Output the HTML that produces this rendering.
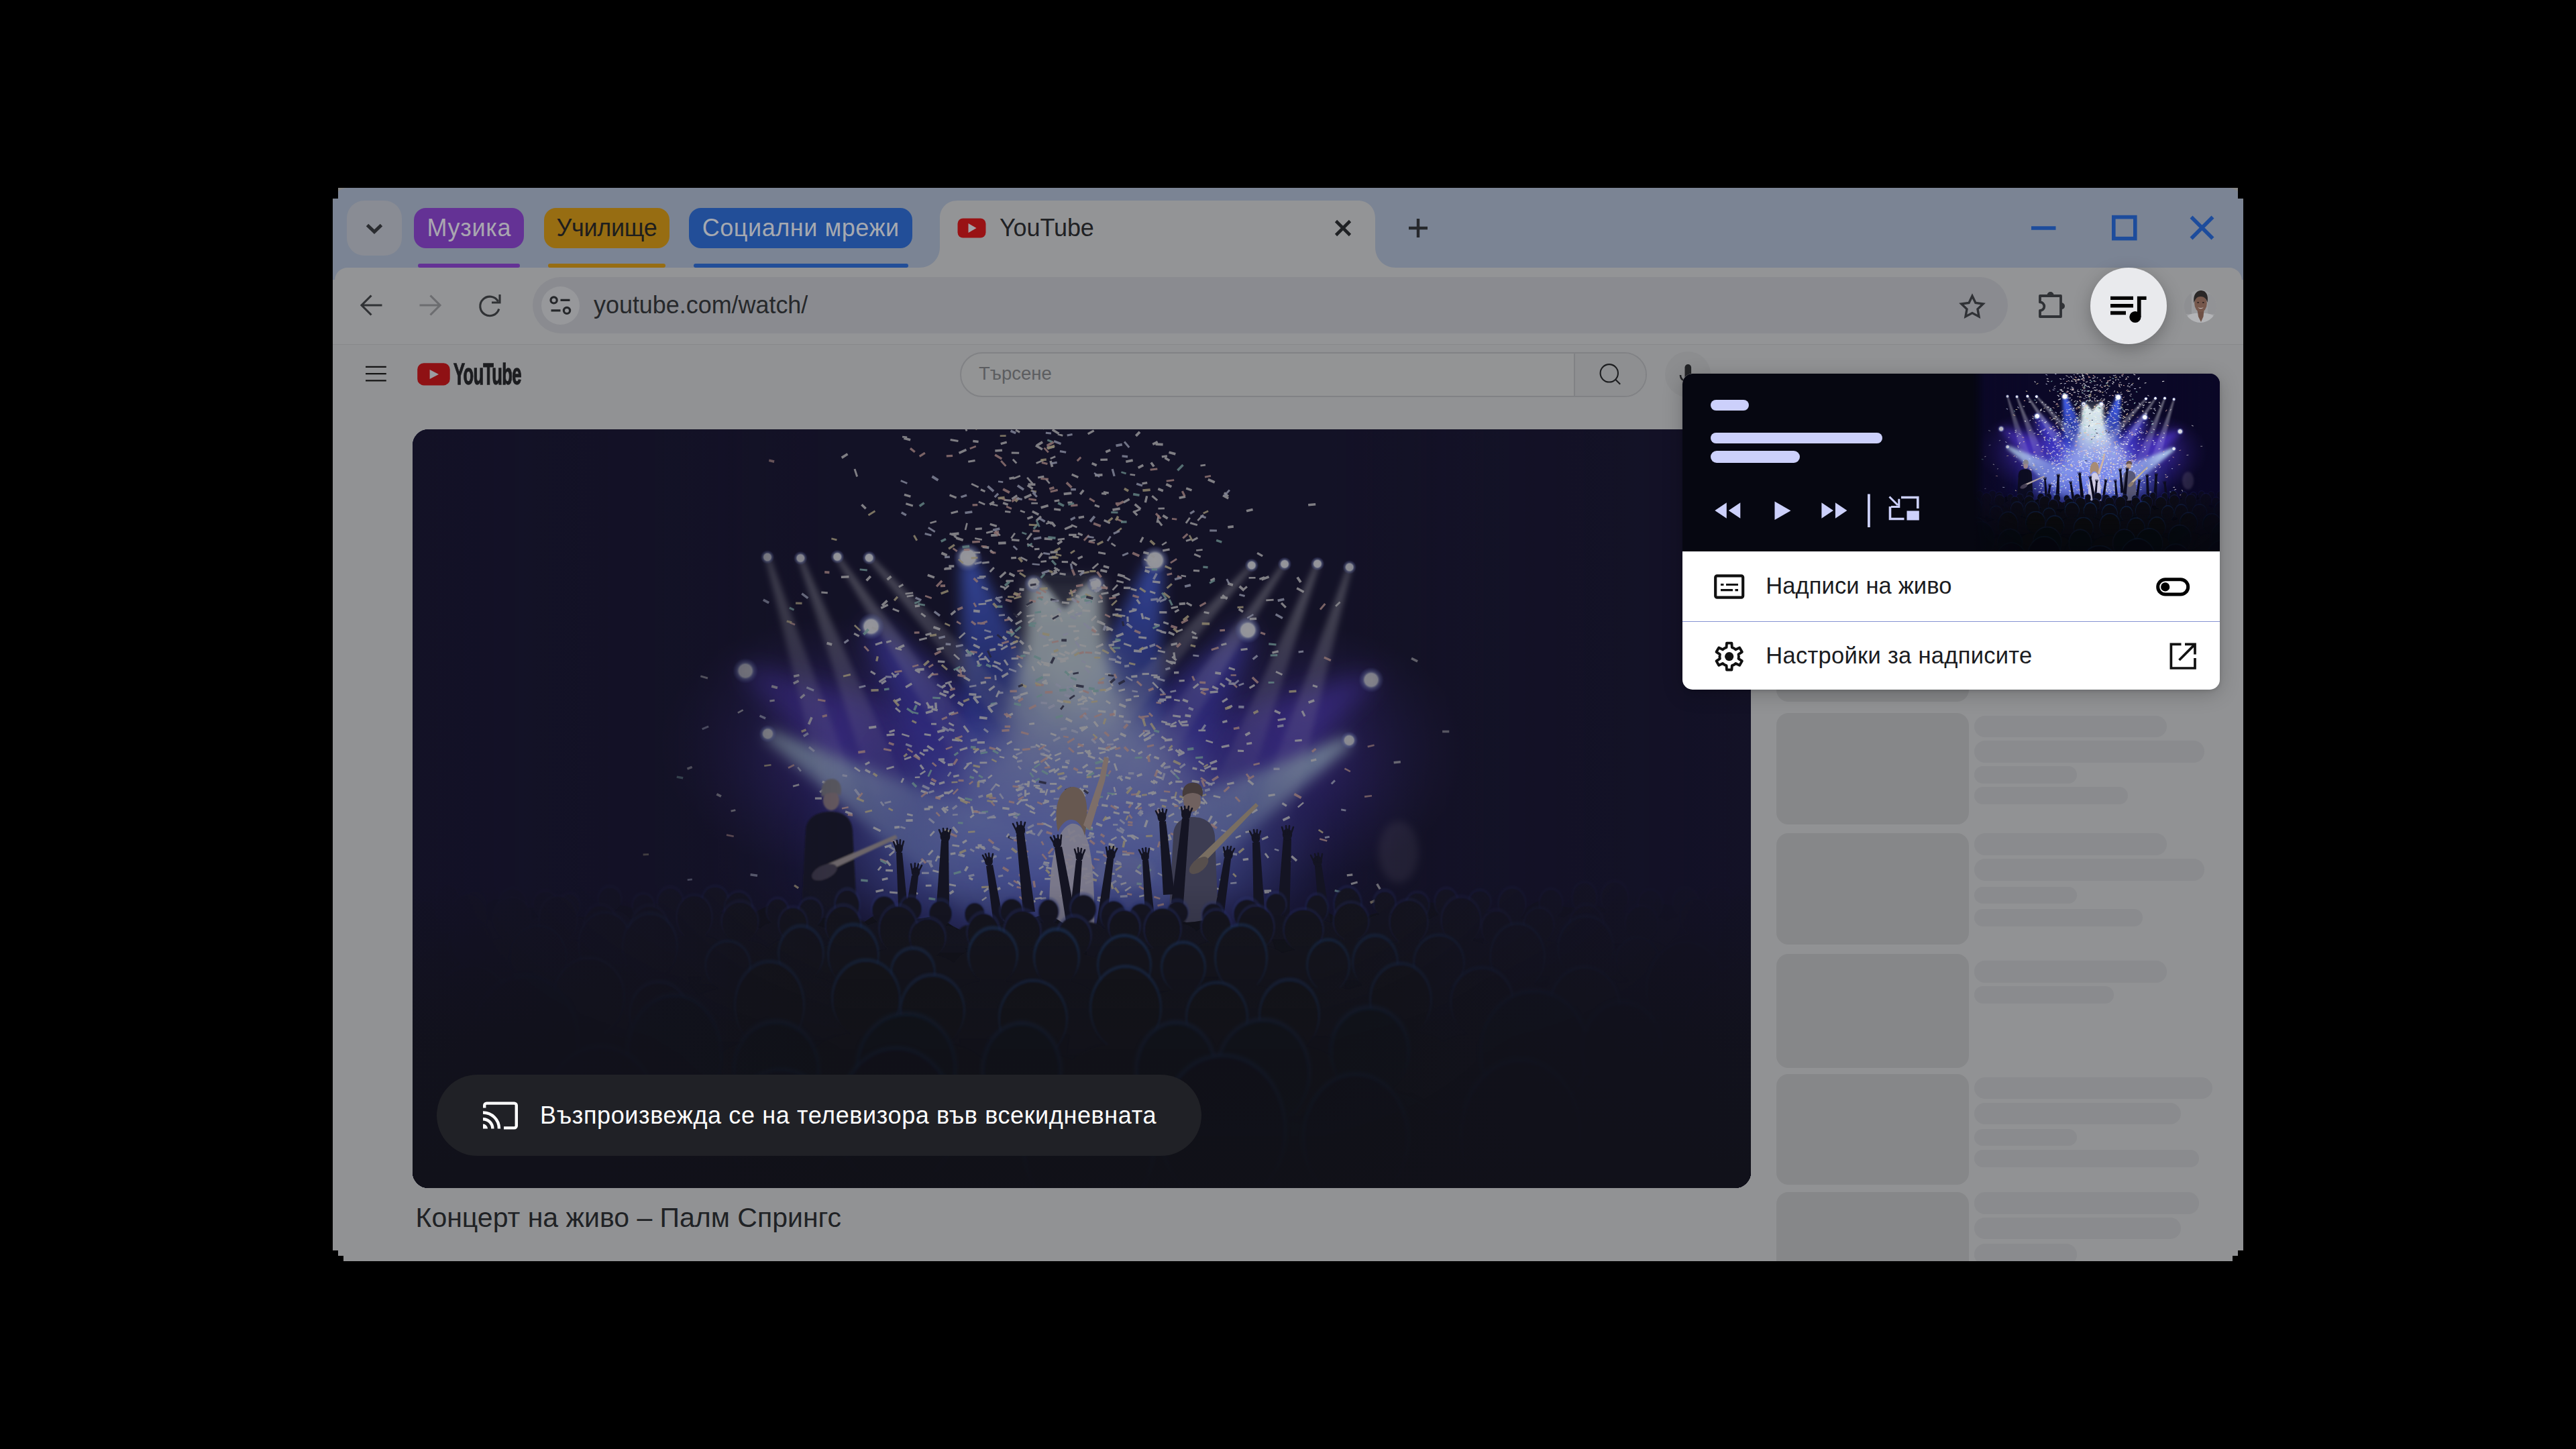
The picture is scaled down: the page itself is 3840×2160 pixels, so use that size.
<!DOCTYPE html>
<html lang="bg"><head><meta charset="utf-8"><title>YouTube</title><style>
html,body{margin:0;padding:0;background:#000;}
body{width:3840px;height:2160px;position:relative;overflow:hidden;font-family:"Liberation Sans",sans-serif;}
.abs{position:absolute;}
.t{white-space:nowrap;font-family:"Liberation Sans",sans-serif;}
#win{position:absolute;left:0;top:0;width:3840px;height:2160px;background:#878787;
 clip-path:polygon(504px 280px,3336px 280px,3336px 296px,3344px 296px,3344px 1864px,3336px 1864px,3336px 1872px,3328px 1872px,3328px 1880px,512px 1880px,512px 1872px,504px 1872px,504px 1864px,496px 1864px,496px 296px,504px 296px);}
#strip{position:absolute;left:496px;top:280px;width:2848px;height:160px;border-radius:23px 23px 0 0;background:#7b8494;}
.chip{position:absolute;top:310px;height:60px;border-radius:18px;font-size:36px;line-height:59px;text-align:center;white-space:nowrap;}
.ul{position:absolute;top:393px;height:6px;border-radius:3px;}
#toolbar{position:absolute;left:498.5px;top:399px;width:2843.5px;height:115px;border-radius:19px 19px 0 0;background:#939496;border-bottom:1.5px solid #88898b;box-sizing:border-box;}
#omni{position:absolute;left:794px;top:413px;width:2199px;height:84px;border-radius:42px;background:#8a8b90;}
#page{position:absolute;left:0;top:0;width:3840px;height:2160px;
 clip-path:polygon(496px 514px,3344px 514px,3344px 1864px,3336px 1864px,3336px 1872px,3328px 1872px,3328px 1880px,512px 1880px,512px 1872px,504px 1872px,504px 1864px,496px 1864px);
 background:#919294;}
#video{position:absolute;left:615px;top:640px;width:1995px;height:1131px;border-radius:24px;overflow:hidden;background:#14122a;}
#popup{position:absolute;left:2507.7px;top:557px;width:801.3px;height:471px;border-radius:15px;background:#fff;overflow:hidden;}
#popshadow{position:absolute;left:2507.7px;top:557px;width:801.3px;height:471px;border-radius:15px;box-shadow:0 6px 30px rgba(0,0,0,0.22),0 2px 6px rgba(0,0,0,0.12);}
</style></head><body>
<svg width="0" height="0" style="position:absolute"><defs>
<filter id="b1" x="-40%" y="-40%" width="180%" height="180%"><feGaussianBlur stdDeviation="0.8"/></filter>
<filter id="b2" x="-40%" y="-40%" width="180%" height="180%"><feGaussianBlur stdDeviation="1.6"/></filter>
<filter id="b3" x="-40%" y="-40%" width="180%" height="180%"><feGaussianBlur stdDeviation="2.6"/></filter>
<filter id="b4" x="-40%" y="-40%" width="180%" height="180%"><feGaussianBlur stdDeviation="4"/></filter>
<filter id="b6" x="-40%" y="-40%" width="180%" height="180%"><feGaussianBlur stdDeviation="6"/></filter>
<filter id="b10" x="-40%" y="-40%" width="180%" height="180%"><feGaussianBlur stdDeviation="10"/></filter>
<filter id="b18" x="-40%" y="-40%" width="180%" height="180%"><feGaussianBlur stdDeviation="18"/></filter>
<filter id="b30" x="-40%" y="-40%" width="180%" height="180%"><feGaussianBlur stdDeviation="30"/></filter>
<filter id="b50" x="-40%" y="-40%" width="180%" height="180%"><feGaussianBlur stdDeviation="50"/></filter>

<radialGradient id="gGlow" cx="0.5" cy="0.5" r="0.5">
 <stop offset="0" stop-color="#7086ff" stop-opacity="0.95"/>
 <stop offset="0.22" stop-color="#4656f0" stop-opacity="0.85"/>
 <stop offset="0.5" stop-color="#2c32c8" stop-opacity="0.55"/>
 <stop offset="0.75" stop-color="#201c90" stop-opacity="0.22"/>
 <stop offset="1" stop-color="#1a1660" stop-opacity="0"/>
</radialGradient>
<radialGradient id="gDot" cx="0.5" cy="0.5" r="0.5">
 <stop offset="0" stop-color="#ffffff" stop-opacity="1"/>
 <stop offset="0.5" stop-color="#f6f8ff" stop-opacity="1"/>
 <stop offset="0.66" stop-color="#b0c0ff" stop-opacity="0.5"/>
 <stop offset="1" stop-color="#7080ff" stop-opacity="0"/>
</radialGradient>
<radialGradient id="gPurple" cx="0.5" cy="0.5" r="0.5">
 <stop offset="0" stop-color="#6040e8" stop-opacity="0.6"/>
 <stop offset="0.6" stop-color="#4830c0" stop-opacity="0.25"/>
 <stop offset="1" stop-color="#4a30a0" stop-opacity="0"/>
</radialGradient>
<linearGradient id="gCol" gradientUnits="userSpaceOnUse" x1="0" y1="226" x2="0" y2="470">
 <stop offset="0" stop-color="#f0ffff" stop-opacity="0.96"/>
 <stop offset="0.5" stop-color="#e4f6fc" stop-opacity="0.84"/>
 <stop offset="0.8" stop-color="#d0e4f8" stop-opacity="0.4"/>
 <stop offset="1" stop-color="#c0d4f8" stop-opacity="0"/>
</linearGradient>
<linearGradient id="gCol2" gradientUnits="userSpaceOnUse" x1="0" y1="330" x2="0" y2="660">
 <stop offset="0" stop-color="#e8f6fc" stop-opacity="0.9"/>
 <stop offset="0.5" stop-color="#c8d8f8" stop-opacity="0.62"/>
 <stop offset="1" stop-color="#b0c0f4" stop-opacity="0"/>
</linearGradient>
<linearGradient id="gBottom" x1="0" y1="0" x2="0" y2="1">
 <stop offset="0" stop-color="#06070e" stop-opacity="0"/>
 <stop offset="0.6" stop-color="#06070e" stop-opacity="0"/>
 <stop offset="0.8" stop-color="#06070e" stop-opacity="0.7"/>
 <stop offset="1" stop-color="#06070e" stop-opacity="0.95"/>
</linearGradient>
<linearGradient id="gSide" x1="0" y1="0" x2="1" y2="0">
 <stop offset="0" stop-color="#0b0827" stop-opacity="0.95"/>
 <stop offset="0.2" stop-color="#0b0827" stop-opacity="0.5"/>
 <stop offset="0.32" stop-color="#0b0827" stop-opacity="0"/>
 <stop offset="0.68" stop-color="#0b0827" stop-opacity="0"/>
 <stop offset="0.8" stop-color="#0b0827" stop-opacity="0.5"/>
 <stop offset="1" stop-color="#0b0827" stop-opacity="0.95"/>
</linearGradient>
<linearGradient id="thfade" x1="0" y1="0" x2="1" y2="0">
 <stop offset="0" stop-color="#060711" stop-opacity="1"/>
 <stop offset="0.045" stop-color="#060711" stop-opacity="0"/>
</linearGradient>

<g id="concert">
<rect width="1995" height="1131" fill="#0b0827"/>
<ellipse cx="968" cy="600" rx="540" ry="310" fill="url(#gGlow)"/>
<ellipse cx="620" cy="470" rx="250" ry="190" fill="url(#gPurple)"/>
<ellipse cx="1320" cy="480" rx="250" ry="190" fill="url(#gPurple)"/>
<linearGradient id="bg1" gradientUnits="userSpaceOnUse" x1="496" y1="360" x2="912" y2="600"><stop offset="0" stop-color="#5c3ce8" stop-opacity="0.8"/><stop offset="1" stop-color="#4030c0" stop-opacity="0"/></linearGradient>
<polygon points="492,367 500,353 977,487 847,713" fill="url(#bg1)" filter="url(#b18)"/>
<linearGradient id="bg2" gradientUnits="userSpaceOnUse" x1="1429" y1="373" x2="1013" y2="613"><stop offset="0" stop-color="#5c3ce8" stop-opacity="0.8"/><stop offset="1" stop-color="#4030c0" stop-opacity="0"/></linearGradient>
<polygon points="1425,366 1433,380 1078,726 948,500" fill="url(#bg2)" filter="url(#b18)"/>
<linearGradient id="bg3" gradientUnits="userSpaceOnUse" x1="683" y1="294" x2="965" y2="682"><stop offset="0" stop-color="#5048f2" stop-opacity="0.9"/><stop offset="1" stop-color="#3830d0" stop-opacity="0"/></linearGradient>
<polygon points="675,300 691,288 1070,606 860,759" fill="url(#bg3)" filter="url(#b18)"/>
<linearGradient id="bg4" gradientUnits="userSpaceOnUse" x1="1245" y1="299" x2="963" y2="687"><stop offset="0" stop-color="#5048f2" stop-opacity="0.9"/><stop offset="1" stop-color="#3830d0" stop-opacity="0"/></linearGradient>
<polygon points="1237,293 1253,305 1068,764 858,611" fill="url(#bg4)" filter="url(#b18)"/>
<linearGradient id="bg5" gradientUnits="userSpaceOnUse" x1="828" y1="196" x2="942" y2="652"><stop offset="0" stop-color="#4a6cff" stop-opacity="0.95"/><stop offset="1" stop-color="#2838d8" stop-opacity="0"/></linearGradient>
<polygon points="817,199 839,193 1058,623 825,681" fill="url(#bg5)" filter="url(#b10)"/>
<linearGradient id="bg6" gradientUnits="userSpaceOnUse" x1="1107" y1="200" x2="993" y2="656"><stop offset="0" stop-color="#4a6cff" stop-opacity="0.95"/><stop offset="1" stop-color="#2838d8" stop-opacity="0"/></linearGradient>
<polygon points="1096,197 1118,203 1110,685 877,627" fill="url(#bg6)" filter="url(#b10)"/>
<linearGradient id="bg7" gradientUnits="userSpaceOnUse" x1="529" y1="454" x2="975" y2="722"><stop offset="0" stop-color="#c4e4fa" stop-opacity="0.95"/><stop offset="1" stop-color="#7898e8" stop-opacity="0"/></linearGradient>
<polygon points="525,460 533,448 1024,640 926,803" fill="url(#bg7)" filter="url(#b10)"/>
<linearGradient id="bg8" gradientUnits="userSpaceOnUse" x1="1396" y1="464" x2="950" y2="732"><stop offset="0" stop-color="#c4e4fa" stop-opacity="0.95"/><stop offset="1" stop-color="#7898e8" stop-opacity="0"/></linearGradient>
<polygon points="1392,458 1400,470 999,813 901,650" fill="url(#bg8)" filter="url(#b10)"/>
<ellipse cx="972" cy="625" rx="320" ry="120" fill="#8294f0" opacity="0.5" filter="url(#b50)"/>
<polygon points="925,330 1019,330 1069,403 1174,523 1210,660 760,660 816,523 920,403" fill="url(#gCol2)" filter="url(#b30)"/>
<polygon points="918,226 1026,226 1032,330 1056,420 1040,470 904,470 888,420 912,330" fill="url(#gCol)" filter="url(#b10)"/>
<polygon points="934,218 1010,218 972,268" fill="#0b0827" opacity="0.8" filter="url(#b4)"/>
<linearGradient id="bg9" gradientUnits="userSpaceOnUse" x1="529" y1="190" x2="652" y2="592"><stop offset="0" stop-color="#ffffff" stop-opacity="0.45"/><stop offset="1" stop-color="#d0d0ff" stop-opacity="0"/></linearGradient>
<polygon points="526,191 532,189 679,583 625,600" fill="url(#bg9)" filter="url(#b4)"/>
<linearGradient id="bg10" gradientUnits="userSpaceOnUse" x1="578" y1="192" x2="729" y2="584"><stop offset="0" stop-color="#ffffff" stop-opacity="0.45"/><stop offset="1" stop-color="#d0d0ff" stop-opacity="0"/></linearGradient>
<polygon points="575,193 581,191 755,574 702,594" fill="url(#bg10)" filter="url(#b4)"/>
<linearGradient id="bg11" gradientUnits="userSpaceOnUse" x1="633" y1="190" x2="868" y2="538"><stop offset="0" stop-color="#ffffff" stop-opacity="0.45"/><stop offset="1" stop-color="#d0d0ff" stop-opacity="0"/></linearGradient>
<polygon points="631,192 635,188 891,523 845,554" fill="url(#bg11)" filter="url(#b4)"/>
<linearGradient id="bg12" gradientUnits="userSpaceOnUse" x1="681" y1="191" x2="962" y2="503"><stop offset="0" stop-color="#ffffff" stop-opacity="0.45"/><stop offset="1" stop-color="#d0d0ff" stop-opacity="0"/></linearGradient>
<polygon points="679,193 683,189 983,484 941,522" fill="url(#bg12)" filter="url(#b4)"/>
<linearGradient id="bg13" gradientUnits="userSpaceOnUse" x1="1397" y1="205" x2="1274" y2="607"><stop offset="0" stop-color="#ffffff" stop-opacity="0.45"/><stop offset="1" stop-color="#d0d0ff" stop-opacity="0"/></linearGradient>
<polygon points="1394,204 1400,206 1301,615 1247,598" fill="url(#bg13)" filter="url(#b4)"/>
<linearGradient id="bg14" gradientUnits="userSpaceOnUse" x1="1349" y1="200" x2="1198" y2="592"><stop offset="0" stop-color="#ffffff" stop-opacity="0.45"/><stop offset="1" stop-color="#d0d0ff" stop-opacity="0"/></linearGradient>
<polygon points="1346,199 1352,201 1225,602 1172,582" fill="url(#bg14)" filter="url(#b4)"/>
<linearGradient id="bg15" gradientUnits="userSpaceOnUse" x1="1300" y1="201" x2="1065" y2="549"><stop offset="0" stop-color="#ffffff" stop-opacity="0.45"/><stop offset="1" stop-color="#d0d0ff" stop-opacity="0"/></linearGradient>
<polygon points="1298,199 1302,203 1088,565 1042,534" fill="url(#bg15)" filter="url(#b4)"/>
<linearGradient id="bg16" gradientUnits="userSpaceOnUse" x1="1251" y1="203" x2="970" y2="515"><stop offset="0" stop-color="#ffffff" stop-opacity="0.45"/><stop offset="1" stop-color="#d0d0ff" stop-opacity="0"/></linearGradient>
<polygon points="1249,201 1253,205 991,534 949,496" fill="url(#bg16)" filter="url(#b4)"/>
<circle cx="529" cy="190.5" r="10.4" fill="url(#gDot)"/>
<circle cx="578.3" cy="192" r="10.4" fill="url(#gDot)"/>
<circle cx="633.2" cy="190" r="10.4" fill="url(#gDot)"/>
<circle cx="680.6" cy="191.5" r="10.4" fill="url(#gDot)"/>
<circle cx="828" cy="191" r="21.8" fill="url(#gDot)"/>
<circle cx="925.6" cy="230" r="14.2" fill="url(#gDot)"/>
<circle cx="1018.5" cy="230" r="14.2" fill="url(#gDot)"/>
<circle cx="1106.7" cy="195.2" r="21.8" fill="url(#gDot)"/>
<circle cx="1250.8" cy="202.7" r="10.4" fill="url(#gDot)"/>
<circle cx="1300" cy="200.8" r="10.4" fill="url(#gDot)"/>
<circle cx="1348.9" cy="200.4" r="10.4" fill="url(#gDot)"/>
<circle cx="1396.7" cy="205.5" r="10.4" fill="url(#gDot)"/>
<circle cx="683.5" cy="293.8" r="19.9" fill="url(#gDot)"/>
<circle cx="1245.2" cy="299.4" r="19.9" fill="url(#gDot)"/>
<circle cx="496.2" cy="360" r="19" fill="url(#gDot)"/>
<circle cx="1429" cy="373.5" r="19" fill="url(#gDot)"/>
<circle cx="529.5" cy="453.8" r="13.3" fill="url(#gDot)"/>
<circle cx="1396.2" cy="463.6" r="13.3" fill="url(#gDot)"/>
<path d="M1130.2 319.6l9.3 -2l0.7 3.3l-9.3 2zM1462.5 495l10.2 -1l0.3 3.4l-10.2 1zM910.4 330.5l10 1.7l-0.6 3.6l-10 -1.7zM1174.3 52.7l7.5 -1l0.4 2.9l-7.5 1zM1215.1 144l8.5 -1l0.4 3.7l-8.5 1zM915.2 277.2l11.8 -1.5l0.4 2.9l-11.8 1.5zM942 551.6l7.2 1.7l-0.8 3.3l-7.2 -1.7zM1398.5 676.3l9.7 -2.7l0.8 3l-9.7 2.7zM947.3 135.7l6.1 4.1l-1.6 2.4l-6.1 -4.1zM588.9 439l4.5 -10.5l3.3 1.4l-4.5 10.5zM611.6 523.5l6.8 2.9l-1.4 3.3l-6.8 -2.9zM801.5 631.6l7.6 -1.3l0.5 3.2l-7.6 1.3zM822.9 441.1l7.2 9.5l-2.5 1.9l-7.2 -9.5zM973.3 405.1l7.7 -0.3l0.1 3.2l-7.7 0.3zM1243 467.2l7.9 -1.2l0.5 3.2l-7.9 1.2zM799.9 376.3l5.7 9.7l-2.6 1.5l-5.7 -9.7zM986 312.1l6.2 -3.6l1.8 3.2l-6.2 3.6zM1301.8 650.6l5.1 -8.1l2.8 1.8l-5.1 8.1zM706.4 222.7l5.8 -5l2.4 2.7l-5.8 5zM915.8 131.6l8.2 -3.1l1.2 3.2l-8.2 3.1zM697.9 377.4l6.8 -4.5l2 3l-6.8 4.5zM912.8 543l7.1 -1.8l0.7 2.7l-7.1 1.8zM939.7 364.3l10.5 0l-0 3.7l-10.5 -0zM872.8 318.9l7.6 1.8l-0.8 3.2l-7.6 -1.8zM781.8 449.5l11.4 -3.5l1.1 3.5l-11.4 3.5zM912 527.2l7.9 1.1l-0.4 3.1l-7.9 -1.1zM1188.5 390.3l11.9 -1l0.3 3.4l-11.9 1zM1145.4 435.1l9.6 -1.2l0.4 3.4l-9.6 1.2zM849 197.7l10.5 -1.1l0.3 3l-10.5 1.1zM1157.9 678.7l9.1 -2.3l0.9 3.7l-9.1 2.3zM1160.7 165.1l8.9 -4.8l1.5 2.7l-8.9 4.8zM732.6 490.5l10.2 -3.5l0.9 2.7l-10.2 3.5zM1122.3 628.9l8.9 1.8l-0.7 3.3l-8.9 -1.8zM1192.9 381.8l8.8 4.1l-1.5 3.1l-8.8 -4.1zM807.9 334.6l8.3 7.5l-1.8 2l-8.3 -7.5zM828 46.8l10.3 -1.8l0.5 2.9l-10.3 1.8zM1334.9 405.5l8.6 -3.2l1.3 3.4l-8.6 3.2zM1261.8 221.9l7.7 -3l1.1 2.9l-7.7 3zM1182.9 462.5l10.5 3.2l-0.8 2.6l-10.5 -3.2zM1025.9 458.9l6.1 7.4l-2.8 2.3l-6.1 -7.4zM861.2 109.7l11.5 2.8l-0.6 2.6l-11.5 -2.8zM1172.1 553.3l9.6 2.6l-1 3.7l-9.6 -2.6zM983.3 65.7l9.7 4.2l-1.3 3.1l-9.7 -4.2zM1075.5 120.8l6 6.1l-2.4 2.3l-6 -6.1zM914.3 262.3l6.4 -4.5l1.6 2.3l-6.4 4.5zM1100.9 365.2l9.7 0.3l-0.1 2.8l-9.7 -0.3zM860 413.5l5.8 7l-2.9 2.4l-5.8 -7zM718.1 591.8l7.7 -0.9l0.4 3.7l-7.7 0.9zM941.9 161.1l11.9 0.8l-0.3 3.6l-11.9 -0.8zM800.1 436.4l7.5 4l-1.4 2.7l-7.5 -4zM659.5 503.1l8.2 5.6l-1.5 2.2l-8.2 -5.6zM1044.2 462.7l8 -3.3l1.2 2.9l-8 3.3zM1247.7 281.1l10.3 -0.5l0.2 3.4l-10.3 0.5zM1241.3 599.3l7.8 -1.5l0.5 2.7l-7.8 1.5zM767.8 406.2l4.3 7.7l-2.8 1.6l-4.3 -7.7zM1195 700.6l9.4 -2.9l1 3.2l-9.4 2.9zM1008.1 165.6l9.5 -2.2l0.6 2.6l-9.5 2.2zM951.2 215l9 -4.2l1.5 3.3l-9 4.2zM862.1 178.9l5.6 4.5l-2.2 2.7l-5.6 -4.5zM1217.1 354.1l9.2 2.8l-0.9 2.8l-9.2 -2.8zM1014.4 292.7l6.4 7.5l-2.9 2.4l-6.4 -7.5zM474.2 567.8l6.8 -1.6l0.7 2.8l-6.8 1.6zM895.8 43.8l5.6 5.7l-2 2l-5.6 -5.7zM768.1 470.6l9.6 6.2l-1.8 2.8l-9.6 -6.2zM846.5 376.5l8.1 -1.6l0.7 3.6l-8.1 1.6zM873 167.8l11.5 -0.5l0.2 3.9l-11.5 0.5zM998.3 405l7.4 -2.3l0.9 2.9l-7.4 2.3zM844.6 218.2l9.9 -0.1l0 2.7l-9.9 0.1zM1077.8 110.3l8.6 7.2l-2.3 2.8l-8.6 -7.2zM862 156.2l9.3 -0.6l0.3 3.8l-9.3 0.6zM759 273.2l6.5 4.8l-1.8 2.4l-6.5 -4.8zM901.7 617.3l10.3 1.9l-0.6 3l-10.3 -1.9zM954.6 -1l9.9 6.1l-1.8 3l-9.9 -6.1zM1067.6 270.4l10.5 -2.7l0.8 3.2l-10.5 2.7zM1052.6 275.7l9.9 1.2l-0.3 2.6l-9.9 -1.2zM1112.9 401.3l10.4 -0.1l0.1 3.8l-10.4 0.1zM1338.8 492.4l8 -1.9l0.8 3.3l-8 1.9zM1115.3 299.7l8.4 2l-0.7 3.2l-8.4 -2zM881.9 103.8l10.3 1l-0.3 2.9l-10.3 -1zM1103.3 225.3l11.4 1.3l-0.4 3.3l-11.4 -1.3zM1047.6 266.7l9.5 1.1l-0.3 3l-9.5 -1.1zM1021.2 699.9l9.6 3.9l-1.1 2.7l-9.6 -3.9zM1122.5 397.6l8.7 -0.3l0.1 3.7l-8.7 0.3zM867.1 344.8l10.1 3.7l-1.1 3.1l-10.1 -3.7zM1042.3 168.8l6.3 4.2l-1.5 2.2l-6.3 -4.2zM1178.2 548.4l7 8.9l-2.1 1.6l-7 -8.9zM750.1 356.8l7.1 4.3l-1.8 3l-7.1 -4.3zM993.9 443.9l8.7 -1.7l0.7 3.4l-8.7 1.7zM917.2 71l8 8.9l-2.1 1.8l-8 -8.9zM853.8 337.3l7.1 8.7l-2.3 1.9l-7.1 -8.7zM1146.3 439.4l10.5 -0.1l0 3.3l-10.5 0.1zM1211.2 93.2l5.9 5.8l-2.3 2.3l-5.9 -5.8zM884.4 225.1l10.1 -0.6l0.2 3l-10.1 0.6zM961.5 339.4l7.2 1.5l-0.8 3.7l-7.2 -1.5zM947.9 313.1l6.9 -1.8l0.7 2.7l-6.9 1.8zM935 538l8 0.4l-0.2 3.8l-8 -0.4zM967 279.7l2.9 6.5l-3.1 1.4l-2.9 -6.5zM801.4 275.1l6.7 -5.8l2.2 2.6l-6.7 5.8zM1048.4 484.1l8.5 1.9l-0.7 3.1l-8.5 -1.9zM1320.5 219.4l5.1 7.6l-3.2 2.1l-5.1 -7.6zM1021.1 284.2l9.5 4.1l-1.5 3.5l-9.5 -4.1zM915.6 533l1.1 -8.9l3.7 0.4l-1.1 8.9zM1287.6 359.9l9.5 4.6l-1.3 2.6l-9.5 -4.6zM1037.3 320.6l8.2 -1.6l0.7 3.4l-8.2 1.6zM829.5 392.9l11 0.8l-0.3 3.7l-11 -0.8zM993.1 390.6l8.6 -2l0.6 2.7l-8.6 2zM1172.6 493.5l7.7 5.3l-1.6 2.3l-7.7 -5.3zM1204.4 249.3l10.7 0.3l-0.1 3.1l-10.7 -0.3zM811.5 355.8l6.3 5.2l-2.1 2.6l-6.3 -5.2zM1159.4 627.8l7.9 -4.8l2 3.3l-7.9 4.8zM850.8 688l6.5 -5l1.9 2.5l-6.5 5zM1067.4 278.9l0.3 8l-3.1 0.1l-0.3 -8zM1204.8 377.4l6.9 4.9l-1.9 2.7l-6.9 -4.9zM1148.7 401.3l7.9 3l-1.3 3.4l-7.9 -3zM694.6 375.3l9.8 -6.6l1.8 2.6l-9.8 6.6zM1101.3 523.1l6 3.8l-1.5 2.3l-6 -3.8zM957.3 204.8l7.9 4.6l-1.6 2.8l-7.9 -4.6zM1091.6 278.9l8.1 2.8l-1.1 3.1l-8.1 -2.8zM806.7 591.7l6.9 8.5l-2.7 2.2l-6.9 -8.5zM780.5 548.1l10.7 -4.5l1.3 3.2l-10.7 4.5zM833.7 308.4l8.4 3.8l-1.1 2.5l-8.4 -3.8zM1246.5 521.8l8 6.5l-2.1 2.6l-8 -6.5zM1130.4 265.1l10.2 -2.1l0.6 3l-10.2 2.1zM1031.4 133.9l9 4.3l-1.4 3l-9 -4.3zM814 405.1l7.9 5l-2.1 3.3l-7.9 -5zM943.6 494.4l6.5 7.5l-2.2 1.9l-6.5 -7.5zM965 344.3l8.4 -1.5l0.7 3.6l-8.4 1.5zM797.6 498.3l7.7 -0.7l0.4 3.8l-7.7 0.7zM963.6 518.4l9.6 1.5l-0.4 2.9l-9.6 -1.5zM638.7 40.8l8.8 -5.6l2 3.1l-8.8 5.6zM1054.3 -4.7l3.4 -10.6l3 1l-3.4 10.6zM978.2 243.2l9.4 -3.3l1.1 3.1l-9.4 3.3zM1006.3 478.5l3.7 6.9l-2.5 1.3l-3.7 -6.9zM924.6 120.7l9.5 4.9l-1.6 3.1l-9.5 -4.9zM1375.1 262.7l6.5 -6.1l1.9 2l-6.5 6.1zM1060.7 318.1l11.1 3.7l-0.9 2.6l-11.1 -3.7zM532.2 403.6l7.3 -1.1l0.4 2.9l-7.3 1.1zM845.2 427.6l11.6 1.4l-0.5 3.8l-11.6 -1.4zM1078.5 544.4l7.8 1.1l-0.5 3.5l-7.8 -1.1zM1005.9 5.4l9 -5l1.6 2.8l-9 5zM876.3 20l9 -2.6l0.9 3.3l-9 2.6zM767.6 412.6l8.6 -0.8l0.3 3.8l-8.6 0.8zM609.4 241.5l9.5 0.7l-0.2 3.1l-9.5 -0.7zM1099.8 340.5l9.2 -0.2l0.1 2.7l-9.2 0.2zM883.3 342.8l5.3 7.9l-2.5 1.7l-5.3 -7.9zM991.8 209.9l9.6 -0l0 3l-9.6 0zM1206.9 434.9l7.1 -1.8l0.8 3.4l-7.1 1.8zM874.3 219.5l8.8 -8.1l2.3 2.5l-8.8 8.1zM941.9 346.8l7.7 1.1l-0.5 3.6l-7.7 -1.1zM885.2 468l7.5 -4.2l1.5 2.6l-7.5 4.2zM1120.7 461.7l11.6 -1.3l0.4 3.8l-11.6 1.3zM964.1 332.1l9.2 3.7l-1.1 2.7l-9.2 -3.7zM868.2 30.2l10.6 -0.8l0.3 3.5l-10.6 0.8zM748.8 404.6l9.3 4.7l-1.5 3l-9.3 -4.7zM1174.3 506.5l6.9 1.7l-0.6 2.6l-6.9 -1.7zM1281.1 331.5l9.2 -2.2l0.8 3.3l-9.2 2.2zM952.8 276l6.3 8.5l-2.6 1.9l-6.3 -8.5zM675.6 506.1l7.4 3.8l-1.6 3l-7.4 -3.8zM898.6 278.2l7.7 -7.5l2.3 2.4l-7.7 7.5zM408.8 504.4l7.2 -2.7l1.3 3.4l-7.2 2.7zM567 377.2l7.8 -4l1.6 3.2l-7.8 4zM859.6 211.5l6.1 -6.5l2.2 2l-6.1 6.5zM950.5 181.5l11.1 -0.7l0.2 3.7l-11.1 0.7zM758.1 499.3l4.9 6.5l-2.6 1.9l-4.9 -6.5zM754.8 312.6l11.6 -2.9l0.7 2.8l-11.6 2.9zM1129.3 441l9.2 -0.5l0.2 3.2l-9.2 0.5zM936.1 114.9l11 -3.2l1.1 3.6l-11 3.2zM998.1 617.5l10.4 1.2l-0.3 2.8l-10.4 -1.2zM870.8 473.3l7.2 4.4l-1.8 2.8l-7.2 -4.4zM796.8 541.8l7.9 -5.3l1.8 2.6l-7.9 5.3zM751.6 356.5l10.9 -0.7l0.2 3.8l-10.9 0.7zM979.5 594.8l1.8 9.5l-3.2 0.6l-1.8 -9.5zM838.8 146.9l9.9 -0.7l0.2 3.4l-9.9 0.7zM971.5 147.2l10.9 -4.6l1.3 3.1l-10.9 4.6zM1082 457.3l8.3 -6.8l1.7 2.1l-8.3 6.8zM1152.5 165l7 -2.3l0.9 2.7l-7 2.3zM998.6 268.3l11.9 1l-0.3 3.1l-11.9 -1zM705.3 655.8l10.8 0.5l-0.2 3.3l-10.8 -0.5zM732.8 11.5l9.8 2.4l-0.9 3.5l-9.8 -2.4zM1014.8 516.8l7.7 -1.6l0.5 2.6l-7.7 1.6zM1180 270.9l7.8 1.7l-0.7 3l-7.8 -1.7zM1043.3 274.7l8.9 -0.4l0.2 3.5l-8.9 0.4zM1012.6 206.5l8.8 -7.6l1.8 2.2l-8.8 7.6zM728.2 687.8l7 3.1l-1.5 3.3l-7 -3.1zM1081 252.7l4.6 6.5l-2.7 1.9l-4.6 -6.5zM914.6 163.4l7.1 -9.3l2.5 1.9l-7.1 9.3zM865 694.7l7.1 -1.1l0.5 3.1l-7.1 1.1zM727.4 526.1l3.2 -6.6l2.5 1.2l-3.2 6.6zM876.4 326.9l9.8 -5.7l1.5 2.7l-9.8 5.7zM813.8 33.7l10.9 -4.9l1.5 3.3l-10.9 4.9zM1018.2 323.6l10.6 -4.8l1.3 2.9l-10.6 4.8zM801.1 96.6l10.1 3.9l-1.1 3l-10.1 -3.9zM968 256.2l11.3 1.4l-0.4 3.2l-11.3 -1.4zM900 536.4l8.9 -2.4l0.9 3.3l-8.9 2.4zM1188.7 224l6.5 -3.2l1.4 2.9l-6.5 3.2zM1052.1 388.5l9.5 -2.3l0.7 2.9l-9.5 2.3zM880.9 237.8l7.1 -6.1l1.8 2.1l-7.1 6.1zM810.4 460.3l9.8 3.1l-0.9 2.9l-9.8 -3.1zM756.7 480.3l7.2 4.1l-1.5 2.6l-7.2 -4.1zM1025.8 208l9.9 2.4l-0.9 3.7l-9.9 -2.4zM1151.8 424.4l8.7 1.4l-0.6 3.8l-8.7 -1.4zM991 408.7l9.7 -1.5l0.4 2.7l-9.7 1.5zM877.5 367.6l9.3 -5.7l1.9 3.1l-9.3 5.7zM991.1 402.5l10.4 -4.3l1.4 3.4l-10.4 4.3zM836.8 319.6l9.4 4.5l-1.5 3.2l-9.4 -4.5zM1135.4 401.7l8.6 1.6l-0.5 2.6l-8.6 -1.6zM985 299.5l8.6 -0.5l0.2 3.1l-8.6 0.5zM1009.3 599.9l6.8 1.8l-0.9 3.5l-6.8 -1.8zM929.8 22.5l10 6.1l-1.8 2.9l-10 -6.1zM950.2 42.4l7.5 -3.2l1.1 2.5l-7.5 3.2zM876.5 232.5l6.9 2.3l-1 2.8l-6.9 -2.3zM1213 369.7l8.2 5.3l-1.8 2.7l-8.2 -5.3zM780.8 326.5l10.8 -2.6l0.9 3.6l-10.8 2.6zM606.3 539.6l6 -4l1.8 2.7l-6 4zM938 -1.2l6.1 -9l2.4 1.7l-6.1 9zM1237.1 238.2l5.7 -5l2.1 2.4l-5.7 5zM1051.4 215l10.4 2.5l-0.9 3.6l-10.4 -2.5zM720.1 324.8l9.4 2.7l-0.8 2.6l-9.4 -2.7zM1140.2 484.8l9.6 -4.7l1.5 3l-9.6 4.7zM1289.4 432l11.8 -2.1l0.6 3.1l-11.8 2.1zM1130.2 439.3l7.9 -4l1.2 2.3l-7.9 4zM1044.1 427.6l1 -9.3l3.7 0.4l-1 9.3zM936.9 277.4l8.4 -1.4l0.5 3.1l-8.4 1.4zM1089.8 181.4l8.2 2l-0.9 3.6l-8.2 -2zM1135 360.9l7.3 -0.1l0 3.5l-7.3 0.1zM1025.3 43.7l10.6 -0.3l0.1 3.3l-10.6 0.3zM1250.3 570.2l8.1 -5l1.7 2.7l-8.1 5zM998 503.4l7.5 -5.1l1.9 2.7l-7.5 5.1zM1128 32.4l9.8 2.6l-1 3.7l-9.8 -2.6zM984.4 158l9.4 1.4l-0.5 3.1l-9.4 -1.4zM1004.2 591.3l10 1.2l-0.5 3.7l-10 -1.2zM821.1 505.4l7.2 -7.8l2.1 2l-7.2 7.8zM944.7 651.7l11.2 2.2l-0.6 3l-11.2 -2.2zM1031.3 579.3l8.6 -2.5l1 3.5l-8.6 2.5zM868.9 398.6l4.4 -9.5l2.6 1.2l-4.4 9.5zM892.6 340.2l10.5 -0.2l0.1 3.1l-10.5 0.2zM1296.7 581l10 -4.8l1.6 3.3l-10 4.8zM1027.3 93.9l7.3 1.1l-0.5 3.1l-7.3 -1.1zM1058.9 107.6l8.9 -5l1.7 3l-8.9 5zM1151.7 139l5.8 -8.1l2.4 1.7l-5.8 8.1zM1074.7 397l8 -0.7l0.2 2.6l-8 0.7zM1237.5 639.9l8.2 -1.1l0.5 3.4l-8.2 1.1zM889.1 71.7l7.4 -1.4l0.7 3.5l-7.4 1.4zM1116.4 171.4l6.9 -4.3l1.4 2.2l-6.9 4.3zM799.4 202.3l7.9 -0.1l0 3.6l-7.9 0.1zM992.4 153.6l6.9 2.6l-1.2 3.1l-6.9 -2.6zM813.8 546.9l9.7 4.5l-1.5 3.2l-9.7 -4.5zM1055.8 451.8l8.3 4l-1.6 3.4l-8.3 -4zM983.5 196.3l7.6 5l-1.9 2.8l-7.6 -5zM999.7 530.3l7.3 0.3l-0.2 3.7l-7.3 -0.3zM730.2 9.8l7.1 0.6l-0.2 2.8l-7.1 -0.6zM893.1 163.1l11.6 0.9l-0.3 3.2l-11.6 -0.9zM932.5 345.3l5.7 4.9l-1.9 2.2l-5.7 -4.9zM994.5 319.8l9.9 2.4l-0.6 2.7l-9.9 -2.4zM679.9 443.1l11.1 -1.5l0.5 3.6l-11.1 1.5zM1133.3 556.2l7 3.7l-1.5 3l-7 -3.7zM783.8 490.4l9 -0.2l0.1 3.6l-9 0.2zM1133.3 337.7l6.3 5.3l-2 2.4l-6.3 -5.3zM884.2 426.9l9.9 -4.6l1.4 3l-9.9 4.6zM843.7 344.2l3.3 8.8l-3.3 1.3l-3.3 -8.8zM940.5 259.4l5.6 -4.6l2.3 2.8l-5.6 4.6zM599.9 548.4l10 0l-0 3.3l-10 -0zM1089.4 462.1l10.2 -5.1l1.7 3.5l-10.2 5.1zM974.6 429.2l9.3 4.8l-1.7 3.3l-9.3 -4.8zM768.4 215.5l10.1 3.7l-1.2 3.4l-10.1 -3.7zM1104.8 367.1l9.4 0.7l-0.3 3.8l-9.4 -0.7zM1023.5 481.5l9.3 -2.1l0.6 2.7l-9.3 2.1zM903.8 348.2l5.5 5.4l-2 2.1l-5.5 -5.4zM980.9 333.3l9 -6.8l2 2.6l-9 6.8zM831.6 330.1l6.5 4.2l-1.6 2.5l-6.5 -4.2zM1105.7 288.8l8.4 2.1l-0.8 3.3l-8.4 -2.1zM758.3 537.2l10.6 3.5l-1.1 3.2l-10.6 -3.5zM815.3 476.7l11.3 -3.4l0.9 3l-11.3 3.4zM734.4 243.7l11.6 -1.3l0.3 2.7l-11.6 1.3zM857.1 519l5.9 -4.5l1.6 2.1l-5.9 4.5zM956.4 105.4l7.6 -1.2l0.5 3.2l-7.6 1.2zM768.6 561.3l7.1 -0.1l0.1 3.7l-7.1 0.1zM937.5 482.4l10.4 3l-0.9 3.1l-10.4 -3zM914.4 557.5l6 3.6l-1.4 2.3l-6 -3.6zM931.7 191l5.6 -7.7l2.8 2.1l-5.6 7.7zM773 437.7l7.9 0.1l-0 2.9l-7.9 -0.1zM883.3 120.9l8.3 1l-0.4 2.8l-8.3 -1zM1162 522.4l11.1 1.9l-0.6 3.4l-11.1 -1.9zM855.6 544.7l7.4 -3.3l1.2 2.7l-7.4 3.3zM921.1 560.1l7 4.8l-2.1 3l-7 -4.8zM1124.2 80l8 3.9l-1.7 3.4l-8 -3.9zM939.8 375.5l7.4 1.5l-0.7 3.7l-7.4 -1.5zM814.3 360.5l7.1 -3.3l1.2 2.5l-7.1 3.3zM1012.9 304.1l10.8 0.1l-0 2.8l-10.8 -0.1zM722.5 663.7l8.5 -2.9l1 2.9l-8.5 2.9zM674 498.2l6.5 -3.5l1.5 2.8l-6.5 3.5zM906.5 313.8l5.6 5l-2.5 2.8l-5.6 -5zM1269.8 688.9l7 -0.7l0.3 3.1l-7 0.7zM964.8 213.4l9.1 1.3l-0.5 3.2l-9.1 -1.3zM813.8 310.3l8.9 -8l1.8 2l-8.9 8zM1141 662.7l10.1 -0.4l0.1 3.6l-10.1 0.4zM1062.7 517l8.1 1.9l-0.8 3.3l-8.1 -1.9zM733.4 95.8l9.5 2.6l-0.9 3.3l-9.5 -2.6zM1108.9 516.2l8.7 2.5l-0.9 2.9l-8.7 -2.5zM1112 87.1l7.5 3l-1.3 3.3l-7.5 -3zM917.6 80.3l10.9 0.3l-0.1 3.5l-10.9 -0.3zM1030.5 230.5l5.9 6.6l-2.1 1.9l-5.9 -6.6zM685.3 293.7l8.6 3.6l-1.3 3.1l-8.6 -3.6zM1119.7 286.1l7.8 2.7l-1 2.8l-7.8 -2.7zM899.7 -0.4l6.2 3.4l-1.5 2.7l-6.2 -3.4zM803.1 154.5l11.2 -1.2l0.4 3.9l-11.2 1.2zM793.5 206l9.6 -0.9l0.3 3.8l-9.6 0.9zM1113.5 584.4l10.7 2.1l-0.6 2.9l-10.7 -2.1zM838 398.4l6.8 8.5l-3 2.4l-6.8 -8.5zM772.2 525l7 2.7l-1.4 3.5l-7 -2.7zM1042.8 618l6.1 5.4l-1.8 2l-6.1 -5.4zM995.8 447.9l9.3 -6.5l2.1 3l-9.3 6.5zM1133.4 425.2l11.8 1.6l-0.4 3.1l-11.8 -1.6zM825.3 498l8 -2.5l0.9 2.8l-8 2.5zM925.8 529.8l9.6 0.4l-0.1 2.6l-9.6 -0.4zM1264.8 222.3l11.1 -4.2l1.3 3.4l-11.1 4.2zM967.2 342l10 -3.2l1.1 3.6l-10 3.2zM859.3 110.4l6.7 -4l1.9 3.3l-6.7 4zM791.6 388.6l8 1.8l-0.8 3.6l-8 -1.8zM995.4 653.3l10.6 -0.1l0.1 3.8l-10.6 0.1zM1285.7 417.8l8.6 4l-1.5 3.3l-8.6 -4zM976.4 107.7l7.1 -0.4l0.2 3.1l-7.1 0.4zM786.1 391.6l10.3 4.3l-1.4 3.2l-10.3 -4.3zM782.3 448.9l10.3 -1.8l0.6 3.6l-10.3 1.8zM1142.5 258.5l9.2 -0.8l0.3 3.8l-9.2 0.8zM1234.4 327l10 -1.3l0.4 3.2l-10 1.3zM843.4 259.4l11.6 -1l0.2 2.9l-11.6 1zM1162.8 384.6l7.8 -6.3l2 2.5l-7.8 6.3zM734.2 382.9l9.1 -5.4l1.8 3l-9.1 5.4zM1017 330.7l9.1 1.7l-0.6 3.4l-9.1 -1.7zM711.2 688.6l11.8 1l-0.2 2.8l-11.8 -1zM1082.4 308.2l11.9 1.4l-0.4 3.1l-11.9 -1.4zM802.2 123.4l10.4 -2.7l0.8 3.1l-10.4 2.7zM716.3 266.2l9.5 3.9l-1.1 2.7l-9.5 -3.9zM811 160l10.3 3.4l-1.2 3.7l-10.3 -3.4zM1052 214.7l10.3 3l-1 3.4l-10.3 -3zM1003.1 630.2l7.4 6.2l-2.3 2.8l-7.4 -6.2zM1023.8 488.6l9.1 7.3l-1.6 2l-9.1 -7.3zM718.5 403.9l8.5 -3.9l1.6 3.4l-8.5 3.9zM892.9 296.9l4.2 8.4l-3.3 1.6l-4.2 -8.4zM1102.5 20.8l7.4 -3.7l1.5 3.1l-7.4 3.7zM793.5 377.7l9.8 -3.2l0.9 2.8l-9.8 3.2zM1017 66.8l11.4 -0.7l0.2 3.6l-11.4 0.7zM841.6 465.2l11.3 -0.1l0 3.3l-11.3 0.1zM1087.2 79.2l7.7 -1.3l0.6 3.4l-7.7 1.3zM1319 235.2l10.4 5.7l-1.7 3.1l-10.4 -5.7zM888.5 278.6l6.8 6.2l-2.4 2.7l-6.8 -6.2zM1072.8 266.5l7 0.9l-0.4 3.1l-7 -0.9zM1058.1 632.2l11.1 0.3l-0.1 3.1l-11.1 -0.3zM898 289.1l9.5 -5.3l1.6 2.8l-9.5 5.3zM1111.2 328.4l10.9 2.5l-0.7 2.9l-10.9 -2.5zM880.8 107.9l7.5 2.9l-1.3 3.3l-7.5 -2.9zM535.7 381l8.8 2.6l-1.1 3.7l-8.8 -2.6zM1116.6 39.3l8.1 -1.1l0.4 3.2l-8.1 1.1zM990.6 481.6l9.6 -0.8l0.2 2.8l-9.6 0.8zM891.3 161.8l5.5 -7.8l2.2 1.5l-5.5 7.8zM1013.4 48.9l7.1 3.2l-1.5 3.4l-7.1 -3.2zM1007.4 484.9l10.5 4l-1.1 3l-10.5 -4zM905.1 529.4l3.1 7.3l-3.4 1.4l-3.1 -7.3zM1111.4 116.8l9.5 -0.2l0.1 2.6l-9.5 0.2zM1103.3 98.1l7.9 6.6l-1.9 2.3l-7.9 -6.6zM892.1 190.2l7.8 -0.5l0.2 3.4l-7.8 0.5zM1022.1 473.5l11.1 1.8l-0.5 3.3l-11.1 -1.8zM1076.9 8.5l5.8 -6l2.7 2.7l-5.8 6zM1171.4 447.4l10.7 0.1l-0 2.8l-10.7 -0.1zM1535.1 448.7l10.2 0.1l-0 3.5l-10.2 -0.1zM951.5 452l8.5 3.1l-1 2.6l-8.5 -3.1zM1047.6 344.3l9.1 2.2l-0.8 3.2l-9.1 -2.2zM1165.8 184.7l9.5 4l-1.2 2.7l-9.5 -4zM922.3 108.7l9.8 0.2l-0.1 2.7l-9.8 -0.2zM822.7 149.7l2.5 -10.2l2.6 0.6l-2.5 10.2zM799.5 690.7l5.9 -4.1l2.1 3.1l-5.9 4.1zM748.6 262.1l7.2 -1l0.5 3.4l-7.2 1zM1315.1 462.7l10.5 -0.9l0.3 3.1l-10.5 0.9zM1257.9 717.1l11.6 2.7l-0.7 3.1l-11.6 -2.7zM919 703.7l9.1 -2.1l0.8 3.2l-9.1 2.1zM1076.6 564.8l7.4 -7l1.9 2l-7.4 7zM1153.8 86.2l8.3 3l-1.2 3.3l-8.3 -3zM729.7 452.9l11.2 3.5l-0.8 2.7l-11.2 -3.5zM945.2 25.7l11.1 -1.6l0.5 3.7l-11.1 1.6zM1190.4 504.2l8.8 -0.3l0.1 3.7l-8.8 0.3zM1215.9 228.1l7.5 2.2l-1 3.6l-7.5 -2.2zM989.6 246.1l11 4.4l-1.4 3.4l-11 -4.4zM972.4 330.1l7.8 3l-1.2 3.1l-7.8 -3zM1259.9 182.9l8 4.5l-1.6 2.8l-8 -4.5zM798.9 422.9l8 -2.7l1.2 3.5l-8 2.7zM836.7 182.3l9.6 0.2l-0.1 2.6l-9.6 -0.2zM1186.6 73.1l9.9 4.1l-1.5 3.5l-9.9 -4.1zM1030.8 388.7l10.4 -5.4l1.8 3.4l-10.4 5.4zM1246.8 384.2l7.8 -4.5l1.5 2.7l-7.8 4.5zM1019.7 585.7l9 3.5l-1.4 3.5l-9 -3.5zM1107.8 20.3l10.9 0.5l-0.2 3.7l-10.9 -0.5zM1205.5 471.9l11.6 -2.4l0.7 3.4l-11.6 2.4zM1075.5 121.6l8.9 -3.9l1.2 2.6l-8.9 3.9zM962.3 5.6l7.4 2.4l-0.9 2.8l-7.4 -2.4zM835.8 398.1l11.9 -1.2l0.3 3.1l-11.9 1.2zM763 453.1l9.9 1.4l-0.4 3l-9.9 -1.4zM1096 541.8l9 -2.7l0.8 2.8l-9 2.7zM1054 408l9.9 4l-1.4 3.6l-9.9 -4zM804.3 461.2l10.8 1.3l-0.4 3.1l-10.8 -1.3zM1188.1 496.5l10.3 -4.1l1.3 3.4l-10.3 4.1zM1122.1 41.1l7.1 3.9l-1.6 2.9l-7.1 -3.9zM1062.8 402l8.4 -1.1l0.5 3.7l-8.4 1.1zM937.4 345.3l8.9 3.2l-0.9 2.5l-8.9 -3.2zM895.2 398.2l11.2 -0.2l0.1 3.3l-11.2 0.2zM998.1 396.3l7.5 3.6l-1.7 3.5l-7.5 -3.6zM1335 110.9l11 -1l0.3 3.7l-11 1zM1156.7 641.6l5.2 5.9l-2.3 2l-5.2 -5.9zM687.6 592l10.8 5.2l-1.5 3.1l-10.8 -5.2zM1049.8 224.4l10.4 2.5l-0.7 2.8l-10.4 -2.5zM1109.8 506.5l8 5.4l-2.1 3l-8 -5.4zM792.2 206.7l9.9 -1l0.3 3.2l-9.9 1zM710 449.7l8.3 -2.7l1 3.1l-8.3 2.7zM1142.3 100.4l9.5 -2l0.7 3.6l-9.5 2zM792.3 540.2l7.3 -0.4l0.2 3.8l-7.3 0.4zM1240.5 454.3l6.9 -3.9l1.9 3.4l-6.9 3.9zM1075.3 328.1l11.9 1.2l-0.4 3.8l-11.9 -1.2zM944 139.5l8.4 -2.5l0.7 2.5l-8.4 2.5zM1092.2 208.6l7 2.5l-1.3 3.6l-7 -2.5zM1213.6 413.8l7.5 -3.4l1.5 3.4l-7.5 3.4zM844.3 341.5l9.7 -1l0.3 2.9l-9.7 1zM842.8 523.7l11.5 -2.2l0.6 3.4l-11.5 2.2zM1060.2 218.6l10.3 5l-1.1 2.4l-10.3 -5zM858.2 387.8l8.4 -6.4l2.1 2.7l-8.4 6.4zM1173.9 385.2l11.8 0.8l-0.2 3.2l-11.8 -0.8zM826.8 327.2l4.5 6.2l-3.1 2.3l-4.5 -6.2zM881 307.4l5.6 4.6l-2.4 2.9l-5.6 -4.6zM879.5 562.8l10.3 1.3l-0.4 3.5l-10.3 -1.3zM1143.2 433l4.3 7.2l-2.3 1.3l-4.3 -7.2zM1100.8 542.1l6.9 -2.6l1.3 3.4l-6.9 2.6zM917.6 81.9l7.9 5.2l-1.8 2.8l-7.9 -5.2zM1137.4 300.7l10 -3.8l1 2.7l-10 3.8zM1087.6 363.2l10.2 -0.2l0 3l-10.2 0.2zM1232.6 266.5l6.3 3.9l-1.9 3.1l-6.3 -3.9zM856.5 413.2l8.1 -4.9l1.9 3.1l-8.1 4.9zM982.5 141.2l8.5 3.6l-1.1 2.5l-8.5 -3.6zM1079.2 515.2l7.5 -2.9l1.3 3.4l-7.5 2.9zM1080.8 55.7l7.6 -4l1.7 3.3l-7.6 4zM1043.1 316.1l11.5 -3.2l0.8 2.8l-11.5 3.2zM850 173.3l9.5 1.2l-0.5 3.8l-9.5 -1.2zM1123.9 343l10 5.1l-1.4 2.8l-10 -5.1zM1042.5 238.7l7.5 -7.9l2 1.9l-7.5 7.9zM1125.7 477.4l7 -2.1l0.8 2.6l-7 2.1zM1342.3 380.3l7 2.2l-0.9 2.9l-7 -2.2zM690.1 687.5l11.5 -2.6l0.8 3.3l-11.5 2.6zM973.5 654.1l10.7 -5.4l1.7 3.4l-10.7 5.4zM944.6 587.8l9.1 4.2l-1.1 2.5l-9.1 -4.2zM954.9 210.7l6.5 -4.2l1.7 2.6l-6.5 4.2zM930.1 221.5l4.9 6.2l-3 2.4l-4.9 -6.2zM1108.5 139.1l2.3 -11.7l2.8 0.5l-2.3 11.7zM823.2 -8l4.2 9.9l-2.6 1.1l-4.2 -9.9zM1048.2 307.1l10.7 -4.4l1.5 3.5l-10.7 4.4zM781.5 407.3l0.6 9.5l-3.5 0.2l-0.6 -9.5zM1088.4 273.8l2.2 8.7l-3.2 0.8l-2.2 -8.7zM705.8 316.1l7.4 -2.2l0.8 2.8l-7.4 2.2zM1071.1 367l9.2 -0.9l0.3 3.6l-9.2 0.9zM929.1 49.2l10.8 -4.5l1.1 2.6l-10.8 4.5zM941 348l9.2 2.6l-1 3.4l-9.2 -2.6zM1062.9 46.4l10.4 -2.2l0.8 3.7l-10.4 2.2zM1164 209.1l9.2 0.5l-0.2 2.9l-9.2 -0.5zM890.2 213.1l8.1 3.8l-1.6 3.5l-8.1 -3.8zM853.1 254.9l10.3 -2.5l0.7 3.1l-10.3 2.5zM822 657.5l3.9 -6.8l3.1 1.8l-3.9 6.8zM1017.3 111.4l7.1 2.5l-1 3l-7.1 -2.5zM1102.3 48.4l4.3 6l-2.9 2.1l-4.3 -6zM1162.2 300.3l6.7 3.7l-1.4 2.6l-6.7 -3.7zM1111.7 134.2l6.7 8.4l-2.4 1.9l-6.7 -8.4zM1033.6 297.2l7.8 -1.7l0.7 3.2l-7.8 1.7zM834.1 568.2l8.2 -0.1l0.1 3.4l-8.2 0.1zM1122.4 437l7.5 0.9l-0.5 3.8l-7.5 -0.9zM892.5 102.6l7.8 -5.3l1.8 2.7l-7.8 5.3zM892.8 33.4l11.4 0.4l-0.1 3l-11.4 -0.4zM1008 398l7.8 4l-1.3 2.6l-7.8 -4zM692.8 656.6l4.6 -5.8l2.2 1.7l-4.6 5.8zM698.6 261.3l7.7 -7.2l2.5 2.7l-7.7 7.2zM1159.7 138.1l10.6 3.2l-0.9 2.8l-10.6 -3.2zM1004 507.5l10.2 1.8l-0.6 3.4l-10.2 -1.8zM783.1 344.2l10.4 0.9l-0.3 3.2l-10.4 -0.9zM1034.5 403.6l6.4 4l-1.5 2.4l-6.4 -4zM948.1 189.7l11.5 -1.5l0.5 3.7l-11.5 1.5zM1124.4 660.1l10.5 4.9l-1.5 3.2l-10.5 -4.9zM1084.9 326.5l10.4 -3.5l1.1 3.2l-10.4 3.5zM1071.3 604.7l6.9 5.4l-1.8 2.3l-6.9 -5.4zM1083.5 167.8l4.1 -7.8l2.8 1.5l-4.1 7.8zM1117.3 456.8l6.3 4.1l-1.7 2.6l-6.3 -4.1zM965.7 321.7l8.7 -1.3l0.5 3.2l-8.7 1.3zM869.6 150.4l7.2 7l-1.8 1.9l-7.2 -7zM864.6 350.5l7.4 2.3l-0.9 3l-7.4 -2.3zM923.5 228.3l8 7.3l-2 2.2l-8 -7.3zM1206.1 405.1l7.8 -5l1.8 2.7l-7.8 5zM950.2 538l7.7 -0.8l0.4 3.8l-7.7 0.8zM992.4 130l8.3 -1.5l0.6 3.6l-8.3 1.5zM1047.6 497.6l3.7 10.7l-2.7 0.9l-3.7 -10.7zM852.3 310.6l8.7 -3.1l1 2.8l-8.7 3.1zM1022.4 182l10.9 1.9l-0.5 3l-10.9 -1.9zM861.2 139.7l10.1 3.1l-0.9 3.1l-10.1 -3.1zM1042.4 247.6l10.8 -4.4l1.4 3.5l-10.8 4.4zM1015.3 387.6l4.3 7.4l-3.2 1.8l-4.3 -7.4zM937.8 376.6l6.5 -4.1l2 3.2l-6.5 4.1zM777 293.1l10 3.5l-1.2 3.5l-10 -3.5zM1071.2 236.3l8.5 2.2l-0.7 2.9l-8.5 -2.2zM1091.1 192.3l9.2 4.6l-1.2 2.4l-9.2 -4.6zM774.1 414.9l9.1 2.1l-0.8 3.5l-9.1 -2.1zM789.1 182.6l8.3 3.5l-1.5 3.6l-8.3 -3.5zM834.3 573l-2.6 -10.7l2.8 -0.7l2.6 10.7zM670.7 111l6.2 5.9l-2.5 2.6l-6.2 -5.9zM1196.6 361l8.7 1.2l-0.5 3.7l-8.7 -1.2zM1061.4 686.8l8.7 -5.9l1.5 2.2l-8.7 5.9zM1327.4 419l4 8l-2.8 1.4l-4 -8zM929 134.7l6.7 -6.3l2.4 2.6l-6.7 6.3zM771.1 138.6l9.4 -2.9l0.8 2.5l-9.4 2.9zM1090.7 108.8l2.3 -9.9l3.3 0.8l-2.3 9.9zM1109.1 297.5l7.9 2.1l-0.8 2.8l-7.9 -2.1zM1137.2 523.6l10.5 0.1l-0 3.1l-10.5 -0.1zM885 224.5l10.9 -0.1l0 2.9l-10.9 0.1zM787.3 383.6l6.1 -3.9l2 3.2l-6.1 3.9zM929 531.8l10.6 4.2l-1.1 2.7l-10.6 -4.2zM823 367.8l8.7 5.1l-1.9 3.2l-8.7 -5.1zM1191.6 589.4l5.6 -6l2.7 2.5l-5.6 6zM567.8 366.5l8.3 -1.8l0.7 3.4l-8.3 1.8zM939.5 322l8.4 -2.2l0.7 2.8l-8.4 2.2zM1043.1 118.3l11.2 -2.1l0.7 3.8l-11.2 2.1zM1017.2 434.4l5.8 7.5l-2.6 2l-5.8 -7.5zM1021.6 255.9l7 -1.7l0.8 3.2l-7 1.7zM835.5 15.8l8.3 1l-0.4 3.5l-8.3 -1zM429.7 366.4l10.7 3.1l-0.8 2.9l-10.7 -3.1zM1163.8 662.3l10.3 3.2l-0.9 2.9l-10.3 -3.2zM706.1 504.8l11.1 -3.2l0.8 2.6l-11.1 3.2zM454.2 542.2l6.6 3.3l-1.7 3.3l-6.6 -3.3zM977.5 292.2l11.3 0.1l-0 3l-11.3 -0.1zM767.6 369.2l7.7 -7.2l2.3 2.5l-7.7 7.2zM916.8 169.6l9.2 4.6l-1.2 2.4l-9.2 -4.6zM805.8 516.1l8.5 -1.9l0.7 3.1l-8.5 1.9zM1012.2 235.9l9.7 -0.7l0.2 3.2l-9.7 0.7zM1119.4 126.7l7.2 4.5l-2 3.2l-7.2 -4.5zM1208.3 245.9l6.9 5.9l-2.1 2.4l-6.9 -5.9zM1032 363.4l8.8 0.3l-0.1 2.7l-8.8 -0.3zM1060 234.4l10.4 0.3l-0.1 3.6l-10.4 -0.3zM973 363.2l10.2 -4.3l1.4 3.2l-10.2 4.3zM900 536.7l8.5 -5l1.9 3.2l-8.5 5zM800.1 677l10 1.9l-0.5 2.8l-10 -1.9zM954.1 137.3l5.2 6.4l-3 2.4l-5.2 -6.4zM1030.3 202.3l8.4 2.3l-0.9 3.3l-8.4 -2.3zM484.2 421.4l7.8 -4.2l1.3 2.4l-7.8 4.2zM1205.1 319.9l7.9 -1.9l0.7 3l-7.9 1.9zM1162.5 308.1l8 1.3l-0.6 3.4l-8 -1.3zM658.9 302.9l7.5 4l-1.5 2.9l-7.5 -4zM1296.2 257.7l6.7 6.8l-2.3 2.3l-6.7 -6.8zM1025.2 285.6l7.8 4.1l-1.6 3l-7.8 -4.1zM967.7 196.1l9.4 0.1l-0 3l-9.4 -0.1zM801 154.1l10.2 3l-0.9 3l-10.2 -3zM1017.1 240.8l10 -6l1.6 2.7l-10 6zM990.4 271.9l5.8 5.7l-2.4 2.5l-5.8 -5.7zM735.4 581.4l10.2 -0.4l0.1 3.7l-10.2 0.4zM1246.5 220.1l10 -0.2l0.1 2.7l-10 0.2zM898.9 536.1l10.2 -2.1l0.7 3.2l-10.2 2.1zM833.7 79.9l10.6 5l-1.2 2.6l-10.6 -5zM820.1 352.8l5.2 7.7l-3.1 2.1l-5.2 -7.7zM920.6 321.1l3.5 7.4l-3.5 1.7l-3.5 -7.4zM1213.8 527.4l10.4 -2.2l0.7 3.2l-10.4 2.2zM936.3 195.9l8.4 -0.8l0.3 2.8l-8.4 0.8zM804.7 618.4l10.6 1.5l-0.4 2.9l-10.6 -1.5zM1392.6 663.3l8.5 -1l0.4 3.2l-8.5 1zM906.4 120l6.9 2.6l-1 2.5l-6.9 -2.6zM1032.6 32.1l6.9 -2.9l1.4 3.4l-6.9 2.9zM1039.9 373.7l5 8.2l-2.3 1.4l-5 -8.2zM1439.1 676.7l4.6 7.9l-2.9 1.7l-4.6 -7.9zM1117.9 179.2l10.4 -2l0.6 3.3l-10.4 2zM1075.9 328.2l8.7 1.3l-0.4 2.6l-8.7 -1.3zM887.8 573.3l11.3 -2.4l0.8 3.7l-11.3 2.4zM919 437.9l7.8 -0.9l0.3 2.9l-7.8 0.9zM1275.4 544.5l10 -1.6l0.5 3.2l-10 1.6zM904.6 236.5l7.1 0.6l-0.3 3.9l-7.1 -0.6zM1168.6 656.2l6.5 -9.1l3.1 2.2l-6.5 9.1zM1088.7 456l9.8 -5.9l1.8 3l-9.8 5.9zM905.5 394.3l11 -3.3l1 3.3l-11 3.3zM1069.7 65.9l7.6 1.1l-0.4 2.6l-7.6 -1.1zM993.5 260.1l6 5.9l-2.2 2.3l-6 -5.9zM926.9 177.3l7.5 -0.5l0.2 2.9l-7.5 0.5zM1208.8 97.1l8.2 4.4l-1.6 2.9l-8.2 -4.4zM801.9 14.1l11.8 1.9l-0.5 3l-11.8 -1.9zM960.3 169.6l6.9 -4.5l2 3l-6.9 4.5zM819.1 -7.7l8.8 0.3l-0.1 2.9l-8.8 -0.3zM930.2 300.5l7.3 -8.1l2.2 2l-7.3 8.1zM925 352.5l3.2 6.9l-2.6 1.2l-3.2 -6.9zM956.4 117.3l9.9 1.1l-0.4 3.3l-9.9 -1.1zM566.7 530.7l9.2 -2.4l0.7 2.7l-9.2 2.4zM838.4 161.2l10.7 2l-0.5 2.6l-10.7 -2zM638.8 218.5l11.6 -0.4l0.1 3.4l-11.6 0.4zM706.4 454.3l11.7 -1.2l0.4 3.3l-11.7 1.2zM736.5 247.8l9.9 -1.5l0.4 2.6l-9.9 1.5zM1168 179.2l9.5 -1l0.3 2.6l-9.5 1zM842.6 338.8l6.4 -6.6l1.9 1.9l-6.4 6.6zM1135.4 271l6.2 -3.6l1.6 2.8l-6.2 3.6zM1099.6 240.3l8.1 2.7l-0.9 2.7l-8.1 -2.7zM860.1 327.4l8.7 -1.7l0.7 3.7l-8.7 1.7zM724.1 233.8l6.5 -3.9l1.5 2.5l-6.5 3.9zM993.9 95.7l5 -6.2l2.7 2.2l-5 6.2zM931.9 70.4l9.1 -1.7l0.6 3.1l-9.1 1.7zM577.1 399.4l6.2 -5.3l2.2 2.6l-6.2 5.3zM775.8 656.3l9.4 2.5l-0.8 2.8l-9.4 -2.5zM1142.5 373.5l8.2 -0.4l0.1 3l-8.2 0.4zM1169.4 135l8.5 -8.4l1.8 1.9l-8.5 8.4zM1234 232.5l6.9 6.3l-2.6 2.9l-6.9 -6.3zM895 72.2l10.4 -4.2l1 2.5l-10.4 4.2zM735.8 109.3l10.5 3.2l-0.9 3l-10.5 -3.2zM1030.2 92l7.9 1.4l-0.6 3.1l-7.9 -1.4zM1136.4 332.3l1.6 11.2l-3.1 0.4l-1.6 -11.2zM1114.5 501.8l5.9 -6.4l2.8 2.6l-5.9 6.4zM1165.5 649.9l9.7 -2.4l0.9 3.7l-9.7 2.4zM985.6 381.3l6.8 1.6l-0.6 2.5l-6.8 -1.6zM929.6 22.5l8.5 -5.2l2 3.3l-8.5 5.2zM1242.6 120.1l9.5 -2.4l0.9 3.5l-9.5 2.4zM723.3 324.6l8.8 -4.4l1.7 3.3l-8.8 4.4zM1154.3 257.2l8 4.4l-1.5 2.7l-8 -4.4zM1065.1 604.7l9.2 -0.7l0.2 2.9l-9.2 0.7zM683.7 359.4l6.9 4.4l-1.7 2.6l-6.9 -4.4zM1038 661.6l8.6 -0.7l0.3 3l-8.6 0.7zM836.3 268.5l9.6 1l-0.4 3.9l-9.6 -1zM1010.8 284.1l7 -6.9l2.1 2.2l-7 6.9zM997.1 567l7.6 -0.1l0 3.3l-7.6 0.1zM1026.1 244l11 -2l0.6 3l-11 2zM1104.1 376.2l8.3 8.6l-1.9 1.8l-8.3 -8.6zM645.7 568.2l10.2 3.9l-1.2 3.2l-10.2 -3.9zM618.1 316.8l7.6 2.2l-1.1 3.7l-7.6 -2.2zM1004.3 515.6l5.8 -5.8l2.4 2.4l-5.8 5.8zM1053.2 425.6l7.1 1.1l-0.5 3.4l-7.1 -1.1zM1116.6 433.9l8.5 2.2l-0.8 2.9l-8.5 -2.2zM1272.2 253.4l11.3 -0.7l0.2 2.8l-11.3 0.7zM911.2 100.5l10.4 -4.8l1.6 3.4l-10.4 4.8zM952.3 333.3l9.5 1.1l-0.4 3.6l-9.5 -1.1zM916.9 287.2l8.8 -6.8l2 2.5l-8.8 6.8zM1022 418.2l11.4 1.2l-0.3 3.3l-11.4 -1.2zM844.4 106.7l9.4 4.1l-1.1 2.5l-9.4 -4.1zM697.6 264.8l10.4 -4.8l1.4 3.1l-10.4 4.8zM961.3 402.5l8.9 2.8l-0.9 3.1l-8.9 -2.8zM807.9 157.6l7.3 5.3l-1.6 2.3l-7.3 -5.3zM991.1 191.3l7 -3.2l1.3 2.9l-7 3.2zM945 73l5.7 6.9l-2 1.7l-5.7 -6.9zM1003.8 351l7.8 2.4l-0.9 2.9l-7.8 -2.4zM854.8 153l9.9 -2.4l0.7 2.8l-9.9 2.4zM1099.7 185.1l7.3 4.1l-1.7 3l-7.3 -4.1zM895.7 485.2l6.7 3.9l-1.8 3.1l-6.7 -3.9zM721 414.3l7 6l-2 2.3l-7 -6zM975.7 273l9.5 -5l1.7 3.2l-9.5 5zM978.1 155.7l11.6 -0l0 3.3l-11.6 0zM1489.8 339.7l9.1 4.5l-1.6 3.3l-9.1 -4.5zM970.5 94.6l11.6 -1.3l0.4 3.7l-11.6 1.3zM715.1 362.1l6.7 6.3l-1.9 2l-6.7 -6.3zM952.8 46.4l2.5 9l-3.5 1l-2.5 -9zM675.3 224.2l6.1 -6.5l2.7 2.6l-6.1 6.5zM1092.2 204.6l11.9 -0.1l0 2.7l-11.9 0.1zM1135.4 506.3l9.9 3.2l-1 3.2l-9.9 -3.2zM1034.9 293l9.8 4.9l-1.7 3.3l-9.8 -4.9zM1128.4 344.8l9.6 1.8l-0.7 3.7l-9.6 -1.8zM1145.8 216.7l7.4 1.2l-0.4 2.6l-7.4 -1.2zM660.4 58.7l3.7 11.3l-2.8 0.9l-3.7 -11.3zM956.2 278.6l8.8 -5l1.6 2.7l-8.8 5zM847.6 88.3l6.5 2.9l-1.3 2.9l-6.5 -2.9zM764.2 304.9l8.8 -2.2l0.8 3.2l-8.8 2.2zM961.5 163.1l10.3 -1.4l0.4 2.8l-10.3 1.4zM1003.1 480l6.7 -2.5l1.1 2.9l-6.7 2.5zM968.1 642.4l9.1 2.3l-0.8 3.2l-9.1 -2.3zM1113.2 271.1l11.2 0.1l-0 3.3l-11.2 -0.1zM689.4 319.6l10.3 -3.6l1 2.9l-10.3 3.6zM966.8 673.8l7 -4.4l1.6 2.5l-7 4.4zM1063.8 554.1l10.6 1.8l-0.6 3.7l-10.6 -1.8zM890.2 319l10.7 -4.7l1.4 3.3l-10.7 4.7zM764.5 421l10.5 -3.1l1 3.5l-10.5 3.1zM906.8 189.5l10.1 5.1l-1.2 2.4l-10.1 -5.1zM799.7 399l7.1 -5.2l2.1 2.8l-7.1 5.2zM1127.7 300.7l8.6 4l-1.5 3.3l-8.6 -4zM703.4 621.2l10 -2.9l0.9 3.2l-10 2.9zM761.1 477l7.5 -0.2l0.1 3.5l-7.5 0.2zM1126 576.2l8.5 -4.7l1.4 2.4l-8.5 4.7zM1194.1 545.1l10.4 2.3l-0.6 2.6l-10.4 -2.3zM884.4 606.9l3.5 -4.9l2.2 1.6l-3.5 4.9zM1297.2 556.1l6.5 3.9l-1.6 2.7l-6.5 -3.9zM968.1 501.6l8.6 0.4l-0.2 3.5l-8.6 -0.4zM938 586l6.5 1l-0.5 3.1l-6.5 -1zM969.5 675.2l10.3 3.6l-1.2 3.4l-10.3 -3.6zM778.7 643.5l4 -8.5l2.2 1.1l-4 8.5zM791.2 562.5l8 4.6l-1.4 2.4l-8 -4.6zM1021.8 514l8.2 1.3l-0.4 2.9l-8.2 -1.3zM1004.9 608.7l6.3 -1.6l0.6 2.6l-6.3 1.6zM737.5 572.3l8.4 2l-0.6 2.6l-8.4 -2zM950 575.4l6.8 -7.5l2.2 2l-6.8 7.5zM927.6 698.6l10 -1.6l0.4 2.6l-10 1.6zM1057.7 605.6l7.6 7.7l-2 2l-7.6 -7.7zM1051.1 663.4l6.7 2.1l-1.1 3.4l-6.7 -2.1zM1153.1 592.8l8.5 5.6l-1.9 2.9l-8.5 -5.6zM784.3 526.7l8.3 -2.5l1 3.4l-8.3 2.5zM1098.1 559.8l7.6 -2.8l1.1 3.1l-7.6 2.8zM1135.1 583.5l10.3 1.7l-0.4 2.5l-10.3 -1.7zM1128.8 603.2l2.3 5.7l-3.2 1.3l-2.3 -5.7zM994.7 694l6.5 -0.7l0.3 3.4l-6.5 0.7zM973.7 494.2l5.7 3.1l-1.3 2.3l-5.7 -3.1zM1045.2 569.3l9 2.4l-0.8 2.9l-9 -2.4zM963.8 696.2l5.4 -4.9l1.7 1.9l-5.4 4.9zM939 556.3l9 -3.2l1 2.8l-9 3.2zM990.6 472.9l9.5 -4.6l1.1 2.3l-9.5 4.6zM947.8 509.1l9.5 -4l1.4 3.2l-9.5 4zM1078.7 656l8.6 5.6l-1.8 2.7l-8.6 -5.6zM940.9 644l8.6 1.3l-0.4 2.8l-8.6 -1.3zM817.2 632.3l6.5 2.2l-1 3.1l-6.5 -2.2zM990.2 546.9l7.2 -1.3l0.6 3.3l-7.2 1.3zM1041.8 542.7l7.8 -0.7l0.3 2.8l-7.8 0.7zM988.7 686.8l10.6 -1.6l0.4 2.9l-10.6 1.6zM1114.7 550.7l10.1 1l-0.3 3.5l-10.1 -1zM1165.7 605.5l7.3 -3.4l1.2 2.7l-7.3 3.4zM902.1 672.3l6.8 6.3l-2.2 2.4l-6.8 -6.3zM1031.9 644.5l9.7 3.9l-1.2 3l-9.7 -3.9zM1084.5 568.6l5.1 4l-1.6 2l-5.1 -4zM977.1 633l9.8 4.1l-0.9 2.2l-9.8 -4.1zM764.8 678.7l8.6 -0.2l0.1 3.1l-8.6 0.2zM1138.5 476.6l7.9 6.3l-2 2.5l-7.9 -6.3zM1014.8 658.3l8.2 7l-1.9 2.2l-8.2 -7zM1046.8 532.9l2 7.3l-2.4 0.6l-2 -7.3zM991.6 695.3l4.4 6.5l-2.5 1.7l-4.4 -6.5zM1033.4 496l5.6 -2.2l1 2.5l-5.6 2.2zM924.3 505.3l7.4 4.4l-1.6 2.7l-7.4 -4.4zM1272 631.3l5 6.7l-2.3 1.7l-5 -6.7zM1033.5 551.6l3.2 -7.4l2.3 1l-3.2 7.4zM1159.6 620.1l8 -4.9l1.6 2.7l-8 4.9zM899.8 558.3l7.6 -7.7l2.1 2l-7.6 7.7zM1311.3 634.9l7.8 6.9l-2.3 2.6l-7.8 -6.9zM867.2 685.6l8.3 -3.5l1.4 3.3l-8.3 3.5zM1038 616.2l8.6 2.3l-0.9 3.4l-8.6 -2.3zM998.6 539.3l5.2 7.1l-2.5 1.9l-5.2 -7.1zM979.8 600.8l7 -3.8l1.4 2.7l-7 3.8zM846.8 620.3l7.6 3.7l-1.6 3.2l-7.6 -3.7zM1038.7 475.3l9.6 -3.8l1.3 3.3l-9.6 3.8zM819.1 615l6 -3.8l1.8 2.9l-6 3.8zM969.2 668.2l8.8 -5.4l1.6 2.5l-8.8 5.4zM1030.8 474.7l8.7 2.2l-0.8 3.2l-8.7 -2.2zM935.9 698.2l8.4 -0.9l0.3 2.9l-8.4 0.9zM1269.4 686.5l10.6 -0.2l0.1 3.2l-10.6 0.2zM1143.1 475.9l8 6l-2 2.6l-8 -6zM1107.3 567.9l9 1.4l-0.4 2.5l-9 -1.4zM988.9 546.2l8.3 -0.6l0.2 2.8l-8.3 0.6zM925.8 496.3l7.4 -3.4l1.4 3l-7.4 3.4zM915.1 537.4l-0.3 10.1l-3 -0.1l0.3 -10.1zM767.9 633.6l6.5 -7l2.2 2l-6.5 7zM995.9 533.7l6.1 7.8l-2.8 2.2l-6.1 -7.8zM789.4 566.6l8.2 -5.3l1.4 2.2l-8.2 5.3zM830.5 666.9l5.4 2.9l-1.6 3l-5.4 -2.9zM1209.1 628.1l6.6 3.5l-1.3 2.3l-6.6 -3.5zM982.2 694.9l6.3 0.1l-0 3.4l-6.3 -0.1zM1319 562.4l8.3 -7l1.6 1.9l-8.3 7zM1046.6 645.7l10.4 1.2l-0.3 2.9l-10.4 -1.2zM1003 477.4l9.5 5.2l-1.6 2.9l-9.5 -5.2zM1194 691.4l6.9 5.6l-1.9 2.4l-6.9 -5.6zM1027.5 558.3l9.2 1.5l-0.6 3.4l-9.2 -1.5zM830.5 577.8l5.4 -4.6l1.8 2.2l-5.4 4.6zM750.3 483.3l6.4 6.3l-2.4 2.5l-6.4 -6.3zM762.6 564.6l8.6 -0.5l0.2 3.5l-8.6 0.5zM836.7 506l6.5 4.4l-1.8 2.6l-6.5 -4.4zM1081 482.6l6 -3.5l1.6 2.7l-6 3.5zM875.2 486.7l7.3 1.7l-0.6 2.4l-7.3 -1.7zM942.3 545.3l2.9 -9.4l2.4 0.7l-2.9 9.4zM934.2 693.6l2.8 -6.3l3 1.4l-2.8 6.3zM990.6 510.2l8.1 0.4l-0.1 2.4l-8.1 -0.4zM946.1 486.4l8.1 3.9l-1.2 2.4l-8.1 -3.9zM1099.4 622.7l6.6 2.5l-1.2 3.2l-6.6 -2.5zM1029.5 690.1l6.7 -8.4l2 1.6l-6.7 8.4zM969.8 682.5l10.1 -1.4l0.4 2.9l-10.1 1.4zM1167.3 560.1l7.5 2l-0.9 3.3l-7.5 -2zM1182.8 524.4l10.1 4.2l-1.2 2.9l-10.1 -4.2zM920.4 567.7l8.3 3.5l-1.1 2.5l-8.3 -3.5zM1126.4 527.7l4.9 -3.5l2 2.8l-4.9 3.5zM1082.9 695.2l10.1 -2.5l0.6 2.5l-10.1 2.5zM978.7 562.2l10.4 0.4l-0.1 3.6l-10.4 -0.4zM1146.9 550.7l7.6 -2.2l0.7 2.4l-7.6 2.2zM955 582l6.7 -6.3l2 2.2l-6.7 6.3zM955.4 510.7l7.2 -6.1l2 2.4l-7.2 6.1zM835.8 481l6.6 -6l2.1 2.3l-6.6 6zM1074.1 604.3l8.8 4.8l-1.2 2.1l-8.8 -4.8zM699.5 669.8l8.6 -2l0.7 3.1l-8.6 2zM933.2 654.2l6.6 -4.1l1.4 2.3l-6.6 4.1zM1230.1 477.5l9 0.4l-0.1 3.2l-9 -0.4zM787.8 491.5l7 4.8l-2 3l-7 -4.8zM1136.7 549.9l8.1 4.3l-1.2 2.2l-8.1 -4.3zM1141.1 555.3l6 -2.9l1.6 3.2l-6 2.9zM936.3 468.1l8.7 2.3l-0.6 2.4l-8.7 -2.3zM780.6 636.9l7.4 -1l0.4 2.9l-7.4 1zM914 600l9.4 -2.9l1.1 3.4l-9.4 2.9zM1212.8 576l7.4 -3.6l1.2 2.5l-7.4 3.6zM985.7 607.3l3.4 7.3l-3.1 1.4l-3.4 -7.3zM864.7 552.5l7.3 0.7l-0.3 2.8l-7.3 -0.7zM843 620.1l9.9 1.6l-0.4 2.5l-9.9 -1.6zM1150.1 629.2l6.4 0.9l-0.4 2.6l-6.4 -0.9zM978.4 612l6.8 -5.1l1.8 2.4l-6.8 5.1zM791.9 598.5l6.5 1.3l-0.7 3.4l-6.5 -1.3zM957.3 493.3l7.7 -3.9l1.1 2.3l-7.7 3.9zM929.6 468.7l6.2 3.2l-1.4 2.8l-6.2 -3.2zM1090 592.4l3.5 -10.3l3.3 1.1l-3.5 10.3zM923.9 521.5l6.1 3.1l-1.5 2.9l-6.1 -3.1zM1162.9 503.3l6.8 1.4l-0.7 3.4l-6.8 -1.4zM1053.9 516.1l5.6 6.6l-2.5 2.1l-5.6 -6.6zM1124.6 610.9l6.6 -1.8l0.7 2.6l-6.6 1.8zM790.6 563.5l6 6.9l-2.7 2.3l-6 -6.9zM1185 584.5l4.9 -9.1l3 1.6l-4.9 9.1zM1071.9 475.9l5.7 3.4l-1.2 2.1l-5.7 -3.4zM1164.3 679.3l5.3 4.5l-1.8 2.2l-5.3 -4.5zM1130.4 547.5l7.6 -1.1l0.5 3.4l-7.6 1.1zM1093.1 489.6l6.3 -6.3l1.9 1.9l-6.3 6.3zM942.3 668.8l8.6 0l-0 2.6l-8.6 -0zM1059.6 569l9.5 1l-0.3 3.2l-9.5 -1zM896.4 475.8l8.5 0.1l-0 2.8l-8.5 -0.1zM839.4 621.4l6 1l-0.5 3.2l-6 -1zM998.4 535.3l9.2 3.5l-1.1 3l-9.2 -3.5zM1159.9 656.3l6.1 4.2l-1.8 2.5l-6.1 -4.2zM858.7 640.4l6.5 -1.8l0.7 2.5l-6.5 1.8zM1080.6 556.6l6 0.6l-0.3 2.9l-6 -0.6zM707.7 642.1l6 7.2l-2.6 2.2l-6 -7.2zM859 577.5l10.4 -0.4l0.1 2.6l-10.4 0.4zM1125.3 687.4l6.8 -0.5l0.2 2.9l-6.8 0.5zM907.4 551.4l9.8 -0.7l0.2 3.3l-9.8 0.7zM1104.6 522l6.4 3.4l-1.6 3l-6.4 -3.4zM1094.2 682.1l5.4 -3.6l1.8 2.7l-5.4 3.6zM848.1 701.3l6.7 -4.8l1.4 2l-6.7 4.8zM968.9 697.6l6.6 -3.9l1.4 2.4l-6.6 3.9zM1106.1 486.7l7.2 2.6l-1.2 3.2l-7.2 -2.6zM1001.1 664l8.8 1.4l-0.4 2.7l-8.8 -1.4zM869.2 527.4l6.6 3.4l-1.3 2.4l-6.6 -3.4zM845.5 495.6l10.9 -0.1l0 2.8l-10.9 0.1zM770.6 605.1l6.2 -6.8l2 1.8l-6.2 6.8zM1045.9 560.2l7.3 2.9l-1 2.6l-7.3 -2.9zM748.8 517.7l7.4 -0.4l0.1 2.4l-7.4 0.4zM1115.2 617.3l7.3 2l-0.8 3.1l-7.3 -2zM956.7 485.2l9.7 -3.9l0.9 2.4l-9.7 3.9zM1120.9 673.2l10.4 -2.4l0.7 3l-10.4 2.4zM755.9 513.3l7.8 -5l1.4 2.2l-7.8 5zM967.6 686.9l9.7 -2.3l0.8 3.2l-9.7 2.3zM1179.9 504.9l9.6 -4.4l1.1 2.5l-9.6 4.4zM1198.1 682.9l10.6 2.8l-0.7 2.6l-10.6 -2.8zM898 524l6.5 -0.9l0.4 2.9l-6.5 0.9zM1040.6 611.2l8.3 -4.4l1.1 2.2l-8.3 4.4zM1265.5 609.8l9.2 -4l1.3 2.9l-9.2 4zM1194.9 648.5l9.3 -2.3l0.6 2.4l-9.3 2.3zM943.2 490.7l7.7 -7.5l2.1 2.1l-7.7 7.5zM1226.3 607.8l7.9 -3.3l1 2.5l-7.9 3.3zM1165.2 575.2l1.7 -7.9l2.5 0.5l-1.7 7.9zM709.7 634.3l7.4 -6.5l1.9 2.2l-7.4 6.5zM967.1 640.2l9.1 5.1l-1.3 2.3l-9.1 -5.1zM1055.2 677l8.4 -2.6l0.8 2.7l-8.4 2.6zM744.2 686.3l9.6 5l-1.3 2.4l-9.6 -5zM842.4 618.6l6.1 -0.2l0.1 2.7l-6.1 0.2zM1021 696.8l11 -0.5l0.1 3.3l-11 0.5zM950 526.9l10.2 0.2l-0.1 2.9l-10.2 -0.2zM907.1 649.6l9.9 0.7l-0.2 3.3l-9.9 -0.7z" fill="#f6f4f2" opacity="0.86"/>
<path d="M986.1 503.5l6.6 3.3l-1.6 3.2l-6.6 -3.3zM952.6 316.4l10 -2.2l0.6 2.7l-10 2.2zM1098.8 421.8l5.3 5.1l-2 2.1l-5.3 -5.1zM1094.6 471.6l10.1 -2.4l0.7 2.8l-10.1 2.4zM1083.6 680.1l7.2 4.2l-1.5 2.5l-7.2 -4.2zM781.6 570.1l5.3 5.6l-2 1.9l-5.3 -5.6zM928.9 379.7l11.8 -0.3l0.1 3.3l-11.8 0.3zM649 572.8l7.3 0.7l-0.3 3.3l-7.3 -0.7zM1074 182.5l10.1 4.6l-1.6 3.4l-10.1 -4.6zM813.6 521.8l8 0.2l-0.1 3.3l-8 -0.2zM948.7 87.3l7.1 -2.4l1.2 3.5l-7.1 2.4zM1099.4 58.7l10.7 -1.3l0.4 3l-10.7 1.3zM1145.2 287l9.6 -5l1.7 3.2l-9.6 5zM1223.6 444.7l8.5 -1.7l0.7 3.4l-8.5 1.7zM1071 543.2l9.3 -0.7l0.2 2.8l-9.3 0.7zM884.4 252.2l9.5 2.6l-0.9 3.5l-9.5 -2.6zM664 479.7l10.4 -1.4l0.5 3.8l-10.4 1.4zM1359.5 338.6l10 4.5l-1.3 2.8l-10 -4.5zM1219.6 365.2l8.2 0l-0 2.6l-8.2 -0zM1062.5 472.2l5.9 6.3l-2.8 2.6l-5.9 -6.3zM918.6 102.2l11.5 1.8l-0.5 3.1l-11.5 -1.8zM1050.5 132.3l8.9 4.2l-1.2 2.6l-8.9 -4.2zM777.3 334l9.5 -5l1.7 3.2l-9.5 5zM712.2 610.9l11 3.5l-1 3.1l-11 -3.5zM882.8 422.8l5.7 4.6l-1.7 2.1l-5.7 -4.6zM908.8 476.1l11.8 -1.4l0.4 3.2l-11.8 1.4zM674.4 322.6l6.5 6.9l-2.1 1.9l-6.5 -6.9zM999.8 164.8l7.5 -8l2.1 2l-7.5 8zM924.8 149.5l10 0.5l-0.2 3.5l-10 -0.5zM987 625l9.4 1.2l-0.4 3.1l-9.4 -1.2zM999.9 388l8.7 3.5l-1.1 2.8l-8.7 -3.5zM919.8 253.6l9.4 1.4l-0.5 3.3l-9.4 -1.4zM702.5 475.1l11.6 2.1l-0.6 3l-11.6 -2.1zM531.7 44.5l7.8 1.8l-0.8 3.6l-7.8 -1.8zM837.8 220.7l5.8 5.5l-2.5 2.6l-5.8 -5.5zM878.3 447.4l11.2 -0.6l0.2 3.5l-11.2 0.6zM860.1 472.7l9.6 2.9l-1 3.2l-9.6 -2.9zM845.7 288.4l10.5 -3.7l1 3l-10.5 3.7zM894.6 530.6l9 1l-0.3 2.9l-9 -1zM1339.8 479.4l5.5 -4.5l2.2 2.7l-5.5 4.5zM779.9 233.1l8.1 -8.5l2.4 2.3l-8.1 8.5zM1264.7 301.5l6.9 2.4l-1.1 3.1l-6.9 -2.4zM885.5 422.2l7.6 6.4l-1.9 2.3l-7.6 -6.4zM1123.5 75.8l11.5 -1.5l0.4 2.8l-11.5 1.5zM1223.1 377.3l6.8 6.5l-1.8 1.9l-6.8 -6.5zM847.8 172.7l8.4 0.7l-0.3 2.9l-8.4 -0.7zM852.6 369l9.6 -0l0 3.1l-9.6 0zM1131 291.2l9.3 3.1l-1.2 3.7l-9.3 -3.1zM901 336.4l9.6 3.7l-1.1 2.7l-9.6 -3.7zM930.1 240.9l7.2 2.6l-1.1 3.1l-7.2 -2.6zM1124.2 215.2l7.6 -1.7l0.7 3l-7.6 1.7zM744.8 352.4l9 -2.5l0.7 2.6l-9 2.5zM1190.9 521.9l9.1 -6l2.1 3.1l-9.1 6zM786.8 231.5l7.2 -0.2l0.1 3.7l-7.2 0.2zM869 36.6l10.1 6l-1.7 3l-10.1 -6zM661.9 550l7.5 -8.8l2.2 1.9l-7.5 8.8zM902.2 550.8l8.1 -4.2l1.3 2.4l-8.1 4.2zM942.5 26.7l6.3 6.7l-2 1.9l-6.3 -6.7zM910 704.4l10.5 4.2l-1.2 3l-10.5 -4.2zM710.4 465.7l7.7 2.7l-1.2 3.4l-7.7 -2.7zM1032.6 474.3l7 -3.3l1.4 3.1l-7 3.3zM738.4 475.1l7.9 5.2l-1.5 2.2l-7.9 -5.2zM834.5 111.3l7.7 -0.4l0.2 3.3l-7.7 0.4zM970.4 456.4l7.7 1.3l-0.5 2.6l-7.7 -1.3zM1191 587.2l9 5.7l-2 3.2l-9 -5.7zM831.9 329.8l9.9 1.1l-0.4 3.2l-9.9 -1.1zM993.3 332.5l6.9 -2l0.9 3.3l-6.9 2zM993.7 428.3l9.2 -6.7l2.3 3.1l-9.2 6.7zM1012.8 462.6l6 -4.9l2.1 2.6l-6 4.9zM1148.8 91.4l3.7 7.7l-2.9 1.4l-3.7 -7.7zM1015.7 138.5l10.8 4.1l-1.3 3.5l-10.8 -4.1zM976.1 78.1l7.6 7.4l-2.5 2.6l-7.6 -7.4zM878.3 45.9l7.2 7.9l-2.2 2l-7.2 -7.9zM936.6 72l11.4 0.7l-0.2 3.1l-11.4 -0.7zM1390 504.4l8.5 4.5l-1.2 2.3l-8.5 -4.5zM944.7 22.9l9.9 -5.7l1.9 3.4l-9.9 5.7zM1015.8 427.4l11 -4.4l1.1 2.6l-11 4.4zM870.3 150.7l4.2 7.4l-2.8 1.6l-4.2 -7.4zM764.5 247l9.7 3.3l-0.9 2.6l-9.7 -3.3zM978 243.8l10.4 -5.9l1.5 2.6l-10.4 5.9zM903.6 662.7l10.4 -0.7l0.3 3.8l-10.4 0.7zM896.3 610.8l10.9 1.2l-0.4 3.3l-10.9 -1.2zM788.3 431l7.9 -3.4l1.2 2.8l-7.9 3.4zM809.6 459.4l9.4 -3.5l1 2.8l-9.4 3.5zM935.3 494.7l9.7 -6.8l1.9 2.8l-9.7 6.8zM890.4 388.7l10.4 -0.3l0.1 3.5l-10.4 0.3zM1037.9 250.8l10.4 -1.6l0.4 2.8l-10.4 1.6zM977.8 715.7l11.9 0.1l-0 3.8l-11.9 -0.1zM610.4 426.4l7 -1.8l0.8 3.3l-7 1.8zM1059 444.3l5.6 -6l2.8 2.7l-5.6 6zM795.7 38.2l9.3 -0.5l0.2 3.4l-9.3 0.5zM1175.8 389.7l7.3 3.9l-1.6 3l-7.3 -3.9zM877.8 317.7l10.6 -3.3l0.9 3l-10.6 3.3zM918.2 415l10.5 -5.2l1.6 3.2l-10.5 5.2zM876 100.7l8.2 3.1l-1 2.6l-8.2 -3.1zM800.6 386.9l7.5 -2.2l1 3.3l-7.5 2.2zM834 284.9l6.4 4.9l-2 2.6l-6.4 -4.9zM1315.2 542l10.4 5.7l-1.8 3.3l-10.4 -5.7zM975.4 465.7l10.2 -6.1l1.6 2.7l-10.2 6.1zM830.3 27.4l9 -3.5l1 2.5l-9 3.5zM1132.1 132l7.3 0.8l-0.3 2.8l-7.3 -0.8zM563.3 286.9l7.3 3.1l-1.1 2.6l-7.3 -3.1zM859.5 609.8l7.8 6.3l-2.1 2.7l-7.8 -6.3zM895.7 244.1l10.4 1.8l-0.5 2.9l-10.4 -1.8zM805.1 498.8l5.4 -8.4l2.9 1.9l-5.4 8.4zM1032.6 450l6.7 5.9l-2.3 2.6l-6.7 -5.9zM731.4 701.2l9.2 -4l1.3 3l-9.2 4zM882.7 441.5l8.4 0.1l-0 3.2l-8.4 -0.1zM907.6 624.7l10.6 3.7l-0.9 2.6l-10.6 -3.7zM1032.7 274.8l7.7 3.8l-1.2 2.4l-7.7 -3.8zM1076.8 298.3l9 3.8l-1.4 3.3l-9 -3.8zM988.8 231.9l10.5 -1.6l0.5 3.5l-10.5 1.6zM834.1 166.3l11.7 -0.6l0.2 3.4l-11.7 0.6zM892.4 106.3l7.9 -5.2l1.8 2.7l-7.9 5.2zM1012 647.3l5.1 6.9l-2.4 1.8l-5.1 -6.9zM1073.9 246l9.3 3l-1 3.2l-9.3 -3zM559.4 503.5l8.8 -4.4l1.2 2.4l-8.8 4.4zM930.8 249.8l9.3 -1l0.3 3.1l-9.3 1zM1080.8 374.5l7.1 6.4l-2.1 2.3l-7.1 -6.4zM774.1 519.5l7.3 4l-1.8 3.3l-7.3 -4zM1048.5 111.7l10.4 -5.7l1.7 3.2l-10.4 5.7zM866 152.9l7.6 -2l0.9 3.3l-7.6 2zM907.6 449.8l11.2 3.1l-0.9 3.1l-11.2 -3.1zM821.8 178l8.5 -0.3l0.1 3.2l-8.5 0.3zM901.3 210l9.1 -1.1l0.3 2.8l-9.1 1.1zM647.1 672.9l8.6 2.1l-0.9 3.7l-8.6 -2.1zM973.3 640.2l9.5 -0.8l0.3 3l-9.5 0.8zM754.8 38.9l8.2 -5.2l1.7 2.8l-8.2 5.2zM817.3 356.1l2 10l-2.6 0.5l-2 -10zM1177.2 387.4l9.5 -1.7l0.5 3l-9.5 1.7zM718.2 360.3l11.1 -1.5l0.4 2.9l-11.1 1.5zM604.3 401.5l11.4 2l-0.5 3.1l-11.4 -2zM1146.3 568.1l5.7 -5.5l2.3 2.4l-5.7 5.5zM935.3 235.8l9.8 6.1l-1.5 2.5l-9.8 -6.1zM898.8 247.4l7.1 -4.5l1.5 2.4l-7.1 4.5zM881.9 283.2l7.2 -1.5l0.6 3.1l-7.2 1.5zM1253.1 368.4l8.5 8.4l-2.5 2.5l-8.5 -8.4zM938.2 47.9l8.6 2.1l-0.7 3l-8.6 -2.1zM1025.4 246.1l3.9 5.8l-2.7 1.8l-3.9 -5.8zM892 324.7l7 -1.9l0.7 2.7l-7 1.9zM1423.4 471.8l9.9 -2.4l0.6 2.6l-9.9 2.4zM1253.2 498.8l9.3 -2.2l0.6 2.7l-9.3 2.2zM1137.9 323l5.6 -5.2l2.6 2.8l-5.6 5.2zM978.1 707l8.4 -0.8l0.3 3.2l-8.4 0.8zM941.9 503.2l8.4 -1.1l0.4 2.9l-8.4 1.1zM985 208.3l3.6 8.7l-3.3 1.4l-3.6 -8.7zM794.4 475.6l9.7 -3.7l0.9 2.4l-9.7 3.7zM896.7 671.6l6.3 3.8l-1.4 2.3l-6.3 -3.8zM639.7 563.9l9.7 -2l0.6 2.6l-9.7 2zM614.3 211l7.2 0.4l-0.2 3.8l-7.2 -0.4zM1013.4 296.8l6.2 3.9l-2 3.2l-6.2 -3.9zM932.7 476.4l9.2 -6l1.5 2.4l-9.2 6zM1007.8 166.1l9.4 1.8l-0.5 2.6l-9.4 -1.8zM1120 635.4l5.7 5.2l-2.3 2.5l-5.7 -5.2zM1418.9 546.3l10.9 -1.4l0.3 2.7l-10.9 1.4zM837.9 257.9l3.4 6.2l-2.5 1.3l-3.4 -6.2zM1351.8 267.7l7.4 -8.7l2.3 1.9l-7.4 8.7zM812.8 364.5l11.6 2.3l-0.7 3.4l-11.6 -2.3zM772.4 364.4l10.9 -1l0.3 2.9l-10.9 1zM1047.8 108.9l8 -0.3l0.1 3.5l-8 0.3zM945.3 598.6l8.5 2.9l-1.1 3.3l-8.5 -2.9zM981 112.2l10.3 -0.9l0.3 3.2l-10.3 0.9zM757.3 546.8l8.4 -6.7l1.8 2.2l-8.4 6.7zM775.7 495.9l6 5.3l-1.9 2.1l-6 -5.3zM836.5 567.8l10 1.9l-0.6 3l-10 -1.9zM1064.6 630.1l11.3 0.6l-0.2 3l-11.3 -0.6zM1021.4 375.9l9.1 -0.5l0.2 3.8l-9.1 0.5zM1109.3 124.3l7.1 7.8l-2.5 2.2l-7.1 -7.8zM1178 522.1l4.2 10l-3 1.3l-4.2 -10zM1140.7 217.3l6.6 3.2l-1.5 3.1l-6.6 -3.2zM811.8 285.3l6.1 3.6l-1.4 2.4l-6.1 -3.6zM1082.9 426.3l9.2 4.9l-1.5 2.8l-9.2 -4.9zM1109.1 320.8l7.8 4.9l-1.5 2.3l-7.8 -4.9zM1014.9 547.4l6.9 -9.4l2.9 2.1l-6.9 9.4zM1180.7 69.8l8.9 -1.8l0.6 2.8l-8.9 1.8zM779.9 546.8l7.5 2.1l-1 3.5l-7.5 -2.1zM979 544.3l6.9 3.2l-1.5 3.2l-6.9 -3.2zM987 252.9l7.4 3.6l-1.4 2.9l-7.4 -3.6zM1114.1 394.2l8.5 -0.8l0.3 2.7l-8.5 0.8zM841.9 287.3l11.6 0.5l-0.2 3.3l-11.6 -0.5zM811.6 266.9l7.8 -3.2l1.4 3.5l-7.8 3.2zM1038.8 424.1l7.4 -1.7l0.8 3.6l-7.4 1.7zM1190.3 327.2l10.8 -3.4l0.9 3l-10.8 3.4zM978.9 473.6l7.8 6.7l-1.9 2.2l-7.8 -6.7zM1108.7 405.9l7.5 0.9l-0.3 2.7l-7.5 -0.9zM859.5 548l10.1 0.3l-0.1 2.8l-10.1 -0.3zM1129.1 197.9l9.3 -5.8l1.4 2.3l-9.3 5.8zM697.3 639.6l9 3.5l-1 2.5l-9 -3.5zM1147.2 161.2l7.1 -6.5l2.2 2.4l-7.1 6.5zM881.1 87.4l9.7 5.2l-1.8 3.4l-9.7 -5.2zM1203.2 298.3l7.7 -0.5l0.2 3.3l-7.7 0.5zM1173.3 375.4l9 0.6l-0.2 3.4l-9 -0.6zM950.4 91.4l11 -2.6l0.7 3.1l-11 2.6zM747.8 301.6l7.7 -0.3l0.1 3.2l-7.7 0.3zM1172.7 262.3l9.1 -5.2l1.5 2.6l-9.1 5.2zM1026 234l10.4 0.5l-0.2 3.7l-10.4 -0.5zM1110.1 708.7l9.4 -2.5l0.8 3.1l-9.4 2.5zM747.9 484.7l9.5 6.2l-1.8 2.7l-9.5 -6.2zM885.1 299.9l10.4 1.3l-0.4 3.7l-10.4 -1.3zM768.5 353.5l6.8 -4.3l1.6 2.6l-6.8 4.3zM885.7 113.7l7.8 3.4l-1.1 2.6l-7.8 -3.4zM468.2 603.3l10.8 2.2l-0.5 2.6l-10.8 -2.2zM802.2 424.2l10.7 -3.4l0.8 2.6l-10.7 3.4zM880.8 651.6l8.6 5.1l-1.9 3.2l-8.6 -5.1zM806.4 176.2l6.2 4.4l-1.7 2.4l-6.2 -4.4zM1130.4 600.9l8.2 2.9l-1 2.9l-8.2 -2.9zM902 403.7l6.9 -4.1l1.9 3.2l-6.9 4.1zM861.8 181.2l7.9 1.5l-0.6 3.1l-7.9 -1.5zM986.9 683.9l7.5 0.8l-0.3 2.9l-7.5 -0.8zM1065.5 691l7 1.3l-0.5 2.7l-7 -1.3zM1096.3 387.5l7.6 -2.9l1.3 3.4l-7.6 2.9zM1352.5 609.2l11.1 3l-0.7 2.5l-11.1 -3zM1154.1 686.6l8.3 -0.2l0.1 3.8l-8.3 0.2zM1002.7 331.3l10.3 0.4l-0.1 2.7l-10.3 -0.4zM1066.5 583.7l7.1 1l-0.5 3.3l-7.1 -1zM743 27.1l6.8 5.4l-2.1 2.6l-6.8 -5.4zM1086.2 427.5l11.2 -1.4l0.3 2.8l-11.2 1.4zM1227.7 546.9l6.6 7.2l-2.2 2l-6.6 -7.2zM1089 448.2l7.1 0.6l-0.3 2.8l-7.1 -0.6zM1058.1 627.9l7 0.4l-0.2 3.1l-7 -0.4zM989.7 46l5.5 -5.4l2.1 2.2l-5.5 5.4zM1069.3 573.4l4.3 5.6l-2.3 1.8l-4.3 -5.6zM1163.8 367.3l3.1 6.8l-2.7 1.2l-3.1 -6.8zM1009.8 101.8l7.8 4.7l-1.6 2.6l-7.8 -4.7zM1047.6 363.9l3.1 6.5l-2.8 1.3l-3.1 -6.5zM942.6 390.3l11.3 -0.5l0.2 3.8l-11.3 0.5zM1021.9 211.2l6 8.2l-2.9 2.1l-6 -8.2zM965.1 663.7l10.8 -0.1l0 3.4l-10.8 0.1zM1208.5 539l7.8 -7.3l2.2 2.3l-7.8 7.3zM759.6 639l6.6 6.4l-2.4 2.4l-6.6 -6.4zM1134.9 638.8l6.3 3.7l-1.3 2.2l-6.3 -3.7zM1149.5 678.7l6.5 -2.9l1.3 3l-6.5 2.9zM900.8 681.1l10.1 1.7l-0.4 2.6l-10.1 -1.7zM1010.6 611.3l7.2 5.6l-2.1 2.8l-7.2 -5.6zM1098.1 486.1l1.9 9.3l-3.5 0.7l-1.9 -9.3zM939.6 632.3l6.6 8l-2.1 1.8l-6.6 -8zM1175.7 518.2l7.6 5.4l-1.6 2.3l-7.6 -5.4zM804.8 543l7.4 -7.7l1.9 1.8l-7.4 7.7zM1026.6 612l6.3 5.2l-2 2.5l-6.3 -5.2zM905.5 695.5l6.9 6.2l-1.8 2l-6.9 -6.2zM1041.4 559.4l9.2 5.7l-1.5 2.5l-9.2 -5.7zM1178.9 652.7l3.1 -9.9l3 0.9l-3.1 9.9zM930.9 586.8l9.5 0.3l-0.1 2.9l-9.5 -0.3zM1066.5 563.2l3.4 -5l2.5 1.7l-3.4 5zM1143.1 688.9l5.2 8.4l-2.3 1.4l-5.2 -8.4zM1244.1 512.7l5.9 7.8l-2.3 1.8l-5.9 -7.8zM1108.5 572.2l2.5 -7.8l3 1l-2.5 7.8zM946.5 631.6l7 -8.1l2.6 2.2l-7 8.1zM1080.8 564.5l5.8 -1.9l0.9 2.7l-5.8 1.9zM1120.2 538.2l9.3 1l-0.3 2.6l-9.3 -1zM1105.6 695.6l9.2 2.8l-0.8 2.6l-9.2 -2.8zM938.7 613.6l3 5.3l-2.3 1.3l-3 -5.3zM927.5 672.8l1.7 9.7l-3.4 0.6l-1.7 -9.7zM1105 516.9l3.6 -9l3.2 1.3l-3.6 9zM802.7 601.2l9.4 4l-1.4 3.3l-9.4 -4zM829 528.1l5.4 -4.4l1.6 2l-5.4 4.4zM1244.8 520.3l8.7 -5l1.5 2.7l-8.7 5zM1026.8 602l5.5 3.8l-2 2.9l-5.5 -3.8zM889.1 553.3l8.2 1.8l-0.6 2.9l-8.2 -1.8zM1030.2 632.5l6 3.8l-1.6 2.6l-6 -3.8zM931.8 554.4l7.6 3.4l-1.1 2.5l-7.6 -3.4zM992.3 467.7l8.3 2.8l-1.1 3.2l-8.3 -2.8zM996.6 566.4l10.2 0.8l-0.2 2.9l-10.2 -0.8zM863.6 554.7l5.1 5.6l-2 1.8l-5.1 -5.6zM966.1 635.8l6.9 -4l1.4 2.5l-6.9 4zM1036.4 513.2l3.1 -5.2l2.3 1.4l-3.1 5.2zM1135.3 560.6l6 -0.5l0.2 2.6l-6 0.5zM1015.8 639.1l8.4 1.5l-0.5 2.7l-8.4 -1.5zM1046.7 475.6l7.9 -2.3l0.8 2.7l-7.9 2.3zM1019.6 545.1l7 1.6l-0.8 3.3l-7 -1.6zM823.5 553.6l7.8 1.7l-0.5 2.4l-7.8 -1.7zM1066.3 588.4l7.1 0.3l-0.1 2.6l-7.1 -0.3zM1109.7 622.7l2.6 -8.8l2.8 0.8l-2.6 8.8z" fill="#eeb9b0" opacity="0.86"/>
<path d="M1102.8 295.3l9.1 -4.3l1.3 2.8l-9.1 4.3zM1004.4 593.2l10 1.7l-0.5 3.1l-10 -1.7zM938.8 507.4l9.2 5.1l-1.6 2.9l-9.2 -5.1zM871.4 262.6l8 -0l0 3.4l-8 0zM844.6 514.4l6.1 3.5l-1.5 2.7l-6.1 -3.5zM928.2 373.3l10.4 -5.7l1.8 3.2l-10.4 5.7zM823.7 548.4l10.8 2.5l-0.7 3l-10.8 -2.5zM1187.3 227.9l7.8 -4.4l1.5 2.7l-7.8 4.4zM1118.3 242.8l6.9 9.8l-2.3 1.6l-6.9 -9.8zM1076.6 488.3l10.9 -0.5l0.1 2.8l-10.9 0.5zM908.9 152.6l6.8 2.4l-0.9 2.5l-6.8 -2.4zM978.8 382.6l8.3 6.1l-2 2.7l-8.3 -6.1zM767.4 517.1l4.7 -10.1l2.5 1.2l-4.7 10.1zM918.6 290.2l9.6 1.5l-0.5 3.4l-9.6 -1.5zM1041.3 122.2l10.2 0.3l-0.1 3.1l-10.2 -0.3zM887 301l9.3 4.1l-1.2 2.7l-9.3 -4.1zM789.3 640.4l10.7 2.9l-1 3.6l-10.7 -2.9zM1166.8 535.3l11.8 0.9l-0.2 2.6l-11.8 -0.9zM994.5 577.8l7.7 -2.3l1 3.2l-7.7 2.3zM668.4 670.3l10.4 1l-0.3 3.4l-10.4 -1zM1375.1 685.9l10.1 2.5l-0.8 3.2l-10.1 -2.5zM1008.2 384.1l8.7 1.2l-0.5 3.8l-8.7 -1.2zM933.2 250l6.5 2.9l-1.2 2.7l-6.5 -2.9zM1001.4 711.2l7.7 0.4l-0.1 3.1l-7.7 -0.4zM946.8 14.6l7.1 2.7l-1 2.7l-7.1 -2.7zM1071 -11.4l8.4 0.5l-0.2 3.9l-8.4 -0.5zM746.2 418.1l3.3 -7.8l3.3 1.4l-3.3 7.8zM1203.9 669.4l5.6 5.1l-1.8 2l-5.6 -5.1zM855.8 349l7.2 3.1l-1.5 3.5l-7.2 -3.1zM1002.4 573.1l7.1 2.1l-1 3.5l-7.1 -2.1zM1014.2 388.4l8.3 -0.6l0.3 3.6l-8.3 0.6zM995.3 249.2l10.5 -3.5l1.2 3.6l-10.5 3.5zM865.7 477.2l8.2 4.4l-1.5 2.8l-8.2 -4.4zM1079.6 675.5l7.4 0.4l-0.2 3.6l-7.4 -0.4zM906 336.7l7.6 -1.2l0.5 3.3l-7.6 1.2zM840.9 351.5l7.1 -2.1l0.8 2.5l-7.1 2.1zM1005.7 515.5l9.5 -4.9l1.5 3l-9.5 4.9zM702.8 386.3l7.5 -1l0.4 3.1l-7.5 1zM1154.9 475.1l9.2 -1l0.4 3.8l-9.2 1zM958.2 428.1l10.6 -2.8l0.9 3.3l-10.6 2.8zM981.3 368.7l8.9 3.1l-1 2.9l-8.9 -3.1zM846.3 481.7l10.5 -2l0.5 2.8l-10.5 2zM1275.6 376.1l8.8 -0.2l0.1 2.9l-8.8 0.2zM562.5 264.6l6.7 3.1l-1.3 2.9l-6.7 -3.1zM806.2 660.8l10.8 -3l0.9 3.3l-10.8 3zM1105.7 447.1l7.8 2.3l-1 3.3l-7.8 -2.3zM920.2 287.9l9.5 -0.3l0.1 2.9l-9.5 0.3zM769.7 697.6l9.8 1.5l-0.5 3.4l-9.8 -1.5zM927.3 271.9l9.4 -1.4l0.4 2.9l-9.4 1.4zM963 108.1l8.8 4.3l-1.6 3.3l-8.8 -4.3zM1178.5 203.4l7.2 0.6l-0.3 3.4l-7.2 -0.6zM832.1 471.7l7.7 0.8l-0.4 3.7l-7.7 -0.8zM977.1 111l8.8 -2.1l0.6 2.7l-8.8 2.1zM964 387.2l10.4 -0.7l0.3 3.7l-10.4 0.7zM617.6 652.6l9.1 5.8l-1.5 2.4l-9.1 -5.8zM929.7 397.9l8.1 -3.8l1.2 2.6l-8.1 3.8zM1017 496l11.2 -3.2l1.1 3.7l-11.2 3.2zM1056 136.3l8.6 0l-0 3.4l-8.6 -0zM954.2 194.3l6.1 6.7l-2.5 2.3l-6.1 -6.7zM786.9 165.5l7.3 -3.6l1.6 3.2l-7.3 3.6zM1029.8 677.2l10.3 1l-0.3 3.2l-10.3 -1zM1129.6 253.2l4.2 8.5l-2.8 1.4l-4.2 -8.5zM634.1 594.9l9.2 -2.6l0.8 2.9l-9.2 2.6zM1167 488.2l11.1 -0.9l0.2 3.1l-11.1 0.9zM753.8 259l10.3 1.8l-0.5 2.8l-10.3 -1.8zM935.5 220.3l5.9 -6.2l2.2 2.1l-5.9 6.2zM746 420.2l8.4 2.2l-0.7 2.7l-8.4 -2.2zM1091.7 661.7l7.6 -7.3l2.4 2.6l-7.6 7.3zM747.8 258.1l8.1 -3.2l1 2.6l-8.1 3.2zM737.9 414.8l9.7 6.8l-1.8 2.6l-9.7 -6.8zM1001.8 253.1l11.4 2.1l-0.6 3.5l-11.4 -2.1zM931.1 135l4.6 10l-2.5 1.1l-4.6 -10zM927.2 336.4l10 4.5l-1.5 3.3l-10 -4.5zM897.1 407.1l10.1 2.2l-0.8 3.5l-10.1 -2.2zM827.6 328.7l7.9 5.4l-2.2 3.2l-7.9 -5.4zM1035.6 541l11.3 1.4l-0.3 2.6l-11.3 -1.4zM890.8 307.8l5.5 -5.9l1.9 1.8l-5.5 5.9zM947.5 159.1l11.2 1.2l-0.4 3.8l-11.2 -1.2zM1074.5 94.7l9.4 1.7l-0.7 3.7l-9.4 -1.7zM881.8 231.7l6.8 -6l2.4 2.7l-6.8 6zM1135.9 512l7.9 8.6l-2 1.8l-7.9 -8.6zM1198.7 163.7l8.1 2.7l-1.1 3.4l-8.1 -2.7zM927.6 522.6l6.3 -3.4l1.4 2.6l-6.3 3.4zM924.6 147.6l7.1 -8.9l2.6 2l-7.1 8.9zM806 357.4l9.7 -4.8l1.3 2.7l-9.7 4.8zM973.6 359.4l6.2 5.7l-2.4 2.7l-6.2 -5.7zM1278.7 335.4l10.5 -0.3l0.1 3.1l-10.5 0.3zM698.5 641l8.7 4.9l-1.6 2.8l-8.7 -4.9zM1139.1 60.1l8.2 -8.4l2.5 2.5l-8.2 8.4zM915.9 173l7.1 -3.9l1.3 2.4l-7.1 3.9zM819.3 173.8l10.6 -1.4l0.5 3.8l-10.6 1.4zM1101.7 207.3l8.4 0.1l-0 3.2l-8.4 -0.1zM1056.8 62.4l7.2 2.2l-0.8 2.7l-7.2 -2.2zM754.6 113.1l7 -4.9l2.1 2.9l-7 4.9zM861.5 408l8.3 -1.4l0.5 2.8l-8.3 1.4zM1043.8 324.4l11.1 0.2l-0 2.9l-11.1 -0.2zM394.1 516.4l9.4 1.7l-0.6 3.4l-9.4 -1.7zM775.3 398.4l11.7 0.8l-0.2 3.1l-11.7 -0.8zM666.8 207.4l11.1 1.2l-0.3 2.8l-11.1 -1.2zM897.2 300l8.4 -7l2.1 2.5l-8.4 7zM1276.4 318.3l11.2 1.1l-0.3 3.2l-11.2 -1.1zM1047.8 311.5l8.1 1.3l-0.5 3.3l-8.1 -1.3zM806.6 484.7l5.8 -4.3l1.8 2.5l-5.8 4.3zM671 304.6l7.1 -7.8l2.8 2.6l-7.1 7.8zM1028.4 513.3l9.6 1.4l-0.4 2.9l-9.6 -1.4zM921.5 511l5.1 6.7l-2.1 1.6l-5.1 -6.7zM813.1 584.9l7.5 0.6l-0.3 3l-7.5 -0.6zM1022.1 546.5l7.2 0.2l-0.1 2.6l-7.2 -0.2zM1170 650.5l6.6 1.6l-0.7 2.8l-6.6 -1.6zM848.3 568.9l9.6 -0.4l0.1 2.8l-9.6 0.4zM925.8 503.6l8.9 -6.1l1.4 2l-8.9 6.1zM831 516.2l6.3 2l-1 3.3l-6.3 -2zM746.3 525.7l6 6.1l-2.5 2.4l-6 -6.1zM897.1 576l7.9 -3.9l1.3 2.5l-7.9 3.9zM1079.4 653.6l4.9 -5.9l2.5 2.1l-4.9 5.9z" fill="#9ad4cc" opacity="0.86"/>
<path d="M1178.1 124l7.4 -3.6l1.2 2.6l-7.4 3.6zM718.4 402.1l7.8 9l-2.6 2.3l-7.8 -9zM694.9 338.8l-1.6 7.2l-3.2 -0.7l1.6 -7.2zM1078.5 544.1l4 -6.3l3.2 2.1l-4 6.3zM1041.2 323.3l7.6 8.1l-2.5 2.3l-7.6 -8.1zM1068.3 347l9.4 2.2l-0.7 2.9l-9.4 -2.2zM710.2 563.7l6.3 3.3l-1.3 2.5l-6.3 -3.3zM1100.9 164.4l6.6 6.1l-2.6 2.8l-6.6 -6.1zM1160.1 320.2l7.4 1.9l-0.8 3.1l-7.4 -1.9zM936.1 44.3l8.5 -1.1l0.4 3.5l-8.5 1.1zM814.7 192.7l6.9 5.5l-1.7 2.1l-6.9 -5.5zM1022.6 373.1l8.2 -3.9l1.2 2.5l-8.2 3.9zM905.7 212.7l8.9 5.8l-1.7 2.6l-8.9 -5.8zM1082.5 327.8l5.9 -3.9l1.7 2.6l-5.9 3.9zM1004.4 517.6l7.6 -1.1l0.4 2.7l-7.6 1.1zM1120.5 242.4l9.4 7.4l-2 2.6l-9.4 -7.4zM939.3 302.6l10.4 2.1l-0.8 3.7l-10.4 -2.1zM945.7 26.9l10.7 -4.2l1.4 3.5l-10.7 4.2zM745.2 433l6.5 3.3l-1.4 2.7l-6.5 -3.3zM1135.3 295.7l6.7 5l-2.1 2.8l-6.7 -5zM1084.9 235.2l8.7 5.8l-1.8 2.8l-8.7 -5.8zM1123.5 235.8l7.3 -6.6l2.1 2.3l-7.3 6.6zM678.7 126.8l10 -6.3l1.5 2.4l-10 6.3zM659.7 291l8.7 8.2l-1.8 1.9l-8.7 -8.2zM1024.5 387.3l8.8 -0.7l0.2 3.1l-8.8 0.7zM1047.9 275.4l10 2l-0.7 3.3l-10 -2zM1210.7 414.7l8.4 -2.6l1.1 3.7l-8.4 2.6zM1230.5 629.9l7.6 -6.5l2.2 2.5l-7.6 6.5zM1013.6 561.3l7.7 -3.5l1.4 3.1l-7.7 3.5zM343.6 632.6l8.4 -0.3l0.1 2.8l-8.4 0.3zM1159.2 157.3l4.1 7.4l-2.4 1.3l-4.1 -7.4zM558.1 284.4l7.4 1.9l-0.8 3.1l-7.4 -1.9zM1013.3 668.7l7.1 2l-1 3.5l-7.1 -2zM1101.9 437.2l6.1 9.3l-2.9 1.9l-6.1 -9.3zM854.9 545.1l9.3 -1l0.4 3.8l-9.3 1zM1016.3 338.7l9 0.4l-0.1 2.7l-9 -0.4zM1003.5 244.2l8.2 3.9l-1.3 2.7l-8.2 -3.9zM1176.7 287.7l11.5 0.2l-0.1 3.8l-11.5 -0.2zM835.3 475.4l9.3 0.1l-0 2.9l-9.3 -0.1zM1177.9 594.5l8 8.8l-2.1 1.9l-8 -8.8zM794 288.1l7.7 3.5l-1.1 2.4l-7.7 -3.5zM1063.2 541.6l7.4 -8.7l2.7 2.3l-7.4 8.7zM848 681l10.8 -0.6l0.2 3.2l-10.8 0.6zM985.7 335.8l7.2 -4.3l1.7 2.8l-7.2 4.3zM936 236.2l10.4 -1l0.4 3.8l-10.4 1zM1178.7 502.3l6.2 -3.9l1.5 2.3l-6.2 3.9zM524 500.3l10.3 -1.4l0.4 2.7l-10.3 1.4zM897 242.3l6.7 2l-1.1 3.7l-6.7 -2zM1061.8 86.8l6.2 3.5l-1.8 3.3l-6.2 -3.5zM872.4 101l10 -1.2l0.5 3.8l-10 1.2zM904.8 190l5.4 6.3l-2.8 2.4l-5.4 -6.3zM770.9 305.9l9.9 -1.3l0.4 3.3l-9.9 1.3zM761 350.4l7.4 -6.7l2.5 2.8l-7.4 6.7zM894.2 623.1l7.9 6.1l-2.4 3l-7.9 -6.1zM982.2 238.6l3 10l-2.7 0.8l-3 -10zM947.9 209.3l6.8 2l-0.9 3.1l-6.8 -2zM1028.7 438.9l2.8 -8.5l3 1l-2.8 8.5zM955.1 329.8l6.8 -2.7l1.3 3.3l-6.8 2.7zM839.7 -6.7l2.7 6.6l-2.6 1.1l-2.7 -6.6zM787 243.3l11 -4.2l1.2 3.1l-11 4.2zM1015.2 453.5l6.2 5.4l-1.7 2l-6.2 -5.4zM789.8 350l8.2 7.1l-2 2.3l-8.2 -7.1zM928.5 376.7l8.9 3.3l-1.1 2.8l-8.9 -3.3zM975.1 251.9l11.4 -0.6l0.2 3.6l-11.4 0.6zM1090.6 431.4l3.3 10.5l-3.4 1.1l-3.3 -10.5zM970.1 403.5l11.3 1.7l-0.5 3.6l-11.3 -1.7zM1122.2 202.6l9.7 4.2l-1.2 2.8l-9.7 -4.2zM1028.7 327.6l9.8 5l-1.4 2.6l-9.8 -5zM1134.9 492.6l10.8 5.2l-1.6 3.3l-10.8 -5.2zM897.4 106.5l5.3 -5.9l2.8 2.5l-5.3 5.9zM1088.2 89.3l11.3 -1.1l0.4 3.8l-11.3 1.1zM571.1 257.4l9.5 0.3l-0.1 3.4l-9.5 -0.3zM1252.7 421.6l7 -3.6l1.7 3.4l-7 3.6zM809 458.7l9.5 3.8l-1.1 2.7l-9.5 -3.8zM959 184.8l8.6 2.2l-0.7 2.6l-8.6 -2.2zM980 183.6l6.3 -4.2l1.6 2.4l-6.3 4.2zM896.1 250.9l11 -3.1l0.8 2.7l-11 3.1zM907.4 378.4l8.5 3.9l-1.6 3.5l-8.5 -3.9zM798.2 176.7l8.8 -6l1.8 2.7l-8.8 6zM641.6 366.8l10.9 -2.7l0.7 2.8l-10.9 2.7zM820.4 404l8.8 -3.6l1.3 3.2l-8.8 3.6zM674.3 569.3l10.3 -2.5l0.7 2.8l-10.3 2.5zM918.8 140.8l11.8 0.6l-0.1 2.9l-11.8 -0.6zM897.9 306.8l7.1 3.2l-1.2 2.7l-7.1 -3.2zM624.7 161.4l8.1 2.1l-0.7 2.8l-8.1 -2.1zM1019.8 170.3l8.7 -4.6l1.6 3l-8.7 4.6zM579 449l6.9 -2.7l1.3 3.3l-6.9 2.7zM683.4 387.2l11.2 -0.3l0.1 3.7l-11.2 0.3zM875.7 8.4l8.9 -0.1l0 2.6l-8.9 0.1zM662.7 548.6l10.6 4.4l-1.2 3l-10.6 -4.4zM1049.2 151.4l6.9 -5.1l1.6 2.2l-6.9 5.1zM894.7 316.2l7.6 -2.1l0.8 3l-7.6 2.1zM748.7 157.3l4.4 7.6l-2.6 1.5l-4.4 -7.6zM814.6 629.9l9.7 -4.2l1.4 3.3l-9.7 4.2zM1046.8 134.9l3.4 -6.2l3.2 1.7l-3.4 6.2zM921.8 90.2l8.4 1.3l-0.4 2.6l-8.4 -1.3zM793.6 595.7l9.9 2.8l-0.9 3.1l-9.9 -2.8zM716.9 254.1l4.9 -5.5l2.3 2.1l-4.9 5.5zM1009.4 210.1l9.2 -0.1l0 3.1l-9.2 0.1zM887.2 248.2l9.6 0.3l-0.1 2.7l-9.6 -0.3zM1306.4 389.3l10.9 -0.7l0.2 3.4l-10.9 0.7zM1147.8 283l7.8 -6.3l2.3 2.9l-7.8 6.3zM687.8 511.4l5.7 4.1l-2.1 2.9l-5.7 -4.1zM1011.6 405.3l9.2 -1.4l0.4 2.6l-9.2 1.4zM990.9 547.5l8.5 -0l0 2.8l-8.5 0zM953.2 188.6l9.6 1.3l-0.5 3.7l-9.6 -1.3zM956.2 180.3l8.6 -4.6l1.6 3l-8.6 4.6zM867 257.9l5.8 6.7l-2.9 2.5l-5.8 -6.7zM1426.9 704l7.1 -3.3l1.6 3.4l-7.1 3.3zM996.6 213.2l11.7 -2.2l0.6 3l-11.7 2.2zM832.6 190.5l9.8 -0.7l0.2 3l-9.8 0.7zM1351.3 595.9l6.6 4.4l-1.5 2.2l-6.6 -4.4zM1229.5 263.9l9 -0.3l0.1 3l-9 0.3zM1041.1 261.6l7.9 -7.6l1.8 1.9l-7.9 7.6zM845.5 524.8l-0.3 8.8l-3.8 -0.1l0.3 -8.8zM1035.9 136l6.5 -5.3l2.1 2.5l-6.5 5.3zM569.9 678.4l6.2 4.1l-1.8 2.7l-6.2 -4.1zM817.4 550.4l10.8 5.2l-1.7 3.5l-10.8 -5.2zM828 599.1l10.3 -0.8l0.2 2.6l-10.3 0.8zM1062.5 581.9l2.8 -6.4l2.3 1l-2.8 6.4zM972.9 606.1l6.4 -0.6l0.2 2.9l-6.4 0.6zM1127 475.1l4.5 -4.8l2.1 2l-4.5 4.8zM856.6 552.3l9.1 1.5l-0.4 2.7l-9.1 -1.5zM999.7 666.2l6.7 3.4l-1.1 2.2l-6.7 -3.4zM1087 543.9l7.7 -0.6l0.2 2.8l-7.7 0.6zM961 512.8l10.2 -2l0.6 3.1l-10.2 2zM1176.3 545.2l6.5 -2.1l0.8 2.3l-6.5 2.1zM1042.8 674.9l2.8 9.9l-3.3 0.9l-2.8 -9.9zM1047.2 656l8.9 -6.1l1.6 2.4l-8.9 6.1zM1030.8 495.5l4.8 -4l1.8 2.2l-4.8 4zM976.3 645.4l5.9 9.1l-2.1 1.3l-5.9 -9.1zM1028.2 582.9l4.5 -6.7l2.6 1.7l-4.5 6.7zM1017.8 503.8l9.5 -0.3l0.1 2.8l-9.5 0.3zM1224.1 661.3l4.6 4.6l-2 2l-4.6 -4.6zM836 499.5l10.1 2.3l-0.7 3.1l-10.1 -2.3zM964 568.9l9.6 5.1l-1.2 2.3l-9.6 -5.1zM1117.5 559.4l6.1 2.1l-1 3l-6.1 -2.1zM1093.2 605.1l9.8 -0.5l0.1 2.8l-9.8 0.5zM1141.9 563.7l5.9 -1.5l0.7 2.8l-5.9 1.5zM945.4 655.1l5.4 5.4l-2.4 2.4l-5.4 -5.4zM803.4 524.9l9 -0.4l0.1 2.6l-9 0.4zM1048.2 682.3l5.8 7.7l-2.6 2l-5.8 -7.7zM1135.5 547.5l1.9 -7.4l2.4 0.6l-1.9 7.4zM996.5 577.3l10 3.8l-1.1 2.9l-10 -3.8zM731.3 486.7l4.8 -4.2l2.1 2.5l-4.8 4.2zM960.3 535.1l6.2 -5.2l2.2 2.6l-6.2 5.2zM948.4 663.8l7.8 -0.3l0.1 2.6l-7.8 0.3zM1039 620.1l9.6 3.2l-1.1 3.3l-9.6 -3.2zM863.9 490.8l7.2 3.7l-1.1 2.2l-7.2 -3.7zM1057.5 622.9l2 -9.8l3.4 0.7l-2 9.8zM1143.7 545.6l8.1 2.7l-1 2.8l-8.1 -2.7z" fill="#ecdca8" opacity="0.86"/>
<path d="M984.3 363l8.4 -1.4l0.4 2.7l-8.4 1.4zM920.5 230.7l8.8 -1.3l0.5 3.2l-8.8 1.3zM858.6 329.2l4.8 10.4l-2.6 1.2l-4.8 -10.4zM1059.9 285.9l1.6 7l-3.2 0.7l-1.6 -7zM1038.9 376.6l6.7 -6l2.4 2.7l-6.7 6zM1037.1 364.9l8.2 1l-0.4 2.9l-8.2 -1zM872.4 304.9l7 5.8l-1.9 2.3l-7 -5.8zM953.3 281.5l9.1 -5.1l1.4 2.4l-9.1 5.1zM934.2 523.5l10.7 2.2l-0.7 3.5l-10.7 -2.2zM888.6 605.8l7.3 3.4l-1.5 3.1l-7.3 -3.4zM1051.6 378l9.1 -5l1.8 3.3l-9.1 5zM950.2 348l4.5 -9.1l3.4 1.7l-4.5 9.1zM902.4 382.1l6.8 -2.8l1.2 2.9l-6.8 2.8zM978.5 400.6l7.7 -5.2l1.6 2.3l-7.7 5.2zM914.3 261l9.2 -5.6l1.5 2.5l-9.2 5.6zM965 416.6l4.4 -5.7l2.3 1.8l-4.4 5.7zM951.5 251.8l9 2.5l-0.9 3.2l-9 -2.5zM989.5 379.9l11.3 1.8l-0.6 3.8l-11.3 -1.8zM1001.8 536.4l6.4 4.8l-2.1 2.8l-6.4 -4.8zM1004.8 247.7l9.9 2.5l-1 3.8l-9.9 -2.5zM967.3 312.4l7.7 0.2l-0.1 3.8l-7.7 -0.2zM896.2 273.5l9.3 5.6l-1.4 2.3l-9.3 -5.6zM972.2 536.5l8.8 -3.3l1.3 3.4l-8.8 3.3z" fill="#2c2c48" opacity="0.86"/>
<path d="M965.2 31.1l9.2 1.6l-0.5 3.1l-9.2 -1.6zM705 367.2l9.3 0.5l-0.2 3l-9.3 -0.5zM1359.6 607.3l6.9 -1.4l0.6 2.8l-6.9 1.4zM518.2 425.5l8.6 3.8l-1.4 3.1l-8.6 -3.8zM996.2 414.5l11.5 0.8l-0.2 3.5l-11.5 -0.8zM1119.3 502.8l10.2 -1.9l0.7 3.7l-10.2 1.9zM1001.4 424.3l6.5 6.9l-2.5 2.3l-6.5 -6.9zM896.6 173l5.8 5.5l-2 2l-5.8 -5.5zM790.4 442.3l10 5.5l-1.8 3.2l-10 -5.5zM1097.5 457l7.6 -4l1.4 2.7l-7.6 4zM772.5 644.5l3.8 7.2l-3.5 1.8l-3.8 -7.2zM872.5 391.6l7.9 -0.5l0.2 2.9l-7.9 0.5zM1216.5 377.1l10.5 0.5l-0.2 3.6l-10.5 -0.5zM809.6 322.1l10.7 -2.2l0.7 3.2l-10.7 2.2zM1129.2 390l8.7 -1.8l0.5 2.7l-8.7 1.8zM1219.7 630.8l9.6 1.3l-0.4 3.3l-9.6 -1.3zM1251.6 341.4l6.8 -5.4l2.1 2.6l-6.8 5.4zM951.1 49.4l9.3 -1.6l0.5 3.2l-9.3 1.6zM1287.4 274.3l10.3 5.8l-1.7 3l-10.3 -5.8zM1048.1 22.6l9.3 -1.9l0.8 3.7l-9.3 1.9zM783.1 462.6l7.4 -6l2.1 2.5l-7.4 6zM605.2 707.5l6.9 2l-0.8 2.8l-6.9 -2zM923.7 90.3l6.3 3.9l-1.4 2.3l-6.3 -3.9zM1100 252.6l10.7 -1.4l0.5 3.5l-10.7 1.4zM925.8 93.1l6.1 6.6l-2.3 2.1l-6.1 -6.6zM800.2 444.9l7.9 2.7l-1.2 3.5l-7.9 -2.7zM870.5 352.3l9.6 6.7l-1.6 2.4l-9.6 -6.7zM642.6 317l6.4 -4.4l1.8 2.7l-6.4 4.4zM1050.5 594.5l9.9 5.4l-1.6 3l-9.9 -5.4zM870.5 249.3l7.5 6.7l-2.6 2.9l-7.5 -6.7zM1001.1 288.1l8.2 5.4l-1.8 2.7l-8.2 -5.4zM890.3 606.8l8.2 1.3l-0.4 2.7l-8.2 -1.3zM852.7 297.9l10 2.9l-0.8 2.6l-10 -2.9zM946.9 413.9l9.3 -4.7l1.8 3.5l-9.3 4.7zM916.3 592.9l9 -4.6l1.5 3l-9 4.6zM1231 380.5l7.7 -3l1 2.5l-7.7 3zM983.4 250.8l7.3 5l-2 2.9l-7.3 -5zM889.4 355.8l11.1 4l-0.9 2.6l-11.1 -4zM1035 468.8l9.8 -0.8l0.2 2.7l-9.8 0.8zM858.6 83.2l8.8 7.7l-2.5 2.9l-8.8 -7.7zM409.6 670.3l7.1 -0.7l0.3 2.7l-7.1 0.7zM974.9 384.1l7.7 -2.6l1 3l-7.7 2.6zM1163.5 335.6l8.9 0.9l-0.3 2.7l-8.9 -0.9zM1208.9 98l7.9 -8.6l2.2 2.1l-7.9 8.6zM1184.4 675.5l9.3 6.6l-2.1 2.9l-9.3 -6.6zM1162.9 572.2l8.8 -2.6l0.9 3.2l-8.8 2.6zM1098 321.9l8.4 -2.9l1.2 3.6l-8.4 2.9zM803.8 564.8l6.6 -5.3l2.2 2.8l-6.6 5.3zM793 188.8l7.8 -0.4l0.2 3.4l-7.8 0.4zM782.6 378.9l6.5 4.2l-1.6 2.5l-6.5 -4.2zM953 255.1l10.4 -1.1l0.3 2.7l-10.4 1.1zM1057.5 186.7l8.8 -3.8l1.2 2.8l-8.8 3.8zM760.8 529.4l10.4 4.8l-1.6 3.5l-10.4 -4.8zM979.6 570.2l7.7 1.3l-0.5 3.2l-7.7 -1.3zM1008.8 224.1l9.9 -2.3l0.8 3.3l-9.9 2.3zM962.9 265.4l5.3 5.9l-2.4 2.2l-5.3 -5.9zM1019.4 627.8l11.1 1.5l-0.4 3.4l-11.1 -1.5zM1289.3 253.6l9.6 -2.2l0.8 3.7l-9.6 2.2zM852.7 445.3l6.3 4.9l-2 2.5l-6.3 -4.9zM1016.8 63.9l8 5.9l-1.5 2.1l-8 -5.9zM728.3 75.2l9.6 4l-1.1 2.6l-9.6 -4zM764 154.1l9.8 2.3l-0.7 3l-9.8 -2.3zM1034.8 165.7l4.6 -7l2.3 1.5l-4.6 7zM1215 222.5l3.6 7.2l-2.6 1.3l-3.6 -7.2zM898.9 483.9l9.4 -4l1 2.5l-9.4 4zM981.2 277l8.4 3.5l-1.4 3.2l-8.4 -3.5zM703.2 555.8l9.7 -2.3l0.7 2.7l-9.7 2.3zM864.8 148.5l10.1 -2.3l0.8 3.7l-10.1 2.3zM660.8 535.5l6.7 8.9l-3 2.2l-6.7 -8.9zM972.3 393.9l8.8 2.8l-1.1 3.6l-8.8 -2.8zM665.2 383.3l9.7 -2.4l0.7 2.9l-9.7 2.4zM924.2 235.6l9.3 -4.7l1.3 2.6l-9.3 4.7zM783.9 309.6l9.5 -2.3l0.8 3.2l-9.5 2.3zM1003.5 354.2l6.9 7.2l-2.6 2.5l-6.9 -7.2zM980.1 133.3l6.8 -3.6l1.6 3.1l-6.8 3.6zM794.8 318.3l7.6 0.6l-0.3 3.4l-7.6 -0.6zM982.6 446.7l6.8 2.2l-1.1 3.6l-6.8 -2.2zM1384.4 565.4l7.2 1.3l-0.5 2.9l-7.2 -1.3zM1185.6 528.7l9.7 -3.5l1 2.8l-9.7 3.5zM581.3 243.5l9.1 6.8l-2.1 2.8l-9.1 -6.8zM727.6 591.2l7.4 2.4l-0.8 2.6l-7.4 -2.4zM979.9 370.1l5.2 5.8l-2.4 2.1l-5.2 -5.8zM715.6 368.1l8.6 -5.6l1.5 2.4l-8.6 5.6zM581.8 455.9l7 -4.5l2 3.2l-7 4.5zM1019.9 234.7l7.4 1.1l-0.5 3.6l-7.4 -1.1zM829.8 382.3l10.4 -1.7l0.4 2.6l-10.4 1.7zM1006 158.6l9.8 1.4l-0.4 2.7l-9.8 -1.4zM503.8 662.1l10.5 1.5l-0.5 3.3l-10.5 -1.5zM866.6 100l5.3 -5.4l2.3 2.3l-5.3 5.4zM1016 238.7l7.4 -0.1l0.1 3.4l-7.4 0.1zM956.7 15.9l10.4 4l-1.2 3.3l-10.4 -4zM902.9 82.3l9.2 6.3l-2.1 3l-9.2 -6.3zM1188.3 149.3l10.7 0.2l-0.1 3.1l-10.7 -0.2zM1180.5 536.9l7.6 -2.1l1 3.5l-7.6 2.1zM814 632.2l9.1 2.6l-1 3.4l-9.1 -2.6zM1091.6 448l7.5 0.4l-0.2 3.1l-7.5 -0.4zM873.1 76.4l7.3 0.8l-0.3 2.7l-7.3 -0.8zM981.2 88l7.7 -0.1l0 3.4l-7.7 0.1zM775.5 68.6l9 5.7l-2.1 3.3l-9 -5.7zM1079.7 79.6l8.8 2.8l-1 3.1l-8.8 -2.8zM750.3 249.4l8.7 3.8l-1.4 3.1l-8.7 -3.8zM888.6 674.8l7.8 4.7l-1.5 2.5l-7.8 -4.7zM711.5 620.4l9.6 5.8l-1.7 2.8l-9.6 -5.8zM901.1 545l6.5 -3.8l1.9 3.2l-6.5 3.8zM993.4 216l6 -4.7l2.2 2.8l-6 4.7zM841.5 220.3l10.6 -0.8l0.2 3l-10.6 0.8zM1243.6 280.3l9.1 -5.4l1.3 2.2l-9.1 5.4zM1060.5 433.6l10.4 0.8l-0.3 3.5l-10.4 -0.8zM770.7 579l7.9 6.6l-2 2.4l-7.9 -6.6zM641 513.9l7.1 1.3l-0.6 3.4l-7.1 -1.3zM1064.1 367.8l9.7 5.6l-1.3 2.3l-9.7 -5.6zM796.8 516.5l4.4 -6.4l2.3 1.6l-4.4 6.4zM865.7 620.3l10.2 5.2l-1.7 3.4l-10.2 -5.2zM935.5 304.6l9.7 4.9l-1.6 3.2l-9.7 -4.9zM1051.1 336.7l6 4l-1.8 2.7l-6 -4zM975.4 7.4l7.9 -1.5l0.6 3l-7.9 1.5zM1232.8 244.9l8.2 2.2l-0.8 2.9l-8.2 -2.2zM876.4 542.2l5.3 7.8l-2.3 1.6l-5.3 -7.8zM892.3 0.6l7.7 3.3l-1.5 3.4l-7.7 -3.3zM1005 293.5l7.2 1.3l-0.6 3.4l-7.2 -1.3zM1223.6 379l7 -6l1.9 2.3l-7 6zM1013.3 460.6l6.3 6l-2.3 2.4l-6.3 -6zM837.3 198.9l10.8 -2.4l0.7 3.1l-10.8 2.4zM1231.3 411.7l8.2 0.4l-0.2 3.9l-8.2 -0.4zM1103.1 222.8l4.7 -8.7l3 1.6l-4.7 8.7zM870 366.3l0.7 7.6l-2.8 0.2l-0.7 -7.6zM1159.5 531l9.3 -1.1l0.4 3.7l-9.3 1.1zM904.7 535.5l5.9 -4.1l2.1 3l-5.9 4.1zM936.6 405.8l9.6 0.9l-0.3 3.4l-9.6 -0.9zM965.6 445.6l9.3 -1.6l0.6 3.6l-9.3 1.6zM1060.9 351.4l7 -0.9l0.5 3.7l-7 0.9zM848.9 233.4l9.5 3.7l-1.3 3.3l-9.5 -3.7zM523.7 252.4l8.4 4.6l-1.8 3.3l-8.4 -4.6zM1003.2 257.6l7.2 -1.8l0.8 3l-7.2 1.8zM431.1 445.6l9.5 -4l1.2 2.7l-9.5 4zM1110.5 370l11.2 3.2l-0.8 3l-11.2 -3.2zM1112.9 255.2l9.2 -3.7l1.3 3.1l-9.2 3.7zM1072.7 388.6l8.4 1.4l-0.4 2.6l-8.4 -1.4zM831.4 462.4l9.6 -2l0.8 3.5l-9.6 2zM855.9 308.8l9 -1.6l0.5 2.9l-9 1.6zM1150.6 232.4l8.9 -2.1l0.9 3.6l-8.9 2.1zM954.3 462.9l10.2 -5.5l1.6 3.1l-10.2 5.5zM1174.5 448.5l5.9 -9.1l2.8 1.8l-5.9 9.1zM823.2 122.8l10.9 -1.5l0.5 3.5l-10.9 1.5zM955.1 562.2l8 1.3l-0.5 3.3l-8 -1.3zM778.8 270.2l8.3 6.3l-2.1 2.7l-8.3 -6.3zM969 305.4l7.9 -2.7l1 3l-7.9 2.7zM1135.6 222l9.8 -2.5l0.8 3.3l-9.8 2.5zM997.8 343.7l6.2 3.3l-1.3 2.4l-6.2 -3.3zM843 546.8l6.7 -2.2l1 3.1l-6.7 2.2zM896.1 400.6l9.6 -5.5l1.9 3.3l-9.6 5.5zM919.7 599l8.9 3.5l-1.1 2.7l-8.9 -3.5zM1003.1 661.6l8.3 -1.4l0.5 3.1l-8.3 1.4zM869.6 250.5l9.6 -2.1l0.6 2.9l-9.6 2.1zM986.5 275l10.9 -2.9l0.9 3.5l-10.9 2.9zM1055.2 592.4l6.6 4.9l-1.9 2.5l-6.6 -4.9zM1152.7 651.2l6.8 7.1l-1.9 1.8l-6.8 -7.1zM1158.2 124.2l6.3 -4l1.8 2.8l-6.3 4zM832 624.5l6 3.6l-1.5 2.5l-6 -3.6zM1146.2 533.2l7.6 3.6l-1.5 3.1l-7.6 -3.6zM1108.4 256.3l7.1 -7.7l2.2 2.1l-7.1 7.7zM982.8 199.8l1.9 8.5l-3.1 0.7l-1.9 -8.5zM1288.9 441.2l9.2 -1.6l0.6 3.6l-9.2 1.6zM900.8 101.3l8.2 1.7l-0.6 3.1l-8.2 -1.7zM729.6 122.6l7.1 3.9l-1.7 3l-7.1 -3.9zM1038 340.6l10.7 1.4l-0.5 3.4l-10.7 -1.4zM1368.7 527.5l5.2 -5.2l2.1 2.1l-5.2 5.2zM575.3 502.9l4.6 5.9l-2.1 1.7l-4.6 -5.9zM944 3.8l8.1 0.8l-0.3 3l-8.1 -0.8zM1044.2 153.9l9.1 -4l1.3 3l-9.1 4zM934.6 130.7l9 5.3l-1.8 3.1l-9 -5.3zM824.2 334.9l8.5 -0.3l0.1 3.8l-8.5 0.3zM861.1 410.8l9.9 -4.4l1.4 3.1l-9.9 4.4zM1008.5 136.5l6.7 -8.1l3 2.5l-6.7 8.1zM940.7 473.9l10.2 5.7l-1.5 2.6l-10.2 -5.7zM923.7 199.5l11.3 1l-0.2 2.6l-11.3 -1zM989.7 315.5l6 8.7l-2.7 1.8l-6 -8.7zM982.9 446.9l9.6 3.8l-1.2 2.9l-9.6 -3.8zM1080.3 572.6l5.1 -6l2.1 1.8l-5.1 6zM1320.4 330.5l7.5 -1l0.4 3l-7.5 1zM908.3 635.4l9.2 0.5l-0.2 3.7l-9.2 -0.5zM843.8 570.5l10.9 0l-0 2.7l-10.9 -0zM937.3 213l11.1 -4.1l1.2 3.3l-11.1 4.1zM1028.6 299.2l2.3 -7.2l3.6 1.1l-2.3 7.2zM1057.7 38.3l8.5 0.8l-0.3 3.3l-8.5 -0.8zM1044.7 58.7l3 10.7l-3.1 0.9l-3 -10.7zM1062.2 17.6l7.2 8.4l-2.3 2l-7.2 -8.4zM1110.8 403.4l9.1 -0.5l0.2 3.8l-9.1 0.5zM1044 588l7.3 0l-0 2.8l-7.3 -0zM940.4 183l9.9 1.4l-0.4 3.1l-9.9 -1.4zM816.9 99.4l8.6 -2.9l1.1 3.2l-8.6 2.9zM1139.6 642.4l8.6 0l-0 3.2l-8.6 -0zM592 472.3l7.9 6.4l-2.1 2.6l-7.9 -6.4zM1121.9 356.2l6.9 -1.9l0.9 3.3l-6.9 1.9zM1115.3 385.4l6.4 7.6l-2.4 2.1l-6.4 -7.6zM1174.9 127.4l8.2 2.9l-1 3l-8.2 -2.9zM699 554.3l4.5 5.9l-2.4 1.8l-4.5 -5.9zM873.7 276.1l9.1 -0.8l0.2 2.7l-9.1 0.8zM588 383.2l10.8 4.5l-1.3 3.1l-10.8 -4.5zM925.3 161.7l11.6 -2.3l0.7 3.6l-11.6 2.3zM1065.9 288.2l7.8 6l-2.3 3l-7.8 -6zM769.5 145.3l10 6.2l-1.5 2.4l-10 -6.2zM959.6 378.1l7.4 4.4l-1.7 2.9l-7.4 -4.4zM856.1 578.2l11.2 -3.6l1 3.1l-11.2 3.6zM896.9 569.9l7.6 3.3l-1.1 2.5l-7.6 -3.3zM1157.5 413.4l7 2.9l-1.5 3.5l-7 -2.9zM1063.5 535.3l6.6 -3.7l1.4 2.5l-6.6 3.7zM1142.8 503.4l7.9 -5.8l1.9 2.6l-7.9 5.8zM1111.8 563.8l7 7.1l-1.8 1.8l-7 -7.1zM1096.4 558.4l9.6 -1.6l0.5 3.2l-9.6 1.6zM921.2 472.2l8 -0.8l0.3 3.2l-8 0.8zM1113.2 475l7.7 -4l1.5 2.9l-7.7 4zM804.9 573.5l7.8 -0.4l0.1 2.5l-7.8 0.4zM992.2 602.4l5.7 3.9l-1.8 2.7l-5.7 -3.9zM955.6 549.4l8.7 0.1l-0 2.4l-8.7 -0.1zM1116.2 522.6l3.1 -10.5l3.1 0.9l-3.1 10.5zM907.1 617.7l6.2 -6.6l2.2 2l-6.2 6.6zM754.2 647.1l6.9 -6.3l1.8 2l-6.9 6.3zM905.3 595.9l4.6 -4.7l2.3 2.3l-4.6 4.7zM1285.2 624.7l6.5 2l-0.7 2.3l-6.5 -2zM1131.1 507.3l6.3 6.1l-2.2 2.3l-6.3 -6.1zM935.4 482.3l6.8 -0.4l0.2 2.9l-6.8 0.4zM1159.9 601l9 2.7l-0.9 3l-9 -2.7zM1054.7 694.7l10.9 -0.6l0.2 3.4l-10.9 0.6zM1067 511.1l8.4 0.1l-0 3.4l-8.4 -0.1zM1205.9 596l7.2 2.4l-0.9 2.6l-7.2 -2.4zM759 659.7l10.7 0l-0 3.3l-10.7 -0zM892.5 608.9l8.7 -2.2l0.7 2.6l-8.7 2.2zM863.4 636.7l6.7 -2.1l1 3.2l-6.7 2.1zM766.1 641.9l8.3 0.7l-0.3 3.5l-8.3 -0.7zM735.7 467.8l9.2 3.4l-1.1 3.1l-9.2 -3.4zM847.6 642.8l6.6 -2.4l1.1 3.1l-6.6 2.4zM900.7 494l7.8 -1.7l0.7 3l-7.8 1.7zM993.4 623.7l6.5 -1.2l0.6 3.4l-6.5 1.2zM1111.5 660.4l7.7 4.2l-1.2 2.2l-7.7 -4.2zM896.3 575.2l6.1 3l-1.5 3.1l-6.1 -3zM1002.1 675.2l9.6 -3.9l1.3 3.2l-9.6 3.9zM884.8 638.8l7.7 -2l0.7 2.8l-7.7 2zM903.6 501.2l4.3 4.5l-1.8 1.8l-4.3 -4.5zM1219.1 675.4l9.2 -0.8l0.2 2.7l-9.2 0.8zM949.3 560.7l10.7 -0.5l0.1 2.5l-10.7 0.5zM1040.4 676.5l7.5 -5.1l1.9 2.8l-7.5 5.1zM1283.5 504.6l9 0l-0 3.3l-9 -0zM859.7 639.9l5 7.8l-2 1.3l-5 -7.8zM1049.6 642.6l6.9 2.8l-1 2.4l-6.9 -2.8zM717.7 611.8l6.2 7.9l-1.9 1.5l-6.2 -7.9zM903.3 531.3l6.9 -4.3l1.5 2.3l-6.9 4.3zM940.7 645.3l8.2 3.8l-1.5 3.2l-8.2 -3.8zM1183.9 652.5l7.2 2l-0.7 2.7l-7.2 -2zM828.3 664.6l8.7 -2l0.7 3.1l-8.7 2zM1055.2 580.8l7.2 5.8l-1.8 2.3l-7.2 -5.8zM1049.6 519.1l7.8 -3.6l1.2 2.6l-7.8 3.6zM930.8 604.9l6.2 -8.8l2.8 2l-6.2 8.8zM1082.8 575.6l3.4 -8l3.3 1.4l-3.4 8zM769.1 539.9l7.9 -2.5l0.9 3l-7.9 2.5zM966 518.9l9 -3.3l1.1 2.9l-9 3.3zM969.6 559.1l6.7 5.3l-2 2.5l-6.7 -5.3zM1008.3 602.7l9 4l-1.4 3.1l-9 -4zM845.5 478.3l8.5 -2l0.8 3.5l-8.5 2zM973.1 493.1l6.4 -0.9l0.5 3.2l-6.4 0.9zM988.6 661.3l9 -5.3l1.4 2.3l-9 5.3zM861.2 537.6l6.9 -8.5l2.1 1.7l-6.9 8.5zM872.7 665l7.2 -1.6l0.7 3.1l-7.2 1.6zM980.2 608.3l9.6 -4.4l1.3 2.9l-9.6 4.4zM1030.6 490.5l5.8 -3.2l1.6 2.9l-5.8 3.2zM948 635.1l11 0l-0 2.7l-11 -0zM844.5 522.4l8.4 3.5l-1 2.3l-8.4 -3.5z" fill="#d4d8f4" opacity="0.86"/>
<g filter="url(#b1)">
<path d="M586 596 C588 578 604 570 622 570 C642 570 654 578 656 598 L664 752 L578 752 Z" fill="#0f0f22"/>
<ellipse cx="624" cy="553" rx="12" ry="15" fill="#a08a90"/>
<path d="M610 548 C607 528 617 520 626 521 C637 522 641 533 638 546 C630 540 618 540 610 548Z" fill="#8a8890"/>
<path d="M610 652 L720 604.5 L723 609.5 L616 660 Z" fill="#b0a4a4"/>
<ellipse cx="614" cy="660" rx="20" ry="10" transform="rotate(-24 614 660)" fill="#4a4258"/>
</g>
<g>
<path d="M950 752 C946 660 956 596 982 588 C1008 584 1018 640 1016 752 Z" fill="#d6d0e2" opacity="0.9"/>
<ellipse cx="984" cy="556" rx="15" ry="19" fill="#c4a898"/>
<path d="M962 600 C954 560 966 532 986 533 C1004 535 1010 560 1002 606 C996 578 974 572 962 600Z" fill="#a88c74"/>
<path d="M1000 590 L1024 520 L1031 488 L1038 490 L1032 524 L1010 598 Z" fill="#d0b4a4"/>
</g>
<g>
<path d="M1134 606 C1134 586 1148 578 1163 578 C1180 578 1194 586 1196 606 L1202 752 L1126 752 Z" fill="#585878"/>
<ellipse cx="1162" cy="553" rx="13" ry="17" fill="#b89c90"/>
<path d="M1148 548 C1146 530 1157 526 1166 527 C1176 528 1180 538 1177 548 C1170 540 1156 540 1148 548Z" fill="#6a5650"/>
<path d="M1168 642 L1257 557 L1261 561 L1176 650 Z" fill="#c8b494"/>
<ellipse cx="1172" cy="650" rx="17" ry="9" transform="rotate(-40 1172 650)" fill="#8a7a70"/>
</g>
<ellipse cx="1470" cy="630" rx="30" ry="46" fill="#6a6080" opacity="0.4" filter="url(#b6)"/>
<ellipse cx="1060" cy="660" rx="46" ry="26" fill="#c0c0d8" opacity="0.25" filter="url(#b4)"/>
<path d="M-10 1131 L-10 710 L2 717 L14 720 L26 718 L38 714 L50 713 L62 716 L74 719 L86 720 L98 716 L110 708 L122 701 L134 699 L146 702 L158 708 L170 713 L182 713 L194 711 L206 710 L218 713 L230 720 L242 726 L254 727 L266 723 L278 716 L290 710 L302 708 L314 710 L326 713 L338 714 L350 711 L362 707 L374 707 L386 713 L398 721 L410 729 L422 731 L434 728 L446 723 L458 720 L470 721 L482 724 L494 725 L506 722 L518 716 L530 710 L542 710 L554 715 L566 723 L578 729 L590 731 L602 729 L614 728 L626 729 L638 734 L650 739 L662 739 L674 734 L686 726 L698 720 L710 719 L722 723 L734 728 L746 730 L758 729 L770 727 L782 728 L794 733 L806 741 L818 747 L830 748 L842 743 L854 736 L866 732 L878 732 L890 734 L902 735 L914 733 L926 728 L938 724 L950 725 L962 731 L974 739 L986 745 L998 746 L1010 742 L1022 738 L1034 738 L1046 740 L1058 742 L1070 741 L1082 735 L1094 727 L1106 721 L1118 721 L1130 726 L1142 732 L1154 735 L1166 734 L1178 732 L1190 731 L1202 734 L1214 740 L1226 743 L1238 742 L1250 735 L1262 726 L1274 720 L1286 720 L1298 722 L1310 725 L1322 724 L1334 720 L1346 716 L1358 718 L1370 723 L1382 731 L1394 736 L1406 735 L1418 729 L1430 723 L1442 720 L1454 721 L1466 723 L1478 722 L1490 717 L1502 710 L1514 705 L1526 706 L1538 713 L1550 720 L1562 724 L1574 723 L1586 720 L1598 718 L1610 719 L1622 723 L1634 725 L1646 723 L1658 715 L1670 707 L1682 702 L1694 703 L1706 707 L1718 712 L1730 713 L1742 711 L1754 708 L1766 710 L1778 715 L1790 722 L1802 726 L1814 724 L1826 717 L1838 710 L1850 706 L1862 707 L1874 709 L1886 710 L1898 707 L1910 702 L1922 699 L1934 702 L1946 710 L1958 718 L1970 722 L1982 720 L1994 716 L2005 1131 Z" fill="#070810"/>
<path d="M725 736 L721 631 L730 631 L740 735 Z" fill="#0c0c20"/>
<ellipse cx="725" cy="625" rx="5.8" ry="7" fill="#0c0c20"/>
<path d="M721 625 L717 615" stroke="#0c0c20" stroke-width="2.6" stroke-linecap="round"/>
<path d="M724 625 L722 613" stroke="#0c0c20" stroke-width="2.6" stroke-linecap="round"/>
<path d="M726 625 L727 612" stroke="#0c0c20" stroke-width="2.6" stroke-linecap="round"/>
<path d="M729 625 L732 614" stroke="#0c0c20" stroke-width="2.6" stroke-linecap="round"/>
<path d="M725 777 L744 665 L754 666 L741 779 Z" fill="#0c0c20"/>
<ellipse cx="750" cy="660" rx="6.3" ry="7.5" fill="#0c0c20"/>
<path d="M745 659 L743 648" stroke="#0c0c20" stroke-width="2.6" stroke-linecap="round"/>
<path d="M748 660 L749 647" stroke="#0c0c20" stroke-width="2.6" stroke-linecap="round"/>
<path d="M751 660 L754 648" stroke="#0c0c20" stroke-width="2.6" stroke-linecap="round"/>
<path d="M754 660 L759 650" stroke="#0c0c20" stroke-width="2.6" stroke-linecap="round"/>
<path d="M781 709 L788 613 L799 613 L800 710 Z" fill="#0c0c20"/>
<ellipse cx="794" cy="607" rx="7.4" ry="8.8" fill="#0c0c20"/>
<path d="M789 607 L785 597" stroke="#0c0c20" stroke-width="2.6" stroke-linecap="round"/>
<path d="M792 607 L791 595" stroke="#0c0c20" stroke-width="2.6" stroke-linecap="round"/>
<path d="M795 607 L797 595" stroke="#0c0c20" stroke-width="2.6" stroke-linecap="round"/>
<path d="M799 607 L802 597" stroke="#0c0c20" stroke-width="2.6" stroke-linecap="round"/>
<path d="M910 721 L900 604 L912 603 L928 719 Z" fill="#0c0c20"/>
<ellipse cx="906" cy="598" rx="7.2" ry="8.7" fill="#0c0c20"/>
<path d="M900 598 L895 588" stroke="#0c0c20" stroke-width="2.6" stroke-linecap="round"/>
<path d="M904 598 L901 586" stroke="#0c0c20" stroke-width="2.6" stroke-linecap="round"/>
<path d="M907 597 L907 585" stroke="#0c0c20" stroke-width="2.6" stroke-linecap="round"/>
<path d="M910 597 L913 586" stroke="#0c0c20" stroke-width="2.6" stroke-linecap="round"/>
<path d="M977 753 L957 624 L968 622 L993 750 Z" fill="#0c0c20"/>
<ellipse cx="961" cy="617" rx="6.4" ry="7.7" fill="#0c0c20"/>
<path d="M957 618 L951 608" stroke="#0c0c20" stroke-width="2.6" stroke-linecap="round"/>
<path d="M960 617 L956 606" stroke="#0c0c20" stroke-width="2.6" stroke-linecap="round"/>
<path d="M963 617 L962 605" stroke="#0c0c20" stroke-width="2.6" stroke-linecap="round"/>
<path d="M966 616 L967 605" stroke="#0c0c20" stroke-width="2.6" stroke-linecap="round"/>
<path d="M977 747 L989 642 L998 643 L991 748 Z" fill="#0c0c20"/>
<ellipse cx="994" cy="637" rx="5.5" ry="6.7" fill="#0c0c20"/>
<path d="M990 636 L987 626" stroke="#0c0c20" stroke-width="2.6" stroke-linecap="round"/>
<path d="M993 636 L992 624" stroke="#0c0c20" stroke-width="2.6" stroke-linecap="round"/>
<path d="M995 637 L997 625" stroke="#0c0c20" stroke-width="2.6" stroke-linecap="round"/>
<path d="M998 637 L1002 627" stroke="#0c0c20" stroke-width="2.6" stroke-linecap="round"/>
<path d="M1093 747 L1088 643 L1097 642 L1108 746 Z" fill="#0c0c20"/>
<ellipse cx="1092" cy="637" rx="5.9" ry="7.1" fill="#0c0c20"/>
<path d="M1088 637 L1083 627" stroke="#0c0c20" stroke-width="2.6" stroke-linecap="round"/>
<path d="M1091 637 L1088 625" stroke="#0c0c20" stroke-width="2.6" stroke-linecap="round"/>
<path d="M1093 636 L1093 624" stroke="#0c0c20" stroke-width="2.6" stroke-linecap="round"/>
<path d="M1096 636 L1098 625" stroke="#0c0c20" stroke-width="2.6" stroke-linecap="round"/>
<path d="M1119 694 L1113 585 L1123 584 L1136 693 Z" fill="#0c0c20"/>
<ellipse cx="1117" cy="578" rx="6.5" ry="7.8" fill="#0c0c20"/>
<path d="M1113 579 L1108 569" stroke="#0c0c20" stroke-width="2.6" stroke-linecap="round"/>
<path d="M1116 578 L1113 567" stroke="#0c0c20" stroke-width="2.6" stroke-linecap="round"/>
<path d="M1119 578 L1118 566" stroke="#0c0c20" stroke-width="2.6" stroke-linecap="round"/>
<path d="M1121 578 L1124 567" stroke="#0c0c20" stroke-width="2.6" stroke-linecap="round"/>
<path d="M1131 706 L1147 580 L1158 581 L1149 708 Z" fill="#0c0c20"/>
<ellipse cx="1153" cy="574" rx="7" ry="8.4" fill="#0c0c20"/>
<path d="M1148 574 L1146 563" stroke="#0c0c20" stroke-width="2.6" stroke-linecap="round"/>
<path d="M1152 574 L1151 562" stroke="#0c0c20" stroke-width="2.6" stroke-linecap="round"/>
<path d="M1155 574 L1157 562" stroke="#0c0c20" stroke-width="2.6" stroke-linecap="round"/>
<path d="M1158 575 L1162 565" stroke="#0c0c20" stroke-width="2.6" stroke-linecap="round"/>
<path d="M1254 732 L1252 616 L1263 615 L1271 731 Z" fill="#0c0c20"/>
<ellipse cx="1257" cy="609" rx="6.4" ry="7.7" fill="#0c0c20"/>
<path d="M1253 609 L1248 599" stroke="#0c0c20" stroke-width="2.6" stroke-linecap="round"/>
<path d="M1256 609 L1254 597" stroke="#0c0c20" stroke-width="2.6" stroke-linecap="round"/>
<path d="M1258 609 L1259 597" stroke="#0c0c20" stroke-width="2.6" stroke-linecap="round"/>
<path d="M1261 609 L1264 599" stroke="#0c0c20" stroke-width="2.6" stroke-linecap="round"/>
<path d="M1288 735 L1298 609 L1310 610 L1307 736 Z" fill="#0c0c20"/>
<ellipse cx="1304" cy="604" rx="7.2" ry="8.7" fill="#0c0c20"/>
<path d="M1299 603 L1296 593" stroke="#0c0c20" stroke-width="2.6" stroke-linecap="round"/>
<path d="M1303 603 L1302 591" stroke="#0c0c20" stroke-width="2.6" stroke-linecap="round"/>
<path d="M1306 604 L1307 591" stroke="#0c0c20" stroke-width="2.6" stroke-linecap="round"/>
<path d="M1309 604 L1313 593" stroke="#0c0c20" stroke-width="2.6" stroke-linecap="round"/>
<path d="M1016 759 L1035 639 L1045 641 L1032 761 Z" fill="#0c0c20"/>
<ellipse cx="1041" cy="634" rx="6.6" ry="8" fill="#0c0c20"/>
<path d="M1036 633 L1034 623" stroke="#0c0c20" stroke-width="2.6" stroke-linecap="round"/>
<path d="M1039 634 L1039 622" stroke="#0c0c20" stroke-width="2.6" stroke-linecap="round"/>
<path d="M1042 634 L1045 622" stroke="#0c0c20" stroke-width="2.6" stroke-linecap="round"/>
<path d="M1045 635 L1050 625" stroke="#0c0c20" stroke-width="2.6" stroke-linecap="round"/>
<path d="M868 753 L855 651 L865 649 L884 751 Z" fill="#0c0c20"/>
<ellipse cx="859" cy="644" rx="5.9" ry="7.1" fill="#0c0c20"/>
<path d="M855 645 L850 635" stroke="#0c0c20" stroke-width="2.6" stroke-linecap="round"/>
<path d="M858 644 L854 633" stroke="#0c0c20" stroke-width="2.6" stroke-linecap="round"/>
<path d="M860 644 L859 632" stroke="#0c0c20" stroke-width="2.6" stroke-linecap="round"/>
<path d="M863 643 L865 633" stroke="#0c0c20" stroke-width="2.6" stroke-linecap="round"/>
<path d="M1187 765 L1210 639 L1220 641 L1204 767 Z" fill="#0c0c20"/>
<ellipse cx="1216" cy="634" rx="6.8" ry="8.1" fill="#0c0c20"/>
<path d="M1211 633 L1209 623" stroke="#0c0c20" stroke-width="2.6" stroke-linecap="round"/>
<path d="M1214 634 L1215 622" stroke="#0c0c20" stroke-width="2.6" stroke-linecap="round"/>
<path d="M1217 634 L1220 622" stroke="#0c0c20" stroke-width="2.6" stroke-linecap="round"/>
<path d="M1220 635 L1225 625" stroke="#0c0c20" stroke-width="2.6" stroke-linecap="round"/>
<path d="M1354 758 L1345 651 L1355 649 L1372 756 Z" fill="#0c0c20"/>
<ellipse cx="1349" cy="644" rx="6.9" ry="8.2" fill="#0c0c20"/>
<path d="M1344 645 L1339 635" stroke="#0c0c20" stroke-width="2.6" stroke-linecap="round"/>
<path d="M1348 644 L1345 633" stroke="#0c0c20" stroke-width="2.6" stroke-linecap="round"/>
<path d="M1351 644 L1350 632" stroke="#0c0c20" stroke-width="2.6" stroke-linecap="round"/>
<path d="M1354 644 L1356 633" stroke="#0c0c20" stroke-width="2.6" stroke-linecap="round"/>
<g filter="url(#b1)">
<ellipse cx="-15" cy="699" rx="22" ry="26" fill="#3448b8" opacity="0.02"/>
<ellipse cx="-15" cy="701" rx="20" ry="24" fill="#0b0c1c"/>
<path d="M-60 770 C-58 724 -34 721 -15 721 C3 721 27 724 29 770 Z" fill="#0b0c1c"/>
<ellipse cx="53" cy="694" rx="18" ry="20" fill="#3448b8" opacity="0.02"/>
<ellipse cx="53" cy="697" rx="16" ry="18" fill="#0b0c1c"/>
<path d="M18 751 C20 715 39 713 53 713 C67 713 86 715 88 751 Z" fill="#0b0c1c"/>
<ellipse cx="92" cy="706" rx="20" ry="22" fill="#3448b8" opacity="0.03"/>
<ellipse cx="92" cy="709" rx="18" ry="20" fill="#0b0c1c"/>
<path d="M52 770 C54 729 76 727 92 727 C108 727 129 729 131 770 Z" fill="#0b0c1c"/>
<ellipse cx="149" cy="706" rx="22" ry="25" fill="#3448b8" opacity="0.05"/>
<ellipse cx="149" cy="708" rx="20" ry="23" fill="#0b0c1c"/>
<path d="M104 778 C106 732 131 729 149 729 C167 729 192 732 194 778 Z" fill="#0b0c1c"/>
<ellipse cx="198" cy="706" rx="20" ry="22" fill="#3448b8" opacity="0.07"/>
<ellipse cx="198" cy="709" rx="18" ry="20" fill="#0b0c1c"/>
<path d="M158 771 C160 730 182 727 198 727 C215 727 237 730 239 771 Z" fill="#0b0c1c"/>
<ellipse cx="234" cy="708" rx="17" ry="20" fill="#3448b8" opacity="0.08"/>
<ellipse cx="234" cy="711" rx="15" ry="18" fill="#0b0c1c"/>
<path d="M202 761 C203 728 221 726 234 726 C248 726 266 728 267 761 Z" fill="#0b0c1c"/>
<ellipse cx="294" cy="698" rx="19" ry="20" fill="#3448b8" opacity="0.1"/>
<ellipse cx="294" cy="701" rx="17" ry="18" fill="#0b0c1c"/>
<path d="M258 757 C259 720 279 717 294 717 C309 717 329 720 331 757 Z" fill="#0b0c1c"/>
<ellipse cx="344" cy="709" rx="18" ry="20" fill="#3448b8" opacity="0.12"/>
<ellipse cx="344" cy="711" rx="16" ry="18" fill="#0b0c1c"/>
<path d="M308 766 C310 730 329 727 344 727 C358 727 377 730 379 766 Z" fill="#0b0c1c"/>
<ellipse cx="384" cy="703" rx="21" ry="24" fill="#3448b8" opacity="0.13"/>
<ellipse cx="384" cy="706" rx="19" ry="22" fill="#0b0c1c"/>
<path d="M341 772 C343 728 366 725 384 725 C401 725 424 728 426 772 Z" fill="#0b0c1c"/>
<ellipse cx="451" cy="700" rx="21" ry="22" fill="#3448b8" opacity="0.16"/>
<ellipse cx="451" cy="702" rx="19" ry="20" fill="#0b0c1c"/>
<path d="M410 766 C412 724 434 721 451 721 C468 721 490 724 492 766 Z" fill="#0b0c1c"/>
<ellipse cx="486" cy="712" rx="22" ry="26" fill="#3448b8" opacity="0.17"/>
<ellipse cx="486" cy="714" rx="20" ry="24" fill="#0b0c1c"/>
<path d="M442 782 C444 737 468 734 486 734 C504 734 528 737 530 782 Z" fill="#0b0c1c"/>
<ellipse cx="544" cy="717" rx="18" ry="21" fill="#3448b8" opacity="0.19"/>
<ellipse cx="544" cy="719" rx="16" ry="19" fill="#0b0c1c"/>
<path d="M509 774 C510 738 529 735 544 735 C558 735 577 738 579 774 Z" fill="#0b0c1c"/>
<ellipse cx="593" cy="719" rx="20" ry="23" fill="#3448b8" opacity="0.21"/>
<ellipse cx="593" cy="721" rx="18" ry="21" fill="#0b0c1c"/>
<path d="M553 782 C555 742 577 739 593 739 C609 739 630 742 632 782 Z" fill="#0b0c1c"/>
<ellipse cx="648" cy="707" rx="20" ry="25" fill="#3448b8" opacity="0.23"/>
<ellipse cx="648" cy="710" rx="18" ry="23" fill="#0b0c1c"/>
<path d="M608 772 C610 731 632 728 648 728 C665 728 687 731 689 772 Z" fill="#0b0c1c"/>
<ellipse cx="703" cy="714" rx="20" ry="23" fill="#3448b8" opacity="0.25"/>
<ellipse cx="703" cy="717" rx="18" ry="21" fill="#0b0c1c"/>
<path d="M664 776 C666 737 687 734 703 734 C718 734 739 737 741 776 Z" fill="#0b0c1c"/>
<ellipse cx="743" cy="713" rx="18" ry="20" fill="#3448b8" opacity="0.26"/>
<ellipse cx="743" cy="715" rx="16" ry="18" fill="#0b0c1c"/>
<path d="M706 771 C708 734 728 732 743 732 C757 732 777 734 779 771 Z" fill="#0b0c1c"/>
<ellipse cx="787" cy="719" rx="19" ry="21" fill="#3448b8" opacity="0.28"/>
<ellipse cx="787" cy="722" rx="17" ry="19" fill="#0b0c1c"/>
<path d="M749 780 C751 741 771 739 787 739 C802 739 823 741 825 780 Z" fill="#0b0c1c"/>
<ellipse cx="838" cy="721" rx="17" ry="19" fill="#3448b8" opacity="0.3"/>
<ellipse cx="838" cy="723" rx="15" ry="17" fill="#0b0c1c"/>
<path d="M806 773 C807 740 825 738 838 738 C852 738 869 740 871 773 Z" fill="#0b0c1c"/>
<ellipse cx="893" cy="717" rx="19" ry="21" fill="#3448b8" opacity="0.32"/>
<ellipse cx="893" cy="719" rx="17" ry="19" fill="#0b0c1c"/>
<path d="M855 778 C857 739 878 736 893 736 C909 736 929 739 931 778 Z" fill="#0b0c1c"/>
<ellipse cx="948" cy="717" rx="17" ry="20" fill="#3448b8" opacity="0.34"/>
<ellipse cx="948" cy="719" rx="15" ry="18" fill="#0b0c1c"/>
<path d="M915 771 C916 737 935 735 948 735 C962 735 980 737 982 771 Z" fill="#0b0c1c"/>
<ellipse cx="1000" cy="713" rx="21" ry="23" fill="#3448b8" opacity="0.35"/>
<ellipse cx="1000" cy="715" rx="19" ry="21" fill="#0b0c1c"/>
<path d="M959 778 C961 737 983 734 1000 734 C1017 734 1039 737 1041 778 Z" fill="#0b0c1c"/>
<ellipse cx="1045" cy="723" rx="21" ry="25" fill="#3448b8" opacity="0.37"/>
<ellipse cx="1045" cy="726" rx="19" ry="23" fill="#0b0c1c"/>
<path d="M1004 789 C1006 747 1028 744 1045 744 C1062 744 1084 747 1086 789 Z" fill="#0b0c1c"/>
<ellipse cx="1086" cy="724" rx="20" ry="22" fill="#3448b8" opacity="0.36"/>
<ellipse cx="1086" cy="727" rx="18" ry="20" fill="#0b0c1c"/>
<path d="M1046 788 C1048 747 1070 745 1086 745 C1102 745 1123 747 1125 788 Z" fill="#0b0c1c"/>
<ellipse cx="1140" cy="718" rx="18" ry="19" fill="#3448b8" opacity="0.34"/>
<ellipse cx="1140" cy="721" rx="16" ry="17" fill="#0b0c1c"/>
<path d="M1105 775 C1106 739 1126 737 1140 737 C1154 737 1174 739 1175 775 Z" fill="#0b0c1c"/>
<ellipse cx="1193" cy="723" rx="18" ry="20" fill="#3448b8" opacity="0.32"/>
<ellipse cx="1193" cy="725" rx="16" ry="18" fill="#0b0c1c"/>
<path d="M1158 778 C1160 743 1179 741 1193 741 C1207 741 1226 743 1227 778 Z" fill="#0b0c1c"/>
<ellipse cx="1244" cy="720" rx="22" ry="24" fill="#3448b8" opacity="0.3"/>
<ellipse cx="1244" cy="723" rx="20" ry="22" fill="#0b0c1c"/>
<path d="M1201 789 C1203 745 1226 742 1244 742 C1261 742 1285 745 1287 789 Z" fill="#0b0c1c"/>
<ellipse cx="1287" cy="707" rx="17" ry="19" fill="#3448b8" opacity="0.29"/>
<ellipse cx="1287" cy="709" rx="15" ry="17" fill="#0b0c1c"/>
<path d="M1254 760 C1255 727 1273 724 1287 724 C1300 724 1318 727 1320 760 Z" fill="#0b0c1c"/>
<ellipse cx="1348" cy="713" rx="18" ry="23" fill="#3448b8" opacity="0.26"/>
<ellipse cx="1348" cy="715" rx="16" ry="21" fill="#0b0c1c"/>
<path d="M1312 771 C1314 734 1334 732 1348 732 C1363 732 1383 734 1385 771 Z" fill="#0b0c1c"/>
<ellipse cx="1394" cy="707" rx="22" ry="28" fill="#3448b8" opacity="0.25"/>
<ellipse cx="1394" cy="709" rx="20" ry="26" fill="#0b0c1c"/>
<path d="M1350 779 C1352 733 1376 730 1394 730 C1413 730 1437 733 1439 779 Z" fill="#0b0c1c"/>
<ellipse cx="1449" cy="704" rx="18" ry="20" fill="#3448b8" opacity="0.23"/>
<ellipse cx="1449" cy="707" rx="16" ry="18" fill="#0b0c1c"/>
<path d="M1412 763 C1414 726 1434 723 1449 723 C1463 723 1483 726 1485 763 Z" fill="#0b0c1c"/>
<ellipse cx="1498" cy="708" rx="19" ry="21" fill="#3448b8" opacity="0.21"/>
<ellipse cx="1498" cy="710" rx="17" ry="19" fill="#0b0c1c"/>
<path d="M1460 769 C1462 730 1482 728 1498 728 C1513 728 1534 730 1536 769 Z" fill="#0b0c1c"/>
<ellipse cx="1541" cy="704" rx="19" ry="23" fill="#3448b8" opacity="0.2"/>
<ellipse cx="1541" cy="706" rx="17" ry="21" fill="#0b0c1c"/>
<path d="M1504 764 C1506 726 1526 723 1541 723 C1557 723 1577 726 1579 764 Z" fill="#0b0c1c"/>
<ellipse cx="1591" cy="703" rx="18" ry="19" fill="#3448b8" opacity="0.18"/>
<ellipse cx="1591" cy="705" rx="16" ry="17" fill="#0b0c1c"/>
<path d="M1557 759 C1558 724 1577 721 1591 721 C1606 721 1625 724 1626 759 Z" fill="#0b0c1c"/>
<ellipse cx="1639" cy="706" rx="22" ry="26" fill="#3448b8" opacity="0.16"/>
<ellipse cx="1639" cy="708" rx="20" ry="24" fill="#0b0c1c"/>
<path d="M1595 776 C1597 731 1621 728 1639 728 C1658 728 1682 731 1684 776 Z" fill="#0b0c1c"/>
<ellipse cx="1697" cy="705" rx="19" ry="23" fill="#3448b8" opacity="0.14"/>
<ellipse cx="1697" cy="707" rx="17" ry="21" fill="#0b0c1c"/>
<path d="M1659 766 C1661 727 1682 725 1697 725 C1713 725 1734 727 1735 766 Z" fill="#0b0c1c"/>
<ellipse cx="1747" cy="697" rx="20" ry="25" fill="#3448b8" opacity="0.12"/>
<ellipse cx="1747" cy="699" rx="18" ry="23" fill="#0b0c1c"/>
<path d="M1706 762 C1708 720 1730 718 1747 718 C1763 718 1785 720 1787 762 Z" fill="#0b0c1c"/>
<ellipse cx="1792" cy="696" rx="22" ry="26" fill="#3448b8" opacity="0.1"/>
<ellipse cx="1792" cy="699" rx="20" ry="24" fill="#0b0c1c"/>
<path d="M1748 766 C1750 721 1774 718 1792 718 C1810 718 1833 721 1835 766 Z" fill="#0b0c1c"/>
<ellipse cx="1845" cy="707" rx="20" ry="24" fill="#3448b8" opacity="0.09"/>
<ellipse cx="1845" cy="709" rx="18" ry="22" fill="#0b0c1c"/>
<path d="M1805 770 C1807 730 1829 727 1845 727 C1861 727 1883 730 1885 770 Z" fill="#0b0c1c"/>
<ellipse cx="1898" cy="704" rx="21" ry="24" fill="#3448b8" opacity="0.07"/>
<ellipse cx="1898" cy="707" rx="19" ry="22" fill="#0b0c1c"/>
<path d="M1855 773 C1857 729 1880 726 1898 726 C1915 726 1939 729 1941 773 Z" fill="#0b0c1c"/>
<ellipse cx="1947" cy="701" rx="21" ry="23" fill="#3448b8" opacity="0.05"/>
<ellipse cx="1947" cy="704" rx="19" ry="21" fill="#0b0c1c"/>
<path d="M1906 767 C1908 725 1930 722 1947 722 C1964 722 1986 725 1988 767 Z" fill="#0b0c1c"/>
<ellipse cx="1993" cy="697" rx="22" ry="24" fill="#3448b8" opacity="0.03"/>
<ellipse cx="1993" cy="699" rx="20" ry="22" fill="#0b0c1c"/>
<path d="M1949 767 C1951 722 1975 719 1993 719 C2011 719 2035 722 2037 767 Z" fill="#0b0c1c"/>
<ellipse cx="2036" cy="705" rx="18" ry="21" fill="#3448b8" opacity="0.02"/>
<ellipse cx="2036" cy="707" rx="16" ry="19" fill="#0b0c1c"/>
<path d="M2001 762 C2003 726 2022 723 2036 723 C2050 723 2069 726 2071 762 Z" fill="#0b0c1c"/>
</g>
<g filter="url(#b1)">
<ellipse cx="-67" cy="737" rx="29" ry="34" fill="#3448b8" opacity="0.02"/>
<ellipse cx="-67" cy="740" rx="27" ry="32" fill="#090a18"/>
<path d="M-127 832 C-124 771 -92 767 -67 767 C-43 767 -10 771 -8 832 Z" fill="#090a18"/>
<ellipse cx="21" cy="732" rx="29" ry="33" fill="#3448b8" opacity="0.02"/>
<ellipse cx="21" cy="734" rx="27" ry="31" fill="#090a18"/>
<path d="M-39 827 C-36 766 -4 762 21 762 C45 762 78 766 80 827 Z" fill="#090a18"/>
<ellipse cx="83" cy="724" rx="30" ry="36" fill="#3448b8" opacity="0.02"/>
<ellipse cx="83" cy="727" rx="28" ry="34" fill="#090a18"/>
<path d="M22 821 C25 759 58 754 83 754 C108 754 141 759 144 821 Z" fill="#090a18"/>
<ellipse cx="148" cy="728" rx="30" ry="34" fill="#3448b8" opacity="0.05"/>
<ellipse cx="148" cy="730" rx="28" ry="32" fill="#090a18"/>
<path d="M87 825 C90 762 123 758 148 758 C173 758 206 762 209 825 Z" fill="#090a18"/>
<ellipse cx="217" cy="729" rx="30" ry="37" fill="#3448b8" opacity="0.07"/>
<ellipse cx="217" cy="731" rx="28" ry="35" fill="#090a18"/>
<path d="M155 826 C158 763 192 759 217 759 C242 759 276 763 278 826 Z" fill="#090a18"/>
<ellipse cx="280" cy="734" rx="26" ry="29" fill="#3448b8" opacity="0.09"/>
<ellipse cx="280" cy="737" rx="24" ry="27" fill="#090a18"/>
<path d="M227 820 C229 765 258 761 280 761 C302 761 331 765 334 820 Z" fill="#090a18"/>
<ellipse cx="353" cy="743" rx="30" ry="37" fill="#3448b8" opacity="0.12"/>
<ellipse cx="353" cy="746" rx="28" ry="35" fill="#090a18"/>
<path d="M292 840 C295 778 328 774 353 774 C378 774 411 778 414 840 Z" fill="#090a18"/>
<ellipse cx="420" cy="726" rx="28" ry="35" fill="#3448b8" opacity="0.15"/>
<ellipse cx="420" cy="728" rx="26" ry="33" fill="#090a18"/>
<path d="M363 816 C366 758 396 754 420 754 C443 754 474 758 476 816 Z" fill="#090a18"/>
<ellipse cx="488" cy="732" rx="29" ry="32" fill="#3448b8" opacity="0.17"/>
<ellipse cx="488" cy="735" rx="27" ry="30" fill="#090a18"/>
<path d="M429 827 C431 766 464 762 488 762 C513 762 546 766 548 827 Z" fill="#090a18"/>
<ellipse cx="567" cy="736" rx="23" ry="27" fill="#3448b8" opacity="0.2"/>
<ellipse cx="567" cy="738" rx="21" ry="25" fill="#090a18"/>
<path d="M520 811 C522 763 547 759 567 759 C586 759 611 763 613 811 Z" fill="#090a18"/>
<ellipse cx="642" cy="738" rx="28" ry="32" fill="#3448b8" opacity="0.23"/>
<ellipse cx="642" cy="741" rx="26" ry="30" fill="#090a18"/>
<path d="M585 828 C588 770 619 766 642 766 C665 766 696 770 699 828 Z" fill="#090a18"/>
<ellipse cx="724" cy="743" rx="30" ry="37" fill="#3448b8" opacity="0.25"/>
<ellipse cx="724" cy="746" rx="28" ry="35" fill="#090a18"/>
<path d="M662 842 C665 778 698 774 724 774 C749 774 783 778 786 842 Z" fill="#090a18"/>
<ellipse cx="768" cy="756" rx="28" ry="31" fill="#3448b8" opacity="0.27"/>
<ellipse cx="768" cy="759" rx="26" ry="29" fill="#090a18"/>
<path d="M711 847 C713 788 744 784 768 784 C791 784 822 788 825 847 Z" fill="#090a18"/>
<ellipse cx="851" cy="749" rx="26" ry="32" fill="#3448b8" opacity="0.3"/>
<ellipse cx="851" cy="752" rx="24" ry="30" fill="#090a18"/>
<path d="M798 834 C800 779 829 776 851 776 C873 776 902 779 904 834 Z" fill="#090a18"/>
<ellipse cx="909" cy="746" rx="29" ry="33" fill="#3448b8" opacity="0.32"/>
<ellipse cx="909" cy="749" rx="27" ry="31" fill="#090a18"/>
<path d="M850 841 C852 780 885 776 909 776 C934 776 966 780 969 841 Z" fill="#090a18"/>
<ellipse cx="986" cy="754" rx="27" ry="32" fill="#3448b8" opacity="0.35"/>
<ellipse cx="986" cy="757" rx="25" ry="30" fill="#090a18"/>
<path d="M930 843 C933 786 964 782 986 782 C1009 782 1040 786 1042 843 Z" fill="#090a18"/>
<ellipse cx="1061" cy="740" rx="25" ry="28" fill="#3448b8" opacity="0.37"/>
<ellipse cx="1061" cy="743" rx="23" ry="26" fill="#090a18"/>
<path d="M1011 820 C1013 769 1040 765 1061 765 C1081 765 1108 769 1111 820 Z" fill="#090a18"/>
<ellipse cx="1118" cy="744" rx="29" ry="34" fill="#3448b8" opacity="0.35"/>
<ellipse cx="1118" cy="746" rx="27" ry="32" fill="#090a18"/>
<path d="M1059 837 C1062 777 1094 773 1118 773 C1142 773 1174 777 1177 837 Z" fill="#090a18"/>
<ellipse cx="1198" cy="740" rx="24" ry="27" fill="#3448b8" opacity="0.32"/>
<ellipse cx="1198" cy="742" rx="22" ry="25" fill="#090a18"/>
<path d="M1150 816 C1153 767 1179 764 1198 764 C1218 764 1244 767 1246 816 Z" fill="#090a18"/>
<ellipse cx="1257" cy="741" rx="29" ry="34" fill="#3448b8" opacity="0.3"/>
<ellipse cx="1257" cy="743" rx="27" ry="32" fill="#090a18"/>
<path d="M1199 834 C1201 774 1233 770 1257 770 C1281 770 1313 774 1316 834 Z" fill="#090a18"/>
<ellipse cx="1328" cy="745" rx="31" ry="33" fill="#3448b8" opacity="0.27"/>
<ellipse cx="1328" cy="747" rx="29" ry="31" fill="#090a18"/>
<path d="M1265 845 C1268 780 1302 776 1328 776 C1354 776 1388 780 1391 845 Z" fill="#090a18"/>
<ellipse cx="1399" cy="732" rx="28" ry="30" fill="#3448b8" opacity="0.25"/>
<ellipse cx="1399" cy="734" rx="26" ry="28" fill="#090a18"/>
<path d="M1343 821 C1345 764 1376 760 1399 760 C1422 760 1453 764 1455 821 Z" fill="#090a18"/>
<ellipse cx="1485" cy="733" rx="30" ry="35" fill="#3448b8" opacity="0.22"/>
<ellipse cx="1485" cy="735" rx="28" ry="33" fill="#090a18"/>
<path d="M1423 830 C1426 767 1460 763 1485 763 C1510 763 1543 767 1546 830 Z" fill="#090a18"/>
<ellipse cx="1563" cy="730" rx="31" ry="37" fill="#3448b8" opacity="0.19"/>
<ellipse cx="1563" cy="733" rx="29" ry="35" fill="#090a18"/>
<path d="M1500 830 C1503 766 1537 761 1563 761 C1589 761 1623 766 1626 830 Z" fill="#090a18"/>
<ellipse cx="1616" cy="741" rx="24" ry="28" fill="#3448b8" opacity="0.17"/>
<ellipse cx="1616" cy="744" rx="22" ry="26" fill="#090a18"/>
<path d="M1568 817 C1571 769 1596 765 1616 765 C1635 765 1661 769 1663 817 Z" fill="#090a18"/>
<ellipse cx="1679" cy="737" rx="24" ry="27" fill="#3448b8" opacity="0.15"/>
<ellipse cx="1679" cy="739" rx="22" ry="25" fill="#090a18"/>
<path d="M1630 815 C1632 765 1659 761 1679 761 C1698 761 1725 765 1727 815 Z" fill="#090a18"/>
<ellipse cx="1750" cy="737" rx="27" ry="32" fill="#3448b8" opacity="0.12"/>
<ellipse cx="1750" cy="740" rx="25" ry="30" fill="#090a18"/>
<path d="M1694 826 C1696 769 1727 765 1750 765 C1772 765 1803 769 1805 826 Z" fill="#090a18"/>
<ellipse cx="1832" cy="735" rx="26" ry="29" fill="#3448b8" opacity="0.09"/>
<ellipse cx="1832" cy="738" rx="24" ry="27" fill="#090a18"/>
<path d="M1779 819 C1782 765 1810 762 1832 762 C1853 762 1882 765 1884 819 Z" fill="#090a18"/>
<ellipse cx="1913" cy="726" rx="25" ry="30" fill="#3448b8" opacity="0.06"/>
<ellipse cx="1913" cy="728" rx="23" ry="28" fill="#090a18"/>
<path d="M1862 808 C1864 755 1892 752 1913 752 C1934 752 1962 755 1965 808 Z" fill="#090a18"/>
<ellipse cx="1978" cy="721" rx="26" ry="31" fill="#3448b8" opacity="0.04"/>
<ellipse cx="1978" cy="723" rx="24" ry="29" fill="#090a18"/>
<path d="M1926 804 C1929 750 1957 747 1978 747 C2000 747 2028 750 2030 804 Z" fill="#090a18"/>
<ellipse cx="2032" cy="718" rx="25" ry="28" fill="#3448b8" opacity="0.02"/>
<ellipse cx="2032" cy="721" rx="23" ry="26" fill="#090a18"/>
<path d="M1980 800 C1983 748 2011 744 2032 744 C2053 744 2081 748 2083 800 Z" fill="#090a18"/>
</g>
<g filter="url(#b2)">
<ellipse cx="-24" cy="763" rx="40" ry="46" fill="#1f58a8" opacity="0.04"/>
<ellipse cx="-24" cy="765" rx="38" ry="44" fill="#080914"/>
<path d="M-109 896 C-105 809 -59 804 -24 804 C10 804 56 809 60 896 Z" fill="#080914"/>
<ellipse cx="87" cy="764" rx="33" ry="38" fill="#1f58a8" opacity="0.04"/>
<ellipse cx="87" cy="767" rx="31" ry="36" fill="#080914"/>
<path d="M19 871 C22 802 59 797 87 797 C114 797 151 802 154 871 Z" fill="#080914"/>
<ellipse cx="187" cy="787" rx="44" ry="50" fill="#1f58a8" opacity="0.1"/>
<ellipse cx="187" cy="789" rx="42" ry="48" fill="#080914"/>
<path d="M94 933 C98 838 149 832 187 832 C225 832 276 838 281 933 Z" fill="#080914"/>
<ellipse cx="287" cy="767" rx="41" ry="50" fill="#1f58a8" opacity="0.16"/>
<ellipse cx="287" cy="769" rx="39" ry="48" fill="#080914"/>
<path d="M201 903 C205 815 252 809 287 809 C323 809 370 815 374 903 Z" fill="#080914"/>
<ellipse cx="354" cy="769" rx="42" ry="51" fill="#1f58a8" opacity="0.2"/>
<ellipse cx="354" cy="772" rx="40" ry="49" fill="#080914"/>
<path d="M266 908 C270 818 318 812 354 812 C390 812 438 818 442 908 Z" fill="#080914"/>
<ellipse cx="470" cy="798" rx="35" ry="38" fill="#1f58a8" opacity="0.27"/>
<ellipse cx="470" cy="800" rx="33" ry="36" fill="#080914"/>
<path d="M397 913 C400 839 440 834 470 834 C500 834 540 839 543 913 Z" fill="#080914"/>
<ellipse cx="579" cy="780" rx="35" ry="43" fill="#1f58a8" opacity="0.34"/>
<ellipse cx="579" cy="783" rx="33" ry="41" fill="#080914"/>
<path d="M507 894 C510 820 550 815 579 815 C609 815 648 820 651 894 Z" fill="#080914"/>
<ellipse cx="657" cy="782" rx="39" ry="47" fill="#1f58a8" opacity="0.38"/>
<ellipse cx="657" cy="785" rx="37" ry="45" fill="#080914"/>
<path d="M575 911 C579 827 623 822 657 822 C690 822 735 827 739 911 Z" fill="#080914"/>
<ellipse cx="746" cy="807" rx="34" ry="37" fill="#1f58a8" opacity="0.44"/>
<ellipse cx="746" cy="810" rx="32" ry="35" fill="#080914"/>
<path d="M677 917 C680 846 718 841 746 841 C775 841 813 846 816 917 Z" fill="#080914"/>
<ellipse cx="865" cy="783" rx="38" ry="43" fill="#1f58a8" opacity="0.51"/>
<ellipse cx="865" cy="786" rx="36" ry="41" fill="#080914"/>
<path d="M785 909 C789 827 832 822 865 822 C897 822 940 827 944 909 Z" fill="#080914"/>
<ellipse cx="960" cy="786" rx="35" ry="44" fill="#1f58a8" opacity="0.57"/>
<ellipse cx="960" cy="789" rx="33" ry="42" fill="#080914"/>
<path d="M886 902 C890 827 930 822 960 822 C990 822 1030 827 1033 902 Z" fill="#080914"/>
<ellipse cx="1061" cy="798" rx="41" ry="46" fill="#1f58a8" opacity="0.61"/>
<ellipse cx="1061" cy="800" rx="39" ry="44" fill="#080914"/>
<path d="M976 933 C980 845 1026 839 1061 839 C1096 839 1143 845 1147 933 Z" fill="#080914"/>
<ellipse cx="1149" cy="801" rx="34" ry="39" fill="#1f58a8" opacity="0.56"/>
<ellipse cx="1149" cy="803" rx="32" ry="37" fill="#080914"/>
<path d="M1080 911 C1083 840 1121 835 1149 835 C1177 835 1215 840 1218 911 Z" fill="#080914"/>
<ellipse cx="1235" cy="787" rx="40" ry="51" fill="#1f58a8" opacity="0.51"/>
<ellipse cx="1235" cy="789" rx="38" ry="49" fill="#080914"/>
<path d="M1151 919 C1155 833 1201 827 1235 827 C1269 827 1315 833 1319 919 Z" fill="#080914"/>
<ellipse cx="1365" cy="798" rx="33" ry="40" fill="#1f58a8" opacity="0.43"/>
<ellipse cx="1365" cy="800" rx="31" ry="38" fill="#080914"/>
<path d="M1297 905 C1300 836 1337 831 1365 831 C1393 831 1430 836 1433 905 Z" fill="#080914"/>
<ellipse cx="1435" cy="793" rx="35" ry="42" fill="#1f58a8" opacity="0.39"/>
<ellipse cx="1435" cy="796" rx="33" ry="40" fill="#080914"/>
<path d="M1363 906 C1367 833 1406 828 1435 828 C1464 828 1503 833 1507 906 Z" fill="#080914"/>
<ellipse cx="1530" cy="794" rx="39" ry="43" fill="#1f58a8" opacity="0.33"/>
<ellipse cx="1530" cy="796" rx="37" ry="41" fill="#080914"/>
<path d="M1448 924 C1452 839 1496 834 1530 834 C1564 834 1609 839 1612 924 Z" fill="#080914"/>
<ellipse cx="1647" cy="785" rx="42" ry="51" fill="#1f58a8" opacity="0.26"/>
<ellipse cx="1647" cy="787" rx="40" ry="49" fill="#080914"/>
<path d="M1559 923 C1563 833 1611 827 1647 827 C1683 827 1731 833 1735 923 Z" fill="#080914"/>
<ellipse cx="1749" cy="771" rx="43" ry="49" fill="#1f58a8" opacity="0.2"/>
<ellipse cx="1749" cy="774" rx="41" ry="47" fill="#080914"/>
<path d="M1658 914 C1662 821 1712 815 1749 815 C1786 815 1836 821 1840 914 Z" fill="#080914"/>
<ellipse cx="1826" cy="789" rx="33" ry="35" fill="#1f58a8" opacity="0.15"/>
<ellipse cx="1826" cy="792" rx="31" ry="33" fill="#080914"/>
<path d="M1758 896 C1761 827 1798 822 1826 822 C1854 822 1890 827 1894 896 Z" fill="#080914"/>
<ellipse cx="1948" cy="776" rx="39" ry="46" fill="#1f58a8" opacity="0.08"/>
<ellipse cx="1948" cy="779" rx="37" ry="44" fill="#080914"/>
<path d="M1867 904 C1870 821 1915 816 1948 816 C1981 816 2026 821 2029 904 Z" fill="#080914"/>
<ellipse cx="2034" cy="768" rx="39" ry="48" fill="#1f58a8" opacity="0.04"/>
<ellipse cx="2034" cy="771" rx="37" ry="46" fill="#080914"/>
<path d="M1952 898 C1955 814 2000 808 2034 808 C2068 808 2113 814 2117 898 Z" fill="#080914"/>
</g>
<g filter="url(#b2)">
<ellipse cx="-48" cy="826" rx="54" ry="60" fill="#1f58a8" opacity="0.04"/>
<ellipse cx="-48" cy="829" rx="52" ry="58" fill="#070810"/>
<path d="M-162 1004 C-157 888 -95 880 -48 880 C-2 880 60 888 65 1004 Z" fill="#070810"/>
<ellipse cx="88" cy="863" rx="59" ry="67" fill="#1f58a8" opacity="0.04"/>
<ellipse cx="88" cy="866" rx="57" ry="65" fill="#070810"/>
<path d="M-38 1060 C-32 932 36 923 88 923 C139 923 208 932 214 1060 Z" fill="#070810"/>
<ellipse cx="263" cy="845" rx="54" ry="60" fill="#1f58a8" opacity="0.15"/>
<ellipse cx="263" cy="847" rx="52" ry="58" fill="#070810"/>
<path d="M149 1024 C154 907 217 899 263 899 C310 899 372 907 377 1024 Z" fill="#070810"/>
<ellipse cx="367" cy="869" rx="45" ry="49" fill="#1f58a8" opacity="0.21"/>
<ellipse cx="367" cy="872" rx="43" ry="47" fill="#070810"/>
<path d="M273 1018 C277 921 329 915 367 915 C406 915 458 921 462 1018 Z" fill="#070810"/>
<ellipse cx="532" cy="857" rx="53" ry="67" fill="#1f58a8" opacity="0.31"/>
<ellipse cx="532" cy="860" rx="51" ry="65" fill="#070810"/>
<path d="M420 1032 C425 918 486 911 532 911 C577 911 638 918 643 1032 Z" fill="#070810"/>
<ellipse cx="676" cy="847" rx="52" ry="59" fill="#1f58a8" opacity="0.4"/>
<ellipse cx="676" cy="850" rx="50" ry="57" fill="#070810"/>
<path d="M566 1020 C571 907 631 900 676 900 C721 900 781 907 786 1020 Z" fill="#070810"/>
<ellipse cx="775" cy="865" rx="49" ry="55" fill="#1f58a8" opacity="0.46"/>
<ellipse cx="775" cy="868" rx="47" ry="53" fill="#070810"/>
<path d="M672 1028 C677 922 733 915 775 915 C818 915 874 922 879 1028 Z" fill="#070810"/>
<ellipse cx="925" cy="878" rx="52" ry="59" fill="#1f58a8" opacity="0.55"/>
<ellipse cx="925" cy="880" rx="50" ry="57" fill="#070810"/>
<path d="M815 1049 C820 937 880 930 925 930 C970 930 1030 937 1035 1049 Z" fill="#070810"/>
<ellipse cx="1063" cy="862" rx="54" ry="64" fill="#1f58a8" opacity="0.61"/>
<ellipse cx="1063" cy="864" rx="52" ry="62" fill="#070810"/>
<path d="M948 1041 C954 924 1016 916 1063 916 C1109 916 1172 924 1177 1041 Z" fill="#070810"/>
<ellipse cx="1199" cy="876" rx="47" ry="54" fill="#1f58a8" opacity="0.53"/>
<ellipse cx="1199" cy="878" rx="45" ry="52" fill="#070810"/>
<path d="M1099 1032 C1104 930 1158 923 1199 923 C1239 923 1293 930 1298 1032 Z" fill="#070810"/>
<ellipse cx="1307" cy="872" rx="46" ry="55" fill="#1f58a8" opacity="0.47"/>
<ellipse cx="1307" cy="875" rx="44" ry="53" fill="#070810"/>
<path d="M1211 1024 C1216 925 1268 919 1307 919 C1347 919 1399 925 1404 1024 Z" fill="#070810"/>
<ellipse cx="1473" cy="849" rx="47" ry="56" fill="#1f58a8" opacity="0.37"/>
<ellipse cx="1473" cy="852" rx="45" ry="54" fill="#070810"/>
<path d="M1374 1005 C1378 904 1432 897 1473 897 C1514 897 1568 904 1572 1005 Z" fill="#070810"/>
<ellipse cx="1594" cy="852" rx="48" ry="53" fill="#1f58a8" opacity="0.29"/>
<ellipse cx="1594" cy="855" rx="46" ry="51" fill="#070810"/>
<path d="M1492 1012 C1497 908 1552 901 1594 901 C1635 901 1691 908 1695 1012 Z" fill="#070810"/>
<ellipse cx="1747" cy="862" rx="54" ry="64" fill="#1f58a8" opacity="0.2"/>
<ellipse cx="1747" cy="865" rx="52" ry="62" fill="#070810"/>
<path d="M1633 1041 C1638 924 1701 916 1747 916 C1794 916 1856 924 1861 1041 Z" fill="#070810"/>
<ellipse cx="1898" cy="834" rx="60" ry="73" fill="#1f58a8" opacity="0.11"/>
<ellipse cx="1898" cy="836" rx="58" ry="71" fill="#070810"/>
<path d="M1771 1032 C1777 903 1846 894 1898 894 C1950 894 2019 903 2025 1032 Z" fill="#070810"/>
<ellipse cx="1984" cy="853" rx="55" ry="62" fill="#1f58a8" opacity="0.06"/>
<ellipse cx="1984" cy="856" rx="53" ry="60" fill="#070810"/>
<path d="M1867 1036 C1872 917 1936 909 1984 909 C2031 909 2095 917 2100 1036 Z" fill="#070810"/>
</g>
<g filter="url(#b3)">
<ellipse cx="-149" cy="928" rx="71" ry="90" fill="#1f58a8" opacity="0.04"/>
<ellipse cx="-149" cy="930" rx="69" ry="88" fill="#06070e"/>
<path d="M-302 1167 C-295 1010 -211 1000 -149 1000 C-86 1000 -3 1010 4 1167 Z" fill="#06070e"/>
<ellipse cx="1" cy="917" rx="71" ry="80" fill="#1f58a8" opacity="0.04"/>
<ellipse cx="1" cy="919" rx="69" ry="78" fill="#06070e"/>
<path d="M-150 1153 C-143 998 -61 988 1 988 C63 988 145 998 152 1153 Z" fill="#06070e"/>
<ellipse cx="167" cy="909" rx="81" ry="98" fill="#1f58a8" opacity="0.09"/>
<ellipse cx="167" cy="912" rx="79" ry="96" fill="#06070e"/>
<path d="M-7 1181 C0 1003 96 991 167 991 C238 991 334 1003 341 1181 Z" fill="#06070e"/>
<ellipse cx="390" cy="931" rx="72" ry="91" fill="#1f58a8" opacity="0.22"/>
<ellipse cx="390" cy="933" rx="70" ry="89" fill="#06070e"/>
<path d="M235 1172 C242 1014 326 1004 390 1004 C453 1004 537 1014 544 1172 Z" fill="#06070e"/>
<ellipse cx="542" cy="952" rx="65" ry="73" fill="#1f58a8" opacity="0.32"/>
<ellipse cx="542" cy="955" rx="63" ry="71" fill="#06070e"/>
<path d="M403 1169 C409 1027 485 1017 542 1017 C598 1017 674 1027 680 1169 Z" fill="#06070e"/>
<ellipse cx="736" cy="950" rx="75" ry="82" fill="#1f58a8" opacity="0.43"/>
<ellipse cx="736" cy="952" rx="73" ry="80" fill="#06070e"/>
<path d="M575 1201 C582 1036 670 1025 736 1025 C801 1025 889 1036 896 1201 Z" fill="#06070e"/>
<ellipse cx="908" cy="954" rx="60" ry="72" fill="#1f58a8" opacity="0.53"/>
<ellipse cx="908" cy="956" rx="58" ry="70" fill="#06070e"/>
<path d="M780 1155 C786 1024 856 1015 908 1015 C961 1015 1031 1024 1037 1155 Z" fill="#06070e"/>
<ellipse cx="1138" cy="954" rx="61" ry="73" fill="#1f58a8" opacity="0.57"/>
<ellipse cx="1138" cy="956" rx="59" ry="71" fill="#06070e"/>
<path d="M1007 1158 C1013 1024 1085 1015 1138 1015 C1191 1015 1262 1024 1268 1158 Z" fill="#06070e"/>
<ellipse cx="1268" cy="958" rx="71" ry="81" fill="#1f58a8" opacity="0.49"/>
<ellipse cx="1268" cy="960" rx="69" ry="79" fill="#06070e"/>
<path d="M1117 1195 C1124 1039 1206 1029 1268 1029 C1330 1029 1413 1039 1420 1195 Z" fill="#06070e"/>
<ellipse cx="1427" cy="925" rx="60" ry="67" fill="#1f58a8" opacity="0.39"/>
<ellipse cx="1427" cy="928" rx="58" ry="65" fill="#06070e"/>
<path d="M1298 1127 C1304 995 1374 986 1427 986 C1480 986 1550 995 1556 1127 Z" fill="#06070e"/>
<ellipse cx="1672" cy="926" rx="82" ry="92" fill="#1f58a8" opacity="0.25"/>
<ellipse cx="1672" cy="928" rx="80" ry="90" fill="#06070e"/>
<path d="M1495 1201 C1503 1020 1600 1008 1672 1008 C1744 1008 1841 1020 1849 1201 Z" fill="#06070e"/>
<ellipse cx="1803" cy="922" rx="61" ry="72" fill="#1f58a8" opacity="0.17"/>
<ellipse cx="1803" cy="925" rx="59" ry="70" fill="#06070e"/>
<path d="M1673 1127 C1679 993 1750 984 1803 984 C1857 984 1928 993 1934 1127 Z" fill="#06070e"/>
<ellipse cx="1972" cy="902" rx="80" ry="92" fill="#1f58a8" opacity="0.07"/>
<ellipse cx="1972" cy="905" rx="78" ry="90" fill="#06070e"/>
<path d="M1801 1170 C1809 995 1902 983 1972 983 C2043 983 2136 995 2144 1170 Z" fill="#06070e"/>
</g>
<g filter="url(#b3)">
<ellipse cx="-142" cy="1032" rx="88" ry="107" fill="#1f58a8" opacity="0.04"/>
<ellipse cx="-142" cy="1035" rx="86" ry="105" fill="#05060c"/>
<path d="M-331 1327 C-322 1134 -219 1121 -142 1121 C-64 1121 39 1134 48 1327 Z" fill="#05060c"/>
<ellipse cx="45" cy="1016" rx="94" ry="117" fill="#1f58a8" opacity="0.04"/>
<ellipse cx="45" cy="1018" rx="92" ry="115" fill="#05060c"/>
<path d="M-158 1331 C-148 1124 -38 1110 45 1110 C128 1110 238 1124 247 1331 Z" fill="#05060c"/>
<ellipse cx="280" cy="1017" rx="85" ry="101" fill="#1f58a8" opacity="0.16"/>
<ellipse cx="280" cy="1020" rx="83" ry="99" fill="#05060c"/>
<path d="M97 1301 C106 1115 205 1102 280 1102 C354 1102 453 1115 462 1301 Z" fill="#05060c"/>
<ellipse cx="549" cy="1042" rx="80" ry="91" fill="#1f58a8" opacity="0.32"/>
<ellipse cx="549" cy="1044" rx="78" ry="89" fill="#05060c"/>
<path d="M378 1309 C386 1134 479 1122 549 1122 C619 1122 713 1134 721 1309 Z" fill="#05060c"/>
<ellipse cx="721" cy="1027" rx="89" ry="108" fill="#1f58a8" opacity="0.42"/>
<ellipse cx="721" cy="1029" rx="87" ry="106" fill="#05060c"/>
<path d="M529 1326 C538 1130 643 1117 721 1117 C799 1117 904 1130 913 1326 Z" fill="#05060c"/>
<ellipse cx="1008" cy="1072" rx="98" ry="106" fill="#1f58a8" opacity="0.59"/>
<ellipse cx="1008" cy="1074" rx="96" ry="104" fill="#05060c"/>
<path d="M797 1400 C807 1184 922 1170 1008 1170 C1095 1170 1210 1184 1219 1400 Z" fill="#05060c"/>
<ellipse cx="1208" cy="1043" rx="95" ry="113" fill="#1f58a8" opacity="0.53"/>
<ellipse cx="1208" cy="1045" rx="93" ry="111" fill="#05060c"/>
<path d="M1002 1362 C1012 1152 1124 1138 1208 1138 C1292 1138 1403 1152 1413 1362 Z" fill="#05060c"/>
<ellipse cx="1406" cy="1055" rx="80" ry="97" fill="#1f58a8" opacity="0.41"/>
<ellipse cx="1406" cy="1057" rx="78" ry="95" fill="#05060c"/>
<path d="M1235 1321 C1243 1147 1336 1135 1406 1135 C1476 1135 1569 1147 1577 1321 Z" fill="#05060c"/>
<ellipse cx="1652" cy="1050" rx="91" ry="114" fill="#1f58a8" opacity="0.26"/>
<ellipse cx="1652" cy="1053" rx="89" ry="112" fill="#05060c"/>
<path d="M1456 1356 C1465 1155 1572 1142 1652 1142 C1732 1142 1839 1155 1848 1356 Z" fill="#05060c"/>
<ellipse cx="1946" cy="1067" rx="92" ry="114" fill="#1f58a8" opacity="0.08"/>
<ellipse cx="1946" cy="1070" rx="90" ry="112" fill="#05060c"/>
<path d="M1748 1375 C1757 1173 1865 1160 1946 1160 C2027 1160 2135 1173 2144 1375 Z" fill="#05060c"/>
<ellipse cx="2151" cy="1022" rx="96" ry="107" fill="#1f58a8" opacity="0.04"/>
<ellipse cx="2151" cy="1025" rx="94" ry="105" fill="#05060c"/>
<path d="M1944 1345 C1953 1133 2066 1119 2151 1119 C2236 1119 2348 1133 2358 1345 Z" fill="#05060c"/>
</g>
<rect width="1995" height="1131" fill="url(#gSide)"/>
<rect width="1995" height="1131" fill="url(#gBottom)"/>
</g></defs></svg>
<!-- window frame -->
<div id="win">
  <div id="strip"></div>
  <!-- tab search button -->
  <div class="abs" style="left:517px;top:299px;width:82px;height:82px;border-radius:26px;background:#898c94"></div>
  <svg class="abs" style="left:540px;top:326px" width="36" height="30" viewBox="0 0 36 30"><path d="M7.5 9.5 L18 19.5 L28.5 9.5" fill="none" stroke="#2a2c30" stroke-width="5"/></svg>
  <!-- group chips -->
  <div class="chip" style="left:617px;width:164px;background:#643295;color:#a9a6b0"><span style="letter-spacing:0.7px;margin-left:0.7px">Музика</span></div>
  <div class="chip" style="left:811px;width:187px;background:#976d12;color:#1e1e1e"><span style="letter-spacing:-0.3px">Училище</span></div>
  <div class="chip" style="left:1027px;width:333px;background:#224e98;color:#a6a9b0"><span style="letter-spacing:0.55px;margin-left:0.5px">Социални мрежи</span></div>
  <div class="ul" style="left:623px;width:152px;background:#643295"></div>
  <div class="ul" style="left:817px;width:175px;background:#976d12"></div>
  <div class="ul" style="left:1034px;width:320px;background:#224e98"></div>
  <!-- active tab -->
  <svg class="abs" style="left:1370px;top:299px" width="720" height="101" viewBox="0 0 720 101">
    <path d="M0 101 L0 100 C18 100 31 87 31 69 L31 26 C31 11 42 0 57 0 L654 0 C669 0 680 11 680 26 L680 69 C680 87 693 100 711 100 L711 101 Z" fill="#939496"/>
  </svg>
  <!-- favicon -->
  <svg class="abs" style="left:1427px;top:325px" width="43" height="30" viewBox="0 0 43 30"><rect x="0.5" y="0.5" width="42" height="29" rx="8" fill="#991214"/><path d="M16.5 8 L28.5 15 L16.5 22 Z" fill="#a3a4a8"/></svg>
  <div class="abs t" style="left:1490px;top:318px;font-size:36px;line-height:44px;color:#1f2124;letter-spacing:-0.1px">YouTube</div>
  <svg class="abs" style="left:1986px;top:324px" width="32" height="32" viewBox="0 0 32 32"><path d="M5.5 5.5 L26.5 26.5 M26.5 5.5 L5.5 26.5" stroke="#1f2124" stroke-width="4.6" fill="none"/></svg>
  <svg class="abs" style="left:2096px;top:322px" width="36" height="36" viewBox="0 0 36 36"><path d="M18 4 L18 32 M4 18 L32 18" stroke="#26282c" stroke-width="4.4" fill="none"/></svg>
  <!-- window controls -->
  <svg class="abs" style="left:3020px;top:310px" width="300" height="60" viewBox="0 0 300 60">
    <path d="M8 30 L44.5 30" stroke="#1d4c9c" stroke-width="5.6" fill="none"/>
    <rect x="130.8" y="13.6" width="32" height="32" fill="none" stroke="#1d4c9c" stroke-width="5.6"/>
    <path d="M246.5 13.5 L278.5 45.5 M278.5 13.5 L246.5 45.5" stroke="#1d4c9c" stroke-width="5.6" fill="none"/>
  </svg>
  <!-- toolbar -->
  <div class="abs" style="left:496px;top:417px;width:2848px;height:97px;background:#939496;border-bottom:1.5px solid #88898b;box-sizing:border-box"></div>
  <div id="toolbar"></div>
  <div id="omni"></div>
  <div class="abs" style="left:807px;top:427px;width:57px;height:57px;border-radius:50%;background:#97989b"></div>
  <svg class="abs" style="left:520px;top:425px" width="260" height="62" viewBox="0 0 260 62">
    <path d="M33.5 15.5 L19 30 L33.5 44.5 M19 30 L49.5 30" fill="none" stroke="#303235" stroke-width="3.1"/>
    <path d="M121.5 15.5 L136 30 L121.5 44.5 M136 30 L105.5 30" fill="none" stroke="#6c6d70" stroke-width="3.1"/>
    <path d="M222.6 24.5 A14.3 14.3 0 1 0 223.8 35.5" fill="none" stroke="#303235" stroke-width="3.1"/>
    <path d="M225 14 L225 26 L213 26" fill="none" stroke="#303235" stroke-width="3.1"/>
  </svg>
  <svg class="abs" style="left:812px;top:432px" width="48" height="48" viewBox="0 0 48 48">
    <circle cx="13.6" cy="15.4" r="4.6" fill="none" stroke="#26282b" stroke-width="3.2"/>
    <path d="M23.5 15.4 L37.5 15.4 M9.5 30.9 L23.5 30.9" stroke="#26282b" stroke-width="3.2" fill="none"/>
    <circle cx="33" cy="30.9" r="4.6" fill="none" stroke="#26282b" stroke-width="3.2"/>
  </svg>
  <div class="abs t" style="left:885px;top:433px;font-size:36px;line-height:44px;color:#26282b;letter-spacing:-0.05px">youtube.com/watch/</div>
  <!-- star -->
  <svg class="abs" style="left:2915.8px;top:433.3px" width="48" height="48" viewBox="0 0 48 48"><path d="M24 8.2 L28.94 18.4 L40.17 19.95 L31.99 27.8 L33.99 38.95 L24 33.6 L14.01 38.95 L16.01 27.8 L7.83 19.95 L19.06 18.4 Z" fill="none" stroke="#303236" stroke-width="3.4" stroke-linejoin="miter" stroke-miterlimit="10"/></svg>
  <!-- puzzle -->
  <svg class="abs" style="left:3034px;top:430px" width="50" height="50" viewBox="0 0 50 50">
    <path d="M7 11 L38 11 L38 42 L7 42 L7 33 A6.3 6.3 0 0 0 7 20.4 Z" fill="none" stroke="#303236" stroke-width="3.8" stroke-linejoin="round"/>
    <path d="M17.6 10 A5 5 0 0 1 27.6 10 Z M39 21.2 A5 5 0 0 1 39 31.2 Z" fill="#303236"/>
  </svg>
  <!-- avatar -->
  <svg class="abs" style="left:3255px;top:432px" width="50" height="50" viewBox="0 0 50 50">
    <defs><clipPath id="avc"><circle cx="25" cy="24.6" r="24.3"/></clipPath></defs>
    <g clip-path="url(#avc)">
      <rect width="50" height="50" fill="#9b9c9f"/>
      <rect x="0" y="0" width="12" height="36" fill="#8e8f92"/>
      <rect x="36" y="6" width="14" height="30" fill="#929396"/>
      <path d="M-2 50 C0 39 10 34.5 25.5 34.5 C41 34.5 50 39 52 50 Z" fill="#b3b4b7"/>
      <path d="M20.5 30 L30.5 30 L29.5 40 L26 48 L22 40 Z" fill="#6f5146"/>
      <ellipse cx="25.5" cy="20.5" rx="9.3" ry="12.6" fill="#76574b"/>
      <path d="M15.6 19.5 C13.5 6 21 0.8 26.5 1 C33.5 1.2 37.5 8 35.6 19 C34 13 30.5 10 25.5 10 C20.5 10 17.5 13 15.6 19.5 Z" fill="#2a2727"/>
      <path d="M21.3 26.3 C23.3 28.8 28 28.8 29.8 26.3 C28 27.3 23.3 27.3 21.3 26.3Z" fill="#c4b8b6"/>
      <ellipse cx="21.6" cy="19" rx="1.5" ry="1" fill="#2e2220"/><ellipse cx="29.4" cy="19" rx="1.5" ry="1" fill="#2e2220"/>
    </g>
  </svg>

<!-- page -->
<div id="page">
  <svg class="abs" style="left:540px;top:540px" width="40" height="34" viewBox="0 0 40 34"><path d="M5 6.9 H35.8 M5 17.2 H35.8 M5 27.4 H35.8" stroke="#141414" stroke-width="2.3" fill="none"/></svg>
  <svg class="abs" style="left:621px;top:540px" width="52" height="36" viewBox="0 0 52 36"><rect x="1.2" y="1.2" width="48.5" height="33.2" rx="9.5" fill="#8f1114"/><path d="M19.6 11 L33 18 L19.6 25 Z" fill="#9b9ca1"/></svg>
  <div class="abs t" style="left:675.5px;top:532px;font-size:45px;line-height:52px;font-weight:bold;color:#1c1d20;-webkit-text-stroke:1.3px #1c1d20;transform-origin:0 0;transform:scaleX(0.568);letter-spacing:-1.2px">YouTube</div>
  <!-- search -->
  <div class="abs" style="left:1431px;top:524.5px;width:1024px;height:67px;border-radius:34px;border:2px solid #818285;box-sizing:border-box;background:#939495"></div>
  <div class="abs" style="left:2346px;top:526.5px;width:107px;height:63px;border-radius:0 32px 32px 0;border-left:2px solid #818285;box-sizing:border-box;background:#8e8f91"></div>
  <div class="abs t" style="left:1459px;top:537.4px;font-size:27.5px;line-height:40px;color:#5c5d60">Търсене</div>
  <svg class="abs" style="left:2378px;top:536px" width="44" height="44" viewBox="0 0 44 44"><circle cx="20.8" cy="20.3" r="13.2" fill="none" stroke="#1d1e20" stroke-width="2.1"/><path d="M30.2 29.7 L37.2 36.7" stroke="#1d1e20" stroke-width="2.1"/></svg>
  <div class="abs" style="left:2482px;top:524px;width:68px;height:68px;border-radius:50%;background:#8c8d8f"></div>
  <svg class="abs" style="left:2496px;top:538px" width="40" height="44" viewBox="0 0 40 44"><rect x="15.5" y="5" width="9.6" height="24" rx="4.8" fill="#222326"/><path d="M9 21 C9 34 31 34 31 21" fill="none" stroke="#222326" stroke-width="2.6"/><path d="M20 31 L20 39" stroke="#222326" stroke-width="2.6"/></svg>
  <!-- video -->
  <div id="video">
    <svg width="1995" height="1131" viewBox="0 0 1995 1131" style="display:block"><use href="#concert"/><rect width="1995" height="1131" fill="#1e1e26" opacity="0.467"/></svg>
  </div>
  <div class="abs" style="left:651px;top:1601.7px;width:1140px;height:121.3px;border-radius:60.6px;background:#202126"></div>
  <svg class="abs" style="left:716px;top:1638px" width="60" height="50" viewBox="0 0 60 50">
    <path d="M6.2 13.5 L6.2 9.8 A3.2 3.2 0 0 1 9.4 6.6 L50.6 6.6 A3.2 3.2 0 0 1 53.8 9.8 L53.8 40.2 A3.2 3.2 0 0 1 50.6 43.4 L35 43.4" fill="none" stroke="#fff" stroke-width="4.4"/>
    <path d="M4 44.6 L4 37.6 A7 7 0 0 1 11 44.6 Z" fill="#fff"/>
    <path d="M4 30.2 A14.4 14.4 0 0 1 18.4 44.6" fill="none" stroke="#fff" stroke-width="4.4"/>
    <path d="M4 20.5 A24 24 0 0 1 28 44.6" fill="none" stroke="#fff" stroke-width="4.4"/>
  </svg>
  <div class="abs t" style="left:805px;top:1641px;font-size:36px;line-height:44px;color:#fff;letter-spacing:0.62px">Възпроизвежда се на телевизора във всекидневната</div>
  <div class="abs t" style="left:619.5px;top:1790px;font-size:41px;line-height:50px;color:#202225">Концерт на живо – Палм Спрингс</div>
<div class="abs" style="left:2648px;top:1028px;width:287px;height:18px;border-radius:0 0 18px 18px;background:#868789"></div>
<div class="abs" style="left:2648px;top:1063px;width:287px;height:166px;border-radius:18px;background:#868789"></div>
<div class="abs" style="left:2648px;top:1242px;width:287px;height:166px;border-radius:18px;background:#868789"></div>
<div class="abs" style="left:2648px;top:1421.5px;width:287px;height:170.5px;border-radius:18px;background:#868789"></div>
<div class="abs" style="left:2648px;top:1600.7px;width:287px;height:165.79999999999995px;border-radius:18px;background:#868789"></div>
<div class="abs" style="left:2648px;top:1777px;width:287px;height:103px;border-radius:18px 18px 0 0;background:#868789"></div>
<div class="abs" style="left:2943px;top:1066.8px;width:287.4px;height:32.2px;border-radius:16.1px;background:#8a8b8e"></div>
<div class="abs" style="left:2943px;top:1103.9px;width:343.3px;height:32.8px;border-radius:16.4px;background:#8a8b8e"></div>
<div class="abs" style="left:2943px;top:1141.5px;width:152.6px;height:26.1px;border-radius:13px;background:#8a8b8e"></div>
<div class="abs" style="left:2943px;top:1173px;width:229px;height:25.6px;border-radius:12.8px;background:#8a8b8e"></div>
<div class="abs" style="left:2943px;top:1242.3px;width:287.4px;height:32.7px;border-radius:16.4px;background:#8a8b8e"></div>
<div class="abs" style="left:2943px;top:1280px;width:343.3px;height:32.8px;border-radius:16.4px;background:#8a8b8e"></div>
<div class="abs" style="left:2943px;top:1322px;width:152.6px;height:24.8px;border-radius:12.4px;background:#8a8b8e"></div>
<div class="abs" style="left:2943px;top:1355.3px;width:251px;height:25.5px;border-radius:12.8px;background:#8a8b8e"></div>
<div class="abs" style="left:2943px;top:1432.4px;width:287.4px;height:32.2px;border-radius:16.1px;background:#8a8b8e"></div>
<div class="abs" style="left:2943px;top:1469.5px;width:208px;height:26.1px;border-radius:13px;background:#8a8b8e"></div>
<div class="abs" style="left:2943px;top:1606px;width:355.4px;height:32.3px;border-radius:16.1px;background:#8a8b8e"></div>
<div class="abs" style="left:2943px;top:1643.8px;width:307.5px;height:32.2px;border-radius:16.1px;background:#8a8b8e"></div>
<div class="abs" style="left:2943px;top:1683.3px;width:152.6px;height:24.9px;border-radius:12.5px;background:#8a8b8e"></div>
<div class="abs" style="left:2943px;top:1714.2px;width:334.8px;height:25.5px;border-radius:12.8px;background:#8a8b8e"></div>
<div class="abs" style="left:2943px;top:1777.4px;width:334.8px;height:32.2px;border-radius:16.1px;background:#8a8b8e"></div>
<div class="abs" style="left:2943px;top:1815px;width:307.5px;height:31.6px;border-radius:15.8px;background:#8a8b8e"></div>
<div class="abs" style="left:2943px;top:1854px;width:152.6px;height:32px;border-radius:16px;background:#8a8b8e"></div>
</div>
</div>
<div id="popshadow"></div>
<!-- media button highlighted -->
<div class="abs" style="left:3115.7px;top:398.7px;width:114.6px;height:114.6px;border-radius:50%;background:#e9eaed;box-shadow:0 8px 26px rgba(0,0,0,0.26)"></div>
<svg class="abs" style="left:3140px;top:432px" width="70" height="56" viewBox="0 0 70 56">
  <path d="M6 12.4 H40 M6 23.7 H40 M6 34.5 H29" stroke="#000" stroke-width="5.4" fill="none"/>
  <path d="M45.9 9.7 H59.6 V15.1 H51.6 V40.5 H45.9 Z" fill="#000"/>
  <circle cx="42.9" cy="40.5" r="8.6" fill="#000"/>
</svg>
<!-- popup -->
<div id="popup">
  <div class="abs" style="left:0;top:0;width:801.3px;height:265px;background:#060711"></div>
  <svg class="abs" style="left:434.8px;top:0" width="366.5" height="265" viewBox="352.4 71.5 1281.5 928" preserveAspectRatio="xMidYMid slice"><use href="#concert"/>
    <rect x="352" y="71" width="1283" height="930" fill="url(#thfade)"/></svg>
  <div class="abs" style="left:42px;top:38.8px;width:57px;height:16px;border-radius:8px;background:#ccd0fb"></div>
  <div class="abs" style="left:42px;top:87.7px;width:256.5px;height:16px;border-radius:8px;background:#ccd0fb"></div>
  <div class="abs" style="left:42px;top:114.8px;width:133px;height:18px;border-radius:9px;background:#ccd0fb"></div>
  <svg class="abs" style="left:40px;top:170px" width="330" height="70" viewBox="0 0 330 70">
    <g fill="#ccd0fb">
      <path d="M8.3 34 L25.8 22.3 L25.8 45.7 Z M28.8 34 L46.3 22.3 L46.3 45.7 Z"/>
      <path d="M97.5 20.5 L121.5 34.3 L97.5 48.1 Z"/>
      <path d="M205.4 34 L187.9 22.3 L187.9 45.7 Z M184.9 34 L167.4 22.3 L167.4 45.7 Z"/>
      <rect x="236" y="9.5" width="3.8" height="49.5"/>
      <rect x="294.5" y="34.5" width="18.3" height="14"/>
    </g>
    <path d="M286 14.5 L310.8 14.5 L310.8 31 M269.5 28 L269.5 46.5 L290.5 46.5" fill="none" stroke="#ccd0fb" stroke-width="3.6"/>
    <path d="M268.5 13.5 L281 26 M271 28.5 L282.8 28.5 L282.8 16.8" fill="none" stroke="#ccd0fb" stroke-width="3"/>
  </svg>
  <!-- rows -->
  <svg class="abs" style="left:42px;top:294px" width="56" height="48" viewBox="0 0 56 48">
    <rect x="7.2" y="7.3" width="41" height="32.4" rx="2.5" fill="none" stroke="#111" stroke-width="4.2"/>
    <path d="M15 20.5 H19.5 M23 20.5 H41 M15 28.6 H33 M36.5 28.6 H41" stroke="#111" stroke-width="3.2" fill="none"/>
  </svg>
  <div class="abs t" style="left:124.5px;top:294.3px;font-size:34.5px;line-height:44px;color:#1b1c1f;letter-spacing:0.12px">Надписи на живо</div>
  <svg class="abs" style="left:700px;top:298px" width="64" height="40" viewBox="0 0 64 40">
    <rect x="8.7" y="8.7" width="45" height="22.4" rx="11.2" fill="none" stroke="#000" stroke-width="5"/>
    <circle cx="19.7" cy="19.9" r="6.6" fill="#000"/>
  </svg>
  <div class="abs" style="left:0;top:369px;width:801.3px;height:1.2px;background:#8593d2"></div>
  <svg class="abs" style="left:42px;top:394px" width="56" height="56" viewBox="0 0 56 56">
    <g transform="translate(27.7 27.6)">
      <path d="M-4.15 -13.58L-3.7 -19.96L3.7 -19.96L4.15 -13.58A14.2 14.2 0 0 1 9.68 -10.39L15.44 -13.18L19.14 -6.78L13.84 -3.19A14.2 14.2 0 0 1 13.84 3.19L19.14 6.78L15.44 13.18L9.68 10.39A14.2 14.2 0 0 1 4.15 13.58L3.7 19.96L-3.7 19.96L-4.15 13.58A14.2 14.2 0 0 1 -9.68 10.39L-15.44 13.18L-19.14 6.78L-13.84 3.19A14.2 14.2 0 0 1 -13.84 -3.19L-19.14 -6.78L-15.44 -13.18L-9.68 -10.39A14.2 14.2 0 0 1 -4.15 -13.58Z" fill="none" stroke="#111" stroke-width="3.9" stroke-linejoin="round"/>
      <circle r="6.6" fill="#111"/>
    </g>
  </svg>
  <div class="abs t" style="left:124.5px;top:397.5px;font-size:34.5px;line-height:44px;color:#1b1c1f;letter-spacing:0.3px">Настройки за надписите</div>
  <svg class="abs" style="left:720px;top:395px" width="56" height="56" viewBox="0 0 56 56">
    <path d="M23.5 8.4 L8.4 8.4 L8.4 44 L44 44 L44 29" fill="none" stroke="#111" stroke-width="3.7"/>
    <path d="M29 8.4 L44 8.4 L44 23.4 M44 8.4 L20.5 32" fill="none" stroke="#111" stroke-width="3.7"/>
  </svg>
</div>
</body></html>
